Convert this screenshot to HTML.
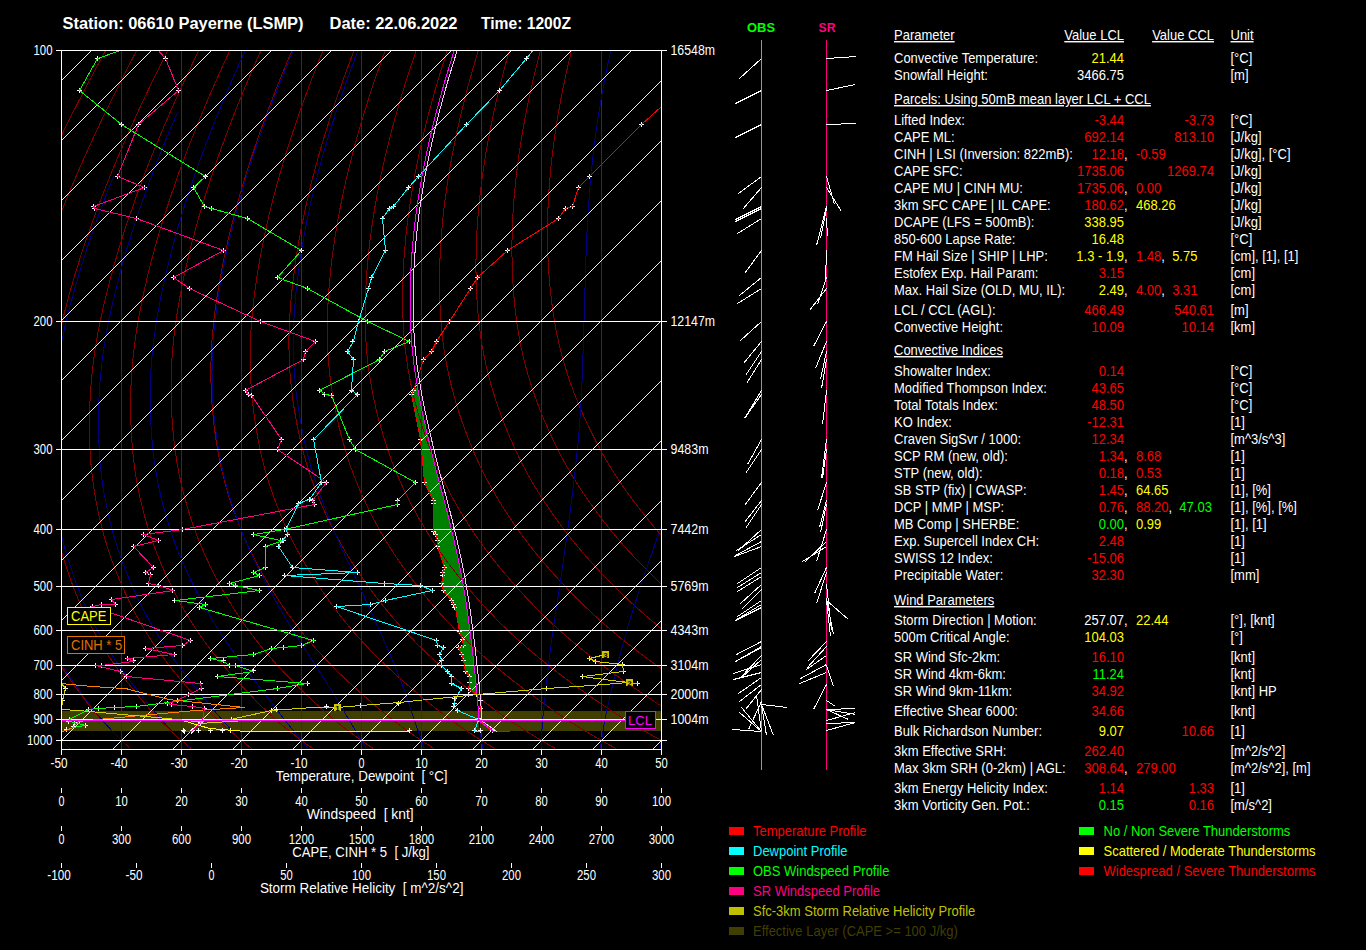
<!DOCTYPE html><html><head><meta charset="utf-8"><style>html,body{margin:0;padding:0;background:#000;width:1366px;height:950px;overflow:hidden}svg{display:block}text{font-family:"Liberation Sans",sans-serif}</style></head><body>
<svg width="1366" height="950" viewBox="0 0 1366 950">
<rect width="1366" height="950" fill="#000"/>
<defs><clipPath id="pc"><rect x="62" y="51" width="599" height="698"/></clipPath></defs>
<g clip-path="url(#pc)" shape-rendering="crispEdges">
<rect x="62" y="711" width="599" height="20" fill="#403e00"/>
<polygon points="413.89,388 413.54,389 413.2,390 412.89,391 412.57,392 412.26,393 411.95,394 411.74,395 411.93,396 412.13,397 412.33,398 412.52,399 412.72,400 412.91,401 413.11,402 413.3,403 413.5,404 413.69,405 413.89,406 414.09,407 414.28,408 414.48,409 414.67,410 414.87,411 415.06,412 415.26,413 415.45,414 415.65,415 415.84,416 416.04,417 416.24,418 416.43,419 416.63,420 416.82,421 417.02,422 417.21,423 417.41,424 417.6,425 417.8,426 418,427 418.19,428 418.39,429 418.58,430 418.78,431 418.97,432 419.17,433 419.36,434 419.56,435 419.75,436 419.95,437 420.15,438 420.34,439 420.49,440 420.61,441 420.74,442 420.86,443 420.99,444 421.11,445 421.24,446 421.36,447 421.49,448 421.61,449 421.73,450 421.82,451 421.9,452 421.99,453 422.08,454 422.17,455 422.26,456 422.35,457 422.44,458 422.53,459 422.62,460 422.71,461 422.79,462 422.88,463 422.97,464 423.06,465 423.15,466 423.24,467 423.33,468 423.42,469 423.51,470 423.59,471 423.68,472 423.77,473 423.86,474 423.95,475 424.04,476 424.13,477 424.22,478 424.31,479 424.4,480 424.48,481 424.57,482 424.94,483 425.42,484 425.9,485 426.38,486 426.86,487 427.34,488 427.82,489 428.3,490 428.78,491 429.26,492 429.74,493 430.22,494 430.7,495 431.18,496 431.66,497 432.14,498 432.62,499 433.1,500 433.1,501 433.1,502 433.1,503 433.1,504 433.12,505 433.13,506 433.15,507 433.16,508 433.18,509 433.19,510 433.21,511 433.22,512 433.23,513 433.25,514 433.26,515 433.28,516 433.29,517 433.31,518 433.32,519 433.34,520 433.35,521 433.36,522 433.38,523 433.39,524 433.41,525 433.42,526 433.44,527 433.45,528 433.47,529 433.48,530 433.49,531 433.87,532 434.48,533 435.09,534 435.57,535 435.9,536 436.23,537 436.57,538 436.9,539 437.23,540 437.38,541 437.47,542 437.57,543 437.66,544 437.76,545 437.85,546 438.07,547 438.4,548 438.73,549 439.06,550 439.39,551 439.72,552 440.06,553 440.39,554 440.72,555 441.05,556 441.38,557 441.71,558 442.05,559 442.38,560 442.71,561 443.04,562 443.37,563 443.71,564 444.04,565 444.37,566 444.7,567 444.43,568 443.9,569 443.37,570 442.84,571 442.31,572 442.29,573 442.6,574 442.91,575 442.89,576 442.74,577 442.59,578 442.43,579 442.28,580 442.13,581 441.98,582 441.82,583 441.73,584 441.85,585 441.98,586 442.13,587 442.47,588 442.8,589 443.13,590 443.71,591 444.52,592 445.34,593 446.15,594 446.96,595 447.78,596 448.59,597 449.41,598 450.22,599 451.04,600 451.63,601 452.18,602 452.72,603 453.27,604 453.81,605 454.38,606 454.94,607 455.17,608 455.35,609 455.53,610 455.71,611 455.9,612 456.08,613 456.26,614 456.45,615 456.63,616 456.81,617 457,618 457.18,619 457.37,620 457.55,621 457.73,622 457.91,623 458.1,624 458.28,625 458.46,626 458.65,627 458.83,628 459.01,629 459.2,630 459.38,631 459.73,632 460.1,633 460.47,634 460.84,635 461.21,636 461.58,637 461.95,638 462.32,639 462.61,640 462.84,641 463.07,642 463.3,643 463.53,644 463.75,645 462.17,646 460.13,647 458.82,648 459.24,649 459.65,650 460.06,651 460.47,652 460.89,653 461.3,654 461.6,655 461.9,656 462.2,657 462.51,658 462.81,659 463.11,660 463.36,661 463.6,662 463.84,663 464.07,664 464.31,665 464.52,666 464.73,667 464.94,668 465.14,669 465.35,670 465.56,671 465.93,672 466.69,673 467.45,674 468.21,675 468.97,676 469.5,677 469.5,678 469.5,679 469.5,680 469.5,681 469.5,682 469.5,683 469.38,684 469.25,685 469.13,686 469.01,687 468.89,688 469.2,689 470.53,690 471.87,691 473.2,692 474.53,693 475.87,694 477.04,694 476.95,693 476.85,692 476.76,691 476.67,690 476.57,689 476.47,688 476.37,687 476.28,686 476.17,685 476.07,684 475.97,683 475.87,682 475.76,681 475.66,680 475.55,679 475.45,678 475.34,677 475.23,676 475.13,675 475.02,674 474.91,673 474.8,672 474.69,671 474.59,670 474.48,669 474.37,668 474.26,667 474.15,666 474.05,665 473.94,664 473.83,663 473.72,662 473.61,661 473.49,660 473.38,659 473.27,658 473.15,657 473.04,656 472.92,655 472.8,654 472.68,653 472.57,652 472.45,651 472.33,650 472.21,649 472.09,648 471.96,647 471.84,646 471.72,645 471.6,644 471.47,643 471.35,642 471.22,641 471.1,640 470.97,639 470.85,638 470.72,637 470.6,636 470.47,635 470.34,634 470.22,633 470.09,632 469.96,631 469.84,630 469.71,629 469.58,628 469.45,627 469.32,626 469.19,625 469.06,624 468.93,623 468.8,622 468.66,621 468.53,620 468.4,619 468.26,618 468.13,617 467.99,616 467.85,615 467.71,614 467.57,613 467.43,612 467.29,611 467.15,610 467.01,609 466.86,608 466.72,607 466.57,606 466.43,605 466.28,604 466.13,603 465.98,602 465.83,601 465.68,600 465.52,599 465.37,598 465.21,597 465.05,596 464.89,595 464.73,594 464.57,593 464.41,592 464.24,591 464.08,590 463.91,589 463.74,588 463.57,587 463.4,586 463.23,585 463.05,584 462.88,583 462.7,582 462.52,581 462.34,580 462.15,579 461.97,578 461.78,577 461.59,576 461.4,575 461.21,574 461.02,573 460.82,572 460.62,571 460.43,570 460.23,569 460.02,568 459.82,567 459.62,566 459.41,565 459.21,564 459,563 458.79,562 458.58,561 458.37,560 458.15,559 457.94,558 457.72,557 457.51,556 457.29,555 457.07,554 456.85,553 456.63,552 456.41,551 456.18,550 455.96,549 455.74,548 455.51,547 455.28,546 455.06,545 454.83,544 454.6,543 454.37,542 454.14,541 453.91,540 453.68,539 453.44,538 453.21,537 452.98,536 452.74,535 452.51,534 452.28,533 452.04,532 451.8,531 451.57,530 451.33,529 451.09,528 450.85,527 450.61,526 450.37,525 450.13,524 449.88,523 449.64,522 449.39,521 449.14,520 448.89,519 448.64,518 448.39,517 448.14,516 447.89,515 447.63,514 447.38,513 447.12,512 446.87,511 446.61,510 446.35,509 446.09,508 445.83,507 445.57,506 445.31,505 445.05,504 444.79,503 444.52,502 444.26,501 444,500 443.73,499 443.47,498 443.2,497 442.94,496 442.67,495 442.41,494 442.14,493 441.88,492 441.61,491 441.34,490 441.08,489 440.81,488 440.55,487 440.28,486 440.01,485 439.75,484 439.48,483 439.22,482 438.95,481 438.69,480 438.42,479 438.16,478 437.89,477 437.63,476 437.37,475 437.11,474 436.84,473 436.58,472 436.32,471 436.06,470 435.8,469 435.54,468 435.29,467 435.03,466 434.77,465 434.52,464 434.26,463 434.01,462 433.76,461 433.5,460 433.25,459 433,458 432.75,457 432.51,456 432.26,455 432.02,454 431.77,453 431.53,452 431.29,451 431.05,450 430.81,449 430.57,448 430.33,447 430.09,446 429.85,445 429.61,444 429.38,443 429.14,442 428.9,441 428.66,440 428.43,439 428.19,438 427.95,437 427.72,436 427.48,435 427.25,434 427.02,433 426.78,432 426.55,431 426.32,430 426.09,429 425.86,428 425.63,427 425.4,426 425.17,425 424.95,424 424.72,423 424.5,422 424.27,421 424.05,420 423.83,419 423.61,418 423.39,417 423.17,416 422.95,415 422.74,414 422.52,413 422.31,412 422.1,411 421.89,410 421.68,409 421.47,408 421.26,407 421.05,406 420.85,405 420.65,404 420.45,403 420.25,402 420.05,401 419.85,400 419.65,399 419.46,398 419.27,397 419.08,396 418.89,395 418.7,394 418.52,393 418.33,392 418.15,391 417.97,390 417.79,389 417.61,388" fill="#008000" stroke="none"/>
<line x1="121.5" y1="50" x2="121.5" y2="749" stroke="#005000" stroke-width="1"/>
<line x1="181.5" y1="50" x2="181.5" y2="749" stroke="#005000" stroke-width="1"/>
<line x1="241.5" y1="50" x2="241.5" y2="749" stroke="#005000" stroke-width="1"/>
<line x1="301.5" y1="50" x2="301.5" y2="749" stroke="#005000" stroke-width="1"/>
<line x1="361.5" y1="50" x2="361.5" y2="749" stroke="#005000" stroke-width="1"/>
<line x1="421.5" y1="50" x2="421.5" y2="749" stroke="#005000" stroke-width="1"/>
<line x1="481.5" y1="50" x2="481.5" y2="749" stroke="#005000" stroke-width="1"/>
<line x1="541.5" y1="50" x2="541.5" y2="749" stroke="#005000" stroke-width="1"/>
<line x1="601.5" y1="50" x2="601.5" y2="749" stroke="#005000" stroke-width="1"/>
<polyline points="105.62,50.5 104.53,52.5 103.44,54.5 102.35,56.5 101.26,58.5 100.18,60.5 99.09,62.5 98.02,64.5 96.94,66.5 95.86,68.5 94.79,70.5 93.72,72.5 92.66,74.5 91.6,76.5 90.54,78.5 89.48,80.5 88.42,82.5 87.37,84.5 86.32,86.5 85.27,88.5 84.23,90.5 83.19,92.5 82.15,94.5 81.11,96.5 80.08,98.5 79.05,100.5 78.02,102.5 77,104.5 75.98,106.5 74.96,108.5 73.94,110.5 72.93,112.5 71.92,114.5 70.91,116.5 69.91,118.5 68.91,120.5 67.91,122.5 66.92,124.5 65.93,126.5 64.94,128.5 63.95,130.5 62.97,132.5 61.99,134.5 61.01,136.5 60.04,138.5 59.07,140.5 58.1,142.5 57.14,144.5 56.18,146.5 55.22,148.5 54.26,150.5 53.31,152.5 52.37,154.5 51.42,156.5 50.48,158.5 49.54,160.5 48.61,162.5 47.68,164.5 46.75,166.5 45.82,168.5 44.9,170.5 43.98,172.5 43.07,174.5 42.16,176.5 41.25,178.5 40.35,180.5 39.45,182.5 38.55,184.5 37.65,186.5 36.76,188.5 35.88,190.5 34.99,192.5 34.11,194.5 33.24,196.5 32.37,198.5 31.5,200.5 30.63,202.5 29.77,204.5 28.91,206.5 28.06,208.5 27.21,210.5 26.36,212.5 25.52,214.5 24.68,216.5 23.85,218.5 23.02,220.5 22.19,222.5 21.37,224.5 20.55,226.5 19.73,228.5 18.92,230.5 18.11,232.5 17.31,234.5 16.51,236.5 15.71,238.5 14.92,240.5 14.14,242.5 13.35,244.5 12.57,246.5 11.8,248.5 11.03,250.5 10.26,252.5 9.5,254.5 8.74,256.5 7.99,258.5 7.24,260.5 6.49,262.5 5.75,264.5 5.02,266.5 4.28,268.5 3.56,270.5 2.83,272.5 2.11,274.5 1.4,276.5 0.69,278.5 -0.02,280.5 -0.72,282.5 -1.41,284.5 -2.1,286.5 -2.79,288.5 -3.47,290.5 -4.15,292.5 -4.82,294.5 -5.49,296.5 -6.15,298.5 -6.81,300.5 -7.47,302.5 -8.11,304.5 -8.76,306.5 -9.4,308.5 -10.03,310.5 -10.66,312.5 -11.28,314.5 -11.9,316.5 -12.52,318.5 -13.12,320.5 -13.73,322.5 -14.32,324.5 -14.91,326.5 -15.5,328.5 -16.07,330.5 -16.64,332.5 -17.2,334.5 -17.76,336.5 -18.31,338.5 -18.85,340.5 -19.38,342.5 -19.91,344.5 -20.43,346.5 -20.94,348.5 -21.44,350.5 -21.94,352.5 -22.43,354.5 -22.91,356.5 -23.39,358.5 -23.86,360.5 -24.32,362.5 -24.78,364.5 -25.22,366.5 -25.66,368.5 -26.1,370.5 -26.52,372.5 -26.94,374.5 -27.35,376.5 -27.76,378.5 -28.15,380.5 -28.54,382.5 -28.92,384.5 -29.3,386.5 -29.67,388.5 -30.03,390.5 -30.38,392.5 -30.73,394.5 -31.06,396.5 -31.4,398.5 -31.72,400.5 -32.04,402.5 -32.35,404.5 -32.65,406.5 -32.95,408.5 -33.24,410.5 -33.52,412.5 -33.8,414.5 -34.06,416.5 -34.33,418.5 -34.58,420.5 -34.83,422.5 -35.07,424.5 -35.3,426.5 -35.53,428.5 -35.75,430.5 -35.97,432.5 -36.18,434.5 -36.38,436.5 -36.57,438.5 -36.76,440.5 -36.94,442.5 -37.12,444.5 -37.29,446.5 -37.45,448.5 -37.61,450.5 -37.76,452.5 -37.9,454.5 -38.03,456.5 -38.15,458.5 -38.26,460.5 -38.35,462.5 -38.44,464.5 -38.52,466.5 -38.59,468.5 -38.65,470.5 -38.7,472.5 -38.75,474.5 -38.78,476.5 -38.8,478.5 -38.81,480.5 -38.81,482.5 -38.8,484.5 -38.79,486.5 -38.76,488.5 -38.72,490.5 -38.68,492.5 -38.62,494.5 -38.56,496.5 -38.48,498.5 -38.4,500.5 -38.3,502.5 -38.2,504.5 -38.09,506.5 -37.97,508.5 -37.84,510.5 -37.7,512.5 -37.55,514.5 -37.39,516.5 -37.23,518.5 -37.05,520.5 -36.87,522.5 -36.68,524.5 -36.48,526.5 -36.27,528.5 -36.05,530.5 -35.82,532.5 -35.58,534.5 -35.33,536.5 -35.06,538.5 -34.79,540.5 -34.5,542.5 -34.19,544.5 -33.88,546.5 -33.56,548.5 -33.22,550.5 -32.87,552.5 -32.51,554.5 -32.14,556.5 -31.76,558.5 -31.36,560.5 -30.96,562.5 -30.54,564.5 -30.11,566.5 -29.67,568.5 -29.23,570.5 -28.77,572.5 -28.3,574.5 -27.82,576.5 -27.33,578.5 -26.83,580.5 -26.32,582.5 -25.8,584.5 -25.27,586.5 -24.73,588.5 -24.18,590.5 -23.62,592.5 -23.05,594.5 -22.46,596.5 -21.87,598.5 -21.26,600.5 -20.64,602.5 -20,604.5 -19.35,606.5 -18.69,608.5 -18.02,610.5 -17.33,612.5 -16.63,614.5 -15.92,616.5 -15.19,618.5 -14.44,620.5 -13.68,622.5 -12.91,624.5 -12.12,626.5 -11.31,628.5 -10.49,630.5 -9.65,632.5 -8.79,634.5 -7.92,636.5 -7.02,638.5 -6.11,640.5 -5.19,642.5 -4.24,644.5 -3.28,646.5 -2.3,648.5 -1.31,650.5 -0.29,652.5 0.73,654.5 1.78,656.5 2.83,658.5 3.91,660.5 5,662.5 6.1,664.5 7.22,666.5 8.35,668.5 9.51,670.5 10.69,672.5 11.89,674.5 13.1,676.5 14.33,678.5 15.58,680.5 16.85,682.5 18.13,684.5 19.42,686.5 20.73,688.5 22.05,690.5 23.38,692.5 24.72,694.5 26.07,696.5 27.43,698.5 28.79,700.5 30.17,702.5 31.56,704.5 32.97,706.5 34.4,708.5 35.85,710.5 37.33,712.5 38.84,714.5 40.38,716.5 41.95,718.5 43.57,720.5 45.22,722.5 46.9,724.5 48.62,726.5 50.37,728.5 52.15,730.5 53.96,732.5 55.8,734.5 57.67,736.5 59.57,738.5 61.5,740.5 63.47,742.5 65.48,744.5 67.54,746.5 69.63,748.5" fill="none" stroke="#800000" stroke-width="1" />
<polyline points="136.68,50.5 135.63,52.5 134.57,54.5 133.53,56.5 132.48,58.5 131.44,60.5 130.4,62.5 129.36,64.5 128.32,66.5 127.29,68.5 126.26,70.5 125.23,72.5 124.21,74.5 123.19,76.5 122.17,78.5 121.15,80.5 120.14,82.5 119.13,84.5 118.12,86.5 117.12,88.5 116.12,90.5 115.12,92.5 114.13,94.5 113.13,96.5 112.14,98.5 111.16,100.5 110.17,102.5 109.19,104.5 108.22,106.5 107.24,108.5 106.27,110.5 105.3,112.5 104.34,114.5 103.37,116.5 102.41,118.5 101.46,120.5 100.5,122.5 99.56,124.5 98.61,126.5 97.66,128.5 96.72,130.5 95.79,132.5 94.85,134.5 93.92,136.5 93,138.5 92.07,140.5 91.15,142.5 90.23,144.5 89.32,146.5 88.41,148.5 87.5,150.5 86.6,152.5 85.7,154.5 84.8,156.5 83.9,158.5 83.01,160.5 82.13,162.5 81.24,164.5 80.36,166.5 79.49,168.5 78.61,170.5 77.74,172.5 76.88,174.5 76.02,176.5 75.16,178.5 74.3,180.5 73.45,182.5 72.6,184.5 71.76,186.5 70.92,188.5 70.08,190.5 69.25,192.5 68.42,194.5 67.59,196.5 66.77,198.5 65.95,200.5 65.14,202.5 64.33,204.5 63.52,206.5 62.72,208.5 61.92,210.5 61.13,212.5 60.34,214.5 59.55,216.5 58.77,218.5 57.99,220.5 57.22,222.5 56.45,224.5 55.68,226.5 54.92,228.5 54.16,230.5 53.4,232.5 52.65,234.5 51.91,236.5 51.17,238.5 50.43,240.5 49.7,242.5 48.97,244.5 48.24,246.5 47.52,248.5 46.81,250.5 46.1,252.5 45.39,254.5 44.69,256.5 43.99,258.5 43.3,260.5 42.61,262.5 41.92,264.5 41.24,266.5 40.57,268.5 39.9,270.5 39.23,272.5 38.57,274.5 37.91,276.5 37.26,278.5 36.61,280.5 35.97,282.5 35.33,284.5 34.7,286.5 34.07,288.5 33.45,290.5 32.83,292.5 32.22,294.5 31.61,296.5 31.01,298.5 30.41,300.5 29.82,302.5 29.23,304.5 28.64,306.5 28.07,308.5 27.49,310.5 26.93,312.5 26.36,314.5 25.81,316.5 25.26,318.5 24.71,320.5 24.17,322.5 23.64,324.5 23.11,326.5 22.59,328.5 22.08,330.5 21.57,332.5 21.08,334.5 20.59,336.5 20.1,338.5 19.63,340.5 19.16,342.5 18.7,344.5 18.25,346.5 17.8,348.5 17.36,350.5 16.93,352.5 16.51,354.5 16.09,356.5 15.69,358.5 15.29,360.5 14.89,362.5 14.51,364.5 14.13,366.5 13.76,368.5 13.4,370.5 13.04,372.5 12.69,374.5 12.35,376.5 12.02,378.5 11.7,380.5 11.38,382.5 11.07,384.5 10.77,386.5 10.47,388.5 10.19,390.5 9.91,392.5 9.64,394.5 9.37,396.5 9.11,398.5 8.87,400.5 8.62,402.5 8.39,404.5 8.16,406.5 7.94,408.5 7.73,410.5 7.52,412.5 7.32,414.5 7.13,416.5 6.95,418.5 6.77,420.5 6.6,422.5 6.44,424.5 6.29,426.5 6.14,428.5 6,430.5 5.86,432.5 5.73,434.5 5.61,436.5 5.5,438.5 5.39,440.5 5.29,442.5 5.2,444.5 5.11,446.5 5.03,448.5 4.95,450.5 4.89,452.5 4.83,454.5 4.79,456.5 4.75,458.5 4.73,460.5 4.71,462.5 4.71,464.5 4.71,466.5 4.73,468.5 4.76,470.5 4.79,472.5 4.84,474.5 4.9,476.5 4.97,478.5 5.04,480.5 5.13,482.5 5.23,484.5 5.34,486.5 5.45,488.5 5.58,490.5 5.72,492.5 5.87,494.5 6.03,496.5 6.19,498.5 6.37,500.5 6.56,502.5 6.75,504.5 6.96,506.5 7.18,508.5 7.4,510.5 7.64,512.5 7.88,514.5 8.14,516.5 8.4,518.5 8.67,520.5 8.95,522.5 9.24,524.5 9.54,526.5 9.85,528.5 10.17,530.5 10.49,532.5 10.84,534.5 11.19,536.5 11.56,538.5 11.94,540.5 12.33,542.5 12.73,544.5 13.15,546.5 13.58,548.5 14.02,550.5 14.48,552.5 14.94,554.5 15.42,556.5 15.91,558.5 16.41,560.5 16.92,562.5 17.45,564.5 17.98,566.5 18.53,568.5 19.09,570.5 19.66,572.5 20.24,574.5 20.83,576.5 21.43,578.5 22.04,580.5 22.67,582.5 23.3,584.5 23.94,586.5 24.59,588.5 25.26,590.5 25.93,592.5 26.62,594.5 27.32,596.5 28.03,598.5 28.76,600.5 29.5,602.5 30.25,604.5 31.02,606.5 31.8,608.5 32.59,610.5 33.4,612.5 34.22,614.5 35.06,616.5 35.91,618.5 36.78,620.5 37.66,622.5 38.56,624.5 39.47,626.5 40.41,628.5 41.35,630.5 42.32,632.5 43.31,634.5 44.31,636.5 45.33,638.5 46.37,640.5 47.43,642.5 48.51,644.5 49.61,646.5 50.72,648.5 51.85,650.5 52.99,652.5 54.16,654.5 55.34,656.5 56.53,658.5 57.74,660.5 58.97,662.5 60.21,664.5 61.47,666.5 62.75,668.5 64.05,670.5 65.36,672.5 66.7,674.5 68.06,676.5 69.44,678.5 70.83,680.5 72.25,682.5 73.67,684.5 75.11,686.5 76.57,688.5 78.04,690.5 79.52,692.5 81.01,694.5 82.51,696.5 84.02,698.5 85.54,700.5 87.06,702.5 88.61,704.5 90.17,706.5 91.75,708.5 93.36,710.5 94.99,712.5 96.66,714.5 98.35,716.5 100.09,718.5 101.87,720.5 103.68,722.5 105.53,724.5 107.42,726.5 109.33,728.5 111.28,730.5 113.26,732.5 115.28,734.5 117.32,736.5 119.4,738.5 121.5,740.5 123.64,742.5 125.84,744.5 128.08,746.5 130.36,748.5" fill="none" stroke="#800000" stroke-width="1" />
<polyline points="167.74,50.5 166.72,52.5 165.71,54.5 164.7,56.5 163.7,58.5 162.7,60.5 161.7,62.5 160.7,64.5 159.71,66.5 158.72,68.5 157.73,70.5 156.74,72.5 155.76,74.5 154.78,76.5 153.81,78.5 152.83,80.5 151.86,82.5 150.89,84.5 149.93,86.5 148.97,88.5 148.01,90.5 147.05,92.5 146.1,94.5 145.15,96.5 144.21,98.5 143.26,100.5 142.32,102.5 141.39,104.5 140.45,106.5 139.52,108.5 138.59,110.5 137.67,112.5 136.75,114.5 135.83,116.5 134.92,118.5 134.01,120.5 133.1,122.5 132.19,124.5 131.29,126.5 130.39,128.5 129.5,130.5 128.61,132.5 127.72,134.5 126.83,136.5 125.95,138.5 125.07,140.5 124.2,142.5 123.33,144.5 122.46,146.5 121.6,148.5 120.74,150.5 119.88,152.5 119.03,154.5 118.18,156.5 117.33,158.5 116.49,160.5 115.65,162.5 114.81,164.5 113.98,166.5 113.15,168.5 112.33,170.5 111.51,172.5 110.69,174.5 109.88,176.5 109.07,178.5 108.26,180.5 107.46,182.5 106.66,184.5 105.86,186.5 105.07,188.5 104.29,190.5 103.5,192.5 102.72,194.5 101.95,196.5 101.18,198.5 100.41,200.5 99.65,202.5 98.89,204.5 98.13,206.5 97.38,208.5 96.64,210.5 95.89,212.5 95.15,214.5 94.42,216.5 93.69,218.5 92.96,220.5 92.24,222.5 91.52,224.5 90.81,226.5 90.1,228.5 89.4,230.5 88.69,232.5 88,234.5 87.31,236.5 86.62,238.5 85.94,240.5 85.26,242.5 84.58,244.5 83.91,246.5 83.25,248.5 82.59,250.5 81.93,252.5 81.28,254.5 80.63,256.5 79.99,258.5 79.35,260.5 78.72,262.5 78.09,264.5 77.47,266.5 76.85,268.5 76.24,270.5 75.63,272.5 75.03,274.5 74.43,276.5 73.83,278.5 73.24,280.5 72.66,282.5 72.08,284.5 71.51,286.5 70.94,288.5 70.37,290.5 69.81,292.5 69.26,294.5 68.71,296.5 68.17,298.5 67.63,300.5 67.1,302.5 66.57,304.5 66.05,306.5 65.53,308.5 65.02,310.5 64.51,312.5 64.01,314.5 63.52,316.5 63.03,318.5 62.54,320.5 62.07,322.5 61.6,324.5 61.13,326.5 60.68,328.5 60.23,330.5 59.79,332.5 59.35,334.5 58.93,336.5 58.51,338.5 58.1,340.5 57.7,342.5 57.31,344.5 56.92,346.5 56.54,348.5 56.17,350.5 55.81,352.5 55.45,354.5 55.1,356.5 54.76,358.5 54.43,360.5 54.11,362.5 53.79,364.5 53.48,366.5 53.18,368.5 52.89,370.5 52.61,372.5 52.33,374.5 52.06,376.5 51.8,378.5 51.55,380.5 51.3,382.5 51.07,384.5 50.84,386.5 50.61,388.5 50.4,390.5 50.2,392.5 50,394.5 49.81,396.5 49.63,398.5 49.45,400.5 49.28,402.5 49.13,404.5 48.97,406.5 48.83,408.5 48.69,410.5 48.57,412.5 48.45,414.5 48.33,416.5 48.23,418.5 48.13,420.5 48.04,422.5 47.95,424.5 47.88,426.5 47.81,428.5 47.75,430.5 47.69,432.5 47.64,434.5 47.6,436.5 47.57,438.5 47.54,440.5 47.52,442.5 47.51,444.5 47.51,446.5 47.51,448.5 47.51,450.5 47.53,452.5 47.56,454.5 47.6,456.5 47.65,458.5 47.71,460.5 47.78,462.5 47.86,464.5 47.95,466.5 48.06,468.5 48.17,470.5 48.29,472.5 48.43,474.5 48.57,476.5 48.73,478.5 48.9,480.5 49.07,482.5 49.26,484.5 49.46,486.5 49.67,488.5 49.89,490.5 50.12,492.5 50.36,494.5 50.61,496.5 50.87,498.5 51.14,500.5 51.42,502.5 51.71,504.5 52.01,506.5 52.32,508.5 52.64,510.5 52.98,512.5 53.32,514.5 53.67,516.5 54.03,518.5 54.4,520.5 54.77,522.5 55.16,524.5 55.56,526.5 55.97,528.5 56.38,530.5 56.81,532.5 57.25,534.5 57.71,536.5 58.18,538.5 58.66,540.5 59.15,542.5 59.66,544.5 60.18,546.5 60.72,548.5 61.26,550.5 61.82,552.5 62.39,554.5 62.98,556.5 63.57,558.5 64.18,560.5 64.8,562.5 65.44,564.5 66.08,566.5 66.74,568.5 67.41,570.5 68.09,572.5 68.78,574.5 69.48,576.5 70.19,578.5 70.92,580.5 71.65,582.5 72.39,584.5 73.15,586.5 73.92,588.5 74.7,590.5 75.49,592.5 76.29,594.5 77.11,596.5 77.94,598.5 78.78,600.5 79.63,602.5 80.5,604.5 81.39,606.5 82.29,608.5 83.2,610.5 84.13,612.5 85.07,614.5 86.03,616.5 87,618.5 87.99,620.5 89,622.5 90.02,624.5 91.07,626.5 92.12,628.5 93.2,630.5 94.29,632.5 95.41,634.5 96.54,636.5 97.69,638.5 98.86,640.5 100.05,642.5 101.26,644.5 102.49,646.5 103.74,648.5 105,650.5 106.28,652.5 107.58,654.5 108.89,656.5 110.23,658.5 111.58,660.5 112.94,662.5 114.32,664.5 115.72,666.5 117.14,668.5 118.58,670.5 120.04,672.5 121.52,674.5 123.03,676.5 124.55,678.5 126.09,680.5 127.65,682.5 129.22,684.5 130.81,686.5 132.41,688.5 134.03,690.5 135.66,692.5 137.3,694.5 138.95,696.5 140.61,698.5 142.28,700.5 143.96,702.5 145.65,704.5 147.37,706.5 149.1,708.5 150.86,710.5 152.65,712.5 154.48,714.5 156.33,716.5 158.23,718.5 160.17,720.5 162.15,722.5 164.16,724.5 166.21,726.5 168.3,728.5 170.41,730.5 172.57,732.5 174.75,734.5 176.97,736.5 179.22,738.5 181.5,740.5 183.82,742.5 186.2,744.5 188.62,746.5 191.08,748.5" fill="none" stroke="#800000" stroke-width="1" />
<polyline points="198.79,50.5 197.82,52.5 196.85,54.5 195.88,56.5 194.92,58.5 193.96,60.5 193,62.5 192.04,64.5 191.09,66.5 190.14,68.5 189.2,70.5 188.25,72.5 187.31,74.5 186.37,76.5 185.44,78.5 184.51,80.5 183.58,82.5 182.66,84.5 181.73,86.5 180.82,88.5 179.9,90.5 178.99,92.5 178.08,94.5 177.17,96.5 176.27,98.5 175.37,100.5 174.47,102.5 173.58,104.5 172.69,106.5 171.8,108.5 170.92,110.5 170.04,112.5 169.16,114.5 168.29,116.5 167.42,118.5 166.55,120.5 165.69,122.5 164.83,124.5 163.97,126.5 163.12,128.5 162.27,130.5 161.43,132.5 160.58,134.5 159.75,136.5 158.91,138.5 158.08,140.5 157.25,142.5 156.43,144.5 155.6,146.5 154.79,148.5 153.97,150.5 153.16,152.5 152.36,154.5 151.55,156.5 150.75,158.5 149.96,160.5 149.17,162.5 148.38,164.5 147.6,166.5 146.82,168.5 146.04,170.5 145.27,172.5 144.5,174.5 143.73,176.5 142.97,178.5 142.22,180.5 141.46,182.5 140.71,184.5 139.97,186.5 139.23,188.5 138.49,190.5 137.76,192.5 137.03,194.5 136.3,196.5 135.58,198.5 134.87,200.5 134.16,202.5 133.45,204.5 132.74,206.5 132.04,208.5 131.35,210.5 130.66,212.5 129.97,214.5 129.29,216.5 128.61,218.5 127.94,220.5 127.27,222.5 126.6,224.5 125.94,226.5 125.28,228.5 124.63,230.5 123.99,232.5 123.34,234.5 122.7,236.5 122.07,238.5 121.44,240.5 120.82,242.5 120.2,244.5 119.58,246.5 118.97,248.5 118.37,250.5 117.77,252.5 117.17,254.5 116.58,256.5 115.99,258.5 115.41,260.5 114.84,262.5 114.26,264.5 113.7,266.5 113.14,268.5 112.58,270.5 112.03,272.5 111.48,274.5 110.94,276.5 110.4,278.5 109.87,280.5 109.35,282.5 108.83,284.5 108.31,286.5 107.8,288.5 107.3,290.5 106.8,292.5 106.3,294.5 105.81,296.5 105.33,298.5 104.85,300.5 104.38,302.5 103.91,304.5 103.45,306.5 102.99,308.5 102.54,310.5 102.1,312.5 101.66,314.5 101.23,316.5 100.8,318.5 100.38,320.5 99.96,322.5 99.55,324.5 99.15,326.5 98.76,328.5 98.38,330.5 98,332.5 97.63,334.5 97.27,336.5 96.92,338.5 96.58,340.5 96.24,342.5 95.91,344.5 95.59,346.5 95.28,348.5 94.98,350.5 94.68,352.5 94.39,354.5 94.11,356.5 93.84,358.5 93.58,360.5 93.32,362.5 93.08,364.5 92.84,366.5 92.61,368.5 92.38,370.5 92.17,372.5 91.97,374.5 91.77,376.5 91.58,378.5 91.4,380.5 91.22,382.5 91.06,384.5 90.9,386.5 90.76,388.5 90.62,390.5 90.48,392.5 90.36,394.5 90.24,396.5 90.14,398.5 90.04,400.5 89.95,402.5 89.86,404.5 89.79,406.5 89.72,408.5 89.66,410.5 89.61,412.5 89.57,414.5 89.53,416.5 89.5,418.5 89.48,420.5 89.47,422.5 89.46,424.5 89.47,426.5 89.48,428.5 89.5,430.5 89.52,432.5 89.55,434.5 89.59,436.5 89.64,438.5 89.7,440.5 89.76,442.5 89.83,444.5 89.9,446.5 89.99,448.5 90.08,450.5 90.18,452.5 90.29,454.5 90.41,456.5 90.55,458.5 90.69,460.5 90.85,462.5 91.01,464.5 91.19,466.5 91.38,468.5 91.58,470.5 91.79,472.5 92.02,474.5 92.25,476.5 92.5,478.5 92.75,480.5 93.02,482.5 93.3,484.5 93.58,486.5 93.88,488.5 94.19,490.5 94.52,492.5 94.85,494.5 95.19,496.5 95.54,498.5 95.91,500.5 96.28,502.5 96.67,504.5 97.06,506.5 97.47,508.5 97.89,510.5 98.31,512.5 98.75,514.5 99.2,516.5 99.65,518.5 100.12,520.5 100.6,522.5 101.08,524.5 101.58,526.5 102.08,528.5 102.6,530.5 103.13,532.5 103.67,534.5 104.23,536.5 104.8,538.5 105.38,540.5 105.98,542.5 106.59,544.5 107.22,546.5 107.85,548.5 108.5,550.5 109.17,552.5 109.85,554.5 110.54,556.5 111.24,558.5 111.96,560.5 112.68,562.5 113.42,564.5 114.18,566.5 114.94,568.5 115.72,570.5 116.51,572.5 117.31,574.5 118.13,576.5 118.95,578.5 119.79,580.5 120.63,582.5 121.49,584.5 122.36,586.5 123.24,588.5 124.13,590.5 125.04,592.5 125.96,594.5 126.89,596.5 127.84,598.5 128.8,600.5 129.77,602.5 130.76,604.5 131.76,606.5 132.78,608.5 133.81,610.5 134.86,612.5 135.92,614.5 137,616.5 138.1,618.5 139.21,620.5 140.34,622.5 141.49,624.5 142.66,626.5 143.84,628.5 145.04,630.5 146.26,632.5 147.51,634.5 148.77,636.5 150.05,638.5 151.35,640.5 152.67,642.5 154.01,644.5 155.37,646.5 156.75,648.5 158.15,650.5 159.57,652.5 161,654.5 162.45,656.5 163.92,658.5 165.41,660.5 166.91,662.5 168.43,664.5 169.97,666.5 171.53,668.5 173.11,670.5 174.72,672.5 176.34,674.5 177.99,676.5 179.66,678.5 181.34,680.5 183.05,682.5 184.77,684.5 186.5,686.5 188.26,688.5 190.02,690.5 191.8,692.5 193.59,694.5 195.39,696.5 197.2,698.5 199.02,700.5 200.85,702.5 202.7,704.5 204.57,706.5 206.46,708.5 208.37,710.5 210.32,712.5 212.29,714.5 214.31,716.5 216.37,718.5 218.47,720.5 220.61,722.5 222.79,724.5 225.01,726.5 227.26,728.5 229.55,730.5 231.87,732.5 234.23,734.5 236.62,736.5 239.04,738.5 241.5,740.5 244,742.5 246.55,744.5 249.16,746.5 251.8,748.5" fill="none" stroke="#800000" stroke-width="1" />
<polyline points="229.85,50.5 228.92,52.5 227.99,54.5 227.06,56.5 226.14,58.5 225.22,60.5 224.3,62.5 223.39,64.5 222.48,66.5 221.57,68.5 220.66,70.5 219.76,72.5 218.86,74.5 217.97,76.5 217.08,78.5 216.19,80.5 215.3,82.5 214.42,84.5 213.54,86.5 212.66,88.5 211.79,90.5 210.92,92.5 210.05,94.5 209.19,96.5 208.33,98.5 207.48,100.5 206.62,102.5 205.77,104.5 204.93,106.5 204.08,108.5 203.25,110.5 202.41,112.5 201.58,114.5 200.75,116.5 199.92,118.5 199.1,120.5 198.28,122.5 197.47,124.5 196.66,126.5 195.85,128.5 195.05,130.5 194.25,132.5 193.45,134.5 192.66,136.5 191.87,138.5 191.08,140.5 190.3,142.5 189.52,144.5 188.75,146.5 187.98,148.5 187.21,150.5 186.45,152.5 185.69,154.5 184.93,156.5 184.18,158.5 183.43,160.5 182.69,162.5 181.95,164.5 181.21,166.5 180.48,168.5 179.75,170.5 179.03,172.5 178.31,174.5 177.59,176.5 176.88,178.5 176.17,180.5 175.47,182.5 174.77,184.5 174.07,186.5 173.38,188.5 172.7,190.5 172.01,192.5 171.33,194.5 170.66,196.5 169.99,198.5 169.32,200.5 168.66,202.5 168.01,204.5 167.35,206.5 166.7,208.5 166.06,210.5 165.42,212.5 164.79,214.5 164.16,216.5 163.53,218.5 162.91,220.5 162.29,222.5 161.68,224.5 161.07,226.5 160.47,228.5 159.87,230.5 159.28,232.5 158.69,234.5 158.1,236.5 157.52,238.5 156.95,240.5 156.38,242.5 155.81,244.5 155.25,246.5 154.7,248.5 154.15,250.5 153.6,252.5 153.06,254.5 152.53,256.5 152,258.5 151.47,260.5 150.95,262.5 150.44,264.5 149.93,266.5 149.42,268.5 148.92,270.5 148.43,272.5 147.94,274.5 147.45,276.5 146.98,278.5 146.5,280.5 146.03,282.5 145.57,284.5 145.11,286.5 144.66,288.5 144.22,290.5 143.78,292.5 143.34,294.5 142.91,296.5 142.49,298.5 142.07,300.5 141.66,302.5 141.25,304.5 140.85,306.5 140.46,308.5 140.07,310.5 139.69,312.5 139.31,314.5 138.94,316.5 138.57,318.5 138.21,320.5 137.86,322.5 137.51,324.5 137.18,326.5 136.85,328.5 136.53,330.5 136.22,332.5 135.91,334.5 135.62,336.5 135.33,338.5 135.05,340.5 134.78,342.5 134.52,344.5 134.26,346.5 134.02,348.5 133.78,350.5 133.55,352.5 133.33,354.5 133.12,356.5 132.92,358.5 132.72,360.5 132.54,362.5 132.36,364.5 132.19,366.5 132.03,368.5 131.88,370.5 131.74,372.5 131.6,374.5 131.47,376.5 131.36,378.5 131.25,380.5 131.15,382.5 131.05,384.5 130.97,386.5 130.9,388.5 130.83,390.5 130.77,392.5 130.72,394.5 130.68,396.5 130.65,398.5 130.62,400.5 130.61,402.5 130.6,404.5 130.6,406.5 130.61,408.5 130.63,410.5 130.65,412.5 130.69,414.5 130.73,416.5 130.78,418.5 130.84,420.5 130.9,422.5 130.98,424.5 131.06,426.5 131.15,428.5 131.25,430.5 131.35,432.5 131.46,434.5 131.59,436.5 131.71,438.5 131.85,440.5 131.99,442.5 132.14,444.5 132.3,446.5 132.47,448.5 132.64,450.5 132.82,452.5 133.02,454.5 133.22,456.5 133.44,458.5 133.67,460.5 133.91,462.5 134.17,464.5 134.43,466.5 134.71,468.5 134.99,470.5 135.29,472.5 135.6,474.5 135.93,476.5 136.26,478.5 136.6,480.5 136.96,482.5 137.33,484.5 137.71,486.5 138.1,488.5 138.5,490.5 138.91,492.5 139.34,494.5 139.77,496.5 140.22,498.5 140.68,500.5 141.14,502.5 141.62,504.5 142.11,506.5 142.62,508.5 143.13,510.5 143.65,512.5 144.18,514.5 144.73,516.5 145.28,518.5 145.84,520.5 146.42,522.5 147,524.5 147.6,526.5 148.2,528.5 148.82,530.5 149.45,532.5 150.09,534.5 150.75,536.5 151.42,538.5 152.11,540.5 152.81,542.5 153.52,544.5 154.25,546.5 154.99,548.5 155.74,550.5 156.51,552.5 157.3,554.5 158.09,556.5 158.9,558.5 159.73,560.5 160.56,562.5 161.41,564.5 162.28,566.5 163.15,568.5 164.04,570.5 164.94,572.5 165.85,574.5 166.77,576.5 167.71,578.5 168.66,580.5 169.62,582.5 170.59,584.5 171.57,586.5 172.56,588.5 173.57,590.5 174.59,592.5 175.63,594.5 176.67,596.5 177.74,598.5 178.81,600.5 179.9,602.5 181.01,604.5 182.13,606.5 183.27,608.5 184.42,610.5 185.59,612.5 186.78,614.5 187.98,616.5 189.2,618.5 190.43,620.5 191.69,622.5 192.96,624.5 194.25,626.5 195.56,628.5 196.89,630.5 198.24,632.5 199.61,634.5 201,636.5 202.41,638.5 203.84,640.5 205.29,642.5 206.77,644.5 208.26,646.5 209.77,648.5 211.3,650.5 212.86,652.5 214.42,654.5 216.01,656.5 217.62,658.5 219.24,660.5 220.89,662.5 222.54,664.5 224.22,666.5 225.92,668.5 227.65,670.5 229.39,672.5 231.16,674.5 232.95,676.5 234.76,678.5 236.59,680.5 238.44,682.5 240.31,684.5 242.2,686.5 244.1,688.5 246.01,690.5 247.94,692.5 249.88,694.5 251.83,696.5 253.79,698.5 255.76,700.5 257.74,702.5 259.74,704.5 261.76,706.5 263.81,708.5 265.88,710.5 267.98,712.5 270.11,714.5 272.29,716.5 274.51,718.5 276.77,720.5 279.07,722.5 281.42,724.5 283.8,726.5 286.22,728.5 288.68,730.5 291.17,732.5 293.71,734.5 296.27,736.5 298.87,738.5 301.5,740.5 304.18,742.5 306.91,744.5 309.7,746.5 312.53,748.5" fill="none" stroke="#800000" stroke-width="1" />
<polyline points="260.91,50.5 260.01,52.5 259.13,54.5 258.24,56.5 257.36,58.5 256.48,60.5 255.6,62.5 254.73,64.5 253.86,66.5 252.99,68.5 252.13,70.5 251.27,72.5 250.41,74.5 249.56,76.5 248.71,78.5 247.86,80.5 247.02,82.5 246.18,84.5 245.34,86.5 244.51,88.5 243.68,90.5 242.85,92.5 242.03,94.5 241.21,96.5 240.39,98.5 239.58,100.5 238.77,102.5 237.97,104.5 237.16,106.5 236.37,108.5 235.57,110.5 234.78,112.5 233.99,114.5 233.21,116.5 232.43,118.5 231.65,120.5 230.88,122.5 230.11,124.5 229.34,126.5 228.58,128.5 227.82,130.5 227.07,132.5 226.31,134.5 225.57,136.5 224.82,138.5 224.08,140.5 223.35,142.5 222.62,144.5 221.89,146.5 221.17,148.5 220.45,150.5 219.73,152.5 219.02,154.5 218.31,156.5 217.6,158.5 216.9,160.5 216.21,162.5 215.52,164.5 214.83,166.5 214.14,168.5 213.47,170.5 212.79,172.5 212.12,174.5 211.45,176.5 210.79,178.5 210.13,180.5 209.48,182.5 208.83,184.5 208.18,186.5 207.54,188.5 206.9,190.5 206.27,192.5 205.64,194.5 205.02,196.5 204.4,198.5 203.78,200.5 203.17,202.5 202.56,204.5 201.96,206.5 201.37,208.5 200.77,210.5 200.19,212.5 199.6,214.5 199.02,216.5 198.45,218.5 197.88,220.5 197.32,222.5 196.76,224.5 196.2,226.5 195.65,228.5 195.11,230.5 194.57,232.5 194.03,234.5 193.5,236.5 192.98,238.5 192.46,240.5 191.94,242.5 191.43,244.5 190.92,246.5 190.42,248.5 189.93,250.5 189.44,252.5 188.95,254.5 188.47,256.5 188,258.5 187.53,260.5 187.06,262.5 186.61,264.5 186.15,266.5 185.7,268.5 185.26,270.5 184.82,272.5 184.39,274.5 183.97,276.5 183.55,278.5 183.13,280.5 182.72,282.5 182.32,284.5 181.92,286.5 181.53,288.5 181.14,290.5 180.76,292.5 180.38,294.5 180.01,296.5 179.65,298.5 179.29,300.5 178.94,302.5 178.6,304.5 178.26,306.5 177.92,308.5 177.59,310.5 177.27,312.5 176.96,314.5 176.65,316.5 176.34,318.5 176.05,320.5 175.76,322.5 175.47,324.5 175.2,326.5 174.94,328.5 174.68,330.5 174.43,332.5 174.19,334.5 173.96,336.5 173.74,338.5 173.52,340.5 173.32,342.5 173.12,344.5 172.94,346.5 172.76,348.5 172.59,350.5 172.43,352.5 172.27,354.5 172.13,356.5 172,358.5 171.87,360.5 171.75,362.5 171.64,364.5 171.54,366.5 171.45,368.5 171.37,370.5 171.3,372.5 171.24,374.5 171.18,376.5 171.13,378.5 171.1,380.5 171.07,382.5 171.05,384.5 171.04,386.5 171.04,388.5 171.04,390.5 171.06,392.5 171.08,394.5 171.12,396.5 171.16,398.5 171.21,400.5 171.27,402.5 171.34,404.5 171.41,406.5 171.5,408.5 171.59,410.5 171.7,412.5 171.81,414.5 171.93,416.5 172.05,418.5 172.19,420.5 172.34,422.5 172.49,424.5 172.65,426.5 172.82,428.5 173,430.5 173.18,432.5 173.37,434.5 173.58,436.5 173.79,438.5 174,440.5 174.23,442.5 174.46,444.5 174.7,446.5 174.95,448.5 175.2,450.5 175.47,452.5 175.75,454.5 176.04,456.5 176.34,458.5 176.66,460.5 176.98,462.5 177.32,464.5 177.67,466.5 178.03,468.5 178.41,470.5 178.79,472.5 179.19,474.5 179.6,476.5 180.02,478.5 180.46,480.5 180.9,482.5 181.36,484.5 181.83,486.5 182.31,488.5 182.8,490.5 183.31,492.5 183.83,494.5 184.35,496.5 184.89,498.5 185.44,500.5 186.01,502.5 186.58,504.5 187.16,506.5 187.76,508.5 188.37,510.5 188.99,512.5 189.62,514.5 190.26,516.5 190.91,518.5 191.57,520.5 192.24,522.5 192.92,524.5 193.62,526.5 194.32,528.5 195.04,530.5 195.76,532.5 196.51,534.5 197.27,536.5 198.04,538.5 198.83,540.5 199.63,542.5 200.45,544.5 201.28,546.5 202.13,548.5 202.99,550.5 203.86,552.5 204.75,554.5 205.65,556.5 206.57,558.5 207.5,560.5 208.44,562.5 209.4,564.5 210.37,566.5 211.36,568.5 212.35,570.5 213.36,572.5 214.39,574.5 215.42,576.5 216.47,578.5 217.53,580.5 218.6,582.5 219.69,584.5 220.78,586.5 221.89,588.5 223.01,590.5 224.15,592.5 225.3,594.5 226.46,596.5 227.64,598.5 228.83,600.5 230.04,602.5 231.26,604.5 232.5,606.5 233.76,608.5 235.03,610.5 236.32,612.5 237.63,614.5 238.95,616.5 240.29,618.5 241.65,620.5 243.03,622.5 244.43,624.5 245.84,626.5 247.28,628.5 248.73,630.5 250.21,632.5 251.71,634.5 253.23,636.5 254.77,638.5 256.33,640.5 257.91,642.5 259.52,644.5 261.14,646.5 262.79,648.5 264.46,650.5 266.14,652.5 267.85,654.5 269.57,656.5 271.32,658.5 273.08,660.5 274.86,662.5 276.66,664.5 278.47,666.5 280.31,668.5 282.18,670.5 284.07,672.5 285.98,674.5 287.92,676.5 289.87,678.5 291.85,680.5 293.84,682.5 295.86,684.5 297.89,686.5 299.94,688.5 302,690.5 304.08,692.5 306.17,694.5 308.28,696.5 310.38,698.5 312.5,700.5 314.64,702.5 316.79,704.5 318.96,706.5 321.16,708.5 323.38,710.5 325.64,712.5 327.93,714.5 330.27,716.5 332.64,718.5 335.07,720.5 337.54,722.5 340.05,724.5 342.6,726.5 345.19,728.5 347.81,730.5 350.48,732.5 353.18,734.5 355.92,736.5 358.69,738.5 361.5,740.5 364.35,742.5 367.27,744.5 370.23,746.5 373.25,748.5" fill="none" stroke="#800000" stroke-width="1" />
<polyline points="291.96,50.5 291.11,52.5 290.26,54.5 289.42,56.5 288.58,58.5 287.74,60.5 286.9,62.5 286.07,64.5 285.24,66.5 284.42,68.5 283.6,70.5 282.78,72.5 281.96,74.5 281.15,76.5 280.35,78.5 279.54,80.5 278.74,82.5 277.94,84.5 277.15,86.5 276.36,88.5 275.57,90.5 274.79,92.5 274.01,94.5 273.23,96.5 272.46,98.5 271.69,100.5 270.92,102.5 270.16,104.5 269.4,106.5 268.65,108.5 267.9,110.5 267.15,112.5 266.41,114.5 265.67,116.5 264.93,118.5 264.2,120.5 263.47,122.5 262.75,124.5 262.02,126.5 261.31,128.5 260.59,130.5 259.89,132.5 259.18,134.5 258.48,136.5 257.78,138.5 257.09,140.5 256.4,142.5 255.71,144.5 255.03,146.5 254.35,148.5 253.68,150.5 253.01,152.5 252.35,154.5 251.69,156.5 251.03,158.5 250.38,160.5 249.73,162.5 249.08,164.5 248.45,166.5 247.81,168.5 247.18,170.5 246.55,172.5 245.93,174.5 245.31,176.5 244.7,178.5 244.09,180.5 243.48,182.5 242.88,184.5 242.28,186.5 241.69,188.5 241.11,190.5 240.52,192.5 239.94,194.5 239.37,196.5 238.8,198.5 238.24,200.5 237.68,202.5 237.12,204.5 236.57,206.5 236.03,208.5 235.49,210.5 234.95,212.5 234.42,214.5 233.89,216.5 233.37,218.5 232.85,220.5 232.34,222.5 231.84,224.5 231.33,226.5 230.84,228.5 230.34,230.5 229.86,232.5 229.38,234.5 228.9,236.5 228.43,238.5 227.96,240.5 227.5,242.5 227.04,244.5 226.59,246.5 226.15,248.5 225.71,250.5 225.27,252.5 224.84,254.5 224.42,256.5 224,258.5 223.59,260.5 223.18,262.5 222.78,264.5 222.38,266.5 221.99,268.5 221.6,270.5 221.22,272.5 220.85,274.5 220.48,276.5 220.12,278.5 219.76,280.5 219.41,282.5 219.06,284.5 218.72,286.5 218.39,288.5 218.06,290.5 217.74,292.5 217.43,294.5 217.12,296.5 216.81,298.5 216.51,300.5 216.22,302.5 215.94,304.5 215.66,306.5 215.39,308.5 215.12,310.5 214.86,312.5 214.6,314.5 214.36,316.5 214.12,318.5 213.88,320.5 213.65,322.5 213.43,324.5 213.22,326.5 213.02,328.5 212.83,330.5 212.65,332.5 212.47,334.5 212.3,336.5 212.15,338.5 212,340.5 211.86,342.5 211.73,344.5 211.61,346.5 211.5,348.5 211.39,350.5 211.3,352.5 211.21,354.5 211.14,356.5 211.07,358.5 211.02,360.5 210.97,362.5 210.93,364.5 210.9,366.5 210.88,368.5 210.87,370.5 210.86,372.5 210.87,374.5 210.89,376.5 210.91,378.5 210.95,380.5 210.99,382.5 211.04,384.5 211.11,386.5 211.18,388.5 211.26,390.5 211.35,392.5 211.45,394.5 211.55,396.5 211.67,398.5 211.8,400.5 211.93,402.5 212.07,404.5 212.23,406.5 212.39,408.5 212.56,410.5 212.74,412.5 212.93,414.5 213.12,416.5 213.33,418.5 213.54,420.5 213.77,422.5 214,424.5 214.24,426.5 214.49,428.5 214.75,430.5 215.01,432.5 215.28,434.5 215.57,436.5 215.86,438.5 216.15,440.5 216.46,442.5 216.78,444.5 217.1,446.5 217.43,448.5 217.76,450.5 218.11,452.5 218.48,454.5 218.85,456.5 219.24,458.5 219.64,460.5 220.05,462.5 220.47,464.5 220.91,466.5 221.36,468.5 221.82,470.5 222.29,472.5 222.78,474.5 223.28,476.5 223.79,478.5 224.31,480.5 224.85,482.5 225.39,484.5 225.95,486.5 226.53,488.5 227.11,490.5 227.71,492.5 228.32,494.5 228.94,496.5 229.57,498.5 230.21,500.5 230.87,502.5 231.54,504.5 232.22,506.5 232.91,508.5 233.61,510.5 234.32,512.5 235.05,514.5 235.79,516.5 236.53,518.5 237.29,520.5 238.06,522.5 238.85,524.5 239.64,526.5 240.44,528.5 241.25,530.5 242.08,532.5 242.93,534.5 243.79,536.5 244.66,538.5 245.55,540.5 246.46,542.5 247.38,544.5 248.31,546.5 249.26,548.5 250.23,550.5 251.21,552.5 252.2,554.5 253.21,556.5 254.23,558.5 255.27,560.5 256.32,562.5 257.39,564.5 258.47,566.5 259.56,568.5 260.67,570.5 261.79,572.5 262.92,574.5 264.07,576.5 265.23,578.5 266.4,580.5 267.59,582.5 268.78,584.5 269.99,586.5 271.21,588.5 272.45,590.5 273.7,592.5 274.96,594.5 276.24,596.5 277.54,598.5 278.85,600.5 280.17,602.5 281.52,604.5 282.88,606.5 284.25,608.5 285.64,610.5 287.05,612.5 288.48,614.5 289.93,616.5 291.39,618.5 292.87,620.5 294.37,622.5 295.89,624.5 297.43,626.5 299,628.5 300.58,630.5 302.18,632.5 303.81,634.5 305.45,636.5 307.13,638.5 308.82,640.5 310.53,642.5 312.27,644.5 314.03,646.5 315.81,648.5 317.61,650.5 319.43,652.5 321.27,654.5 323.13,656.5 325.01,658.5 326.91,660.5 328.83,662.5 330.77,664.5 332.72,666.5 334.71,668.5 336.71,670.5 338.74,672.5 340.8,674.5 342.88,676.5 344.98,678.5 347.1,680.5 349.24,682.5 351.41,684.5 353.59,686.5 355.78,688.5 358,690.5 360.22,692.5 362.47,694.5 364.72,696.5 366.97,698.5 369.25,700.5 371.53,702.5 373.83,704.5 376.16,706.5 378.51,708.5 380.89,710.5 383.3,712.5 385.75,714.5 388.24,716.5 390.78,718.5 393.37,720.5 396,722.5 398.68,724.5 401.39,726.5 404.15,728.5 406.95,730.5 409.78,732.5 412.66,734.5 415.57,736.5 418.52,738.5 421.5,740.5 424.53,742.5 427.63,744.5 430.77,746.5 433.97,748.5" fill="none" stroke="#800000" stroke-width="1" />
<polyline points="323.02,50.5 322.21,52.5 321.4,54.5 320.6,56.5 319.8,58.5 319,60.5 318.21,62.5 317.42,64.5 316.63,66.5 315.84,68.5 315.06,70.5 314.29,72.5 313.52,74.5 312.75,76.5 311.98,78.5 311.22,80.5 310.46,82.5 309.7,84.5 308.95,86.5 308.2,88.5 307.46,90.5 306.72,92.5 305.98,94.5 305.25,96.5 304.52,98.5 303.79,100.5 303.07,102.5 302.35,104.5 301.64,106.5 300.93,108.5 300.22,110.5 299.52,112.5 298.82,114.5 298.12,116.5 297.43,118.5 296.75,120.5 296.06,122.5 295.38,124.5 294.71,126.5 294.04,128.5 293.37,130.5 292.7,132.5 292.05,134.5 291.39,136.5 290.74,138.5 290.09,140.5 289.45,142.5 288.81,144.5 288.17,146.5 287.54,148.5 286.92,150.5 286.3,152.5 285.68,154.5 285.06,156.5 284.45,158.5 283.85,160.5 283.25,162.5 282.65,164.5 282.06,166.5 281.47,168.5 280.89,170.5 280.31,172.5 279.74,174.5 279.17,176.5 278.6,178.5 278.04,180.5 277.49,182.5 276.94,184.5 276.39,186.5 275.85,188.5 275.31,190.5 274.78,192.5 274.25,194.5 273.73,196.5 273.21,198.5 272.69,200.5 272.19,202.5 271.68,204.5 271.18,206.5 270.69,208.5 270.2,210.5 269.71,212.5 269.23,214.5 268.76,216.5 268.29,218.5 267.83,220.5 267.37,222.5 266.91,224.5 266.46,226.5 266.02,228.5 265.58,230.5 265.15,232.5 264.72,234.5 264.3,236.5 263.88,238.5 263.47,240.5 263.06,242.5 262.66,244.5 262.26,246.5 261.87,248.5 261.49,250.5 261.11,252.5 260.73,254.5 260.37,256.5 260,258.5 259.65,260.5 259.29,262.5 258.95,264.5 258.61,266.5 258.27,268.5 257.94,270.5 257.62,272.5 257.31,274.5 256.99,276.5 256.69,278.5 256.39,280.5 256.1,282.5 255.81,284.5 255.53,286.5 255.25,288.5 254.99,290.5 254.72,292.5 254.47,294.5 254.22,296.5 253.97,298.5 253.74,300.5 253.5,302.5 253.28,304.5 253.06,306.5 252.85,308.5 252.64,310.5 252.44,312.5 252.25,314.5 252.07,316.5 251.89,318.5 251.72,320.5 251.55,322.5 251.39,324.5 251.25,326.5 251.11,328.5 250.98,330.5 250.86,332.5 250.75,334.5 250.65,336.5 250.56,338.5 250.47,340.5 250.4,342.5 250.34,344.5 250.28,346.5 250.24,348.5 250.2,350.5 250.17,352.5 250.16,354.5 250.15,356.5 250.15,358.5 250.16,360.5 250.18,362.5 250.21,364.5 250.25,366.5 250.3,368.5 250.36,370.5 250.43,372.5 250.51,374.5 250.59,376.5 250.69,378.5 250.8,380.5 250.91,382.5 251.04,384.5 251.17,386.5 251.32,388.5 251.47,390.5 251.63,392.5 251.81,394.5 251.99,396.5 252.18,398.5 252.38,400.5 252.59,402.5 252.81,404.5 253.04,406.5 253.28,408.5 253.53,410.5 253.78,412.5 254.05,414.5 254.32,416.5 254.61,418.5 254.9,420.5 255.2,422.5 255.51,424.5 255.83,426.5 256.16,428.5 256.5,430.5 256.84,432.5 257.19,434.5 257.56,436.5 257.93,438.5 258.31,440.5 258.7,442.5 259.09,444.5 259.49,446.5 259.91,448.5 260.33,450.5 260.76,452.5 261.21,454.5 261.66,456.5 262.14,458.5 262.62,460.5 263.12,462.5 263.63,464.5 264.15,466.5 264.68,468.5 265.23,470.5 265.79,472.5 266.37,474.5 266.95,476.5 267.55,478.5 268.16,480.5 268.79,482.5 269.43,484.5 270.08,486.5 270.74,488.5 271.42,490.5 272.1,492.5 272.8,494.5 273.52,496.5 274.24,498.5 274.98,500.5 275.73,502.5 276.49,504.5 277.27,506.5 278.05,508.5 278.85,510.5 279.66,512.5 280.48,514.5 281.32,516.5 282.16,518.5 283.02,520.5 283.89,522.5 284.77,524.5 285.66,526.5 286.56,528.5 287.47,530.5 288.4,532.5 289.34,534.5 290.3,536.5 291.28,538.5 292.27,540.5 293.28,542.5 294.3,544.5 295.34,546.5 296.4,548.5 297.47,550.5 298.55,552.5 299.65,554.5 300.77,556.5 301.9,558.5 303.04,560.5 304.2,562.5 305.38,564.5 306.57,566.5 307.77,568.5 308.99,570.5 310.22,572.5 311.46,574.5 312.72,576.5 313.99,578.5 315.27,580.5 316.57,582.5 317.88,584.5 319.2,586.5 320.54,588.5 321.89,590.5 323.25,592.5 324.63,594.5 326.03,596.5 327.44,598.5 328.87,600.5 330.31,602.5 331.77,604.5 333.25,606.5 334.74,608.5 336.25,610.5 337.78,612.5 339.33,614.5 340.9,616.5 342.49,618.5 344.09,620.5 345.72,622.5 347.36,624.5 349.03,626.5 350.71,628.5 352.42,630.5 354.15,632.5 355.91,634.5 357.68,636.5 359.48,638.5 361.31,640.5 363.15,642.5 365.02,644.5 366.91,646.5 368.83,648.5 370.76,650.5 372.72,652.5 374.69,654.5 376.69,656.5 378.71,658.5 380.75,660.5 382.8,662.5 384.88,664.5 386.98,666.5 389.1,668.5 391.25,670.5 393.42,672.5 395.62,674.5 397.84,676.5 400.09,678.5 402.36,680.5 404.64,682.5 406.95,684.5 409.28,686.5 411.63,688.5 413.99,690.5 416.36,692.5 418.76,694.5 421.16,696.5 423.57,698.5 425.99,700.5 428.42,702.5 430.88,704.5 433.36,706.5 435.86,708.5 438.4,710.5 440.96,712.5 443.57,714.5 446.22,716.5 448.92,718.5 451.67,720.5 454.47,722.5 457.31,724.5 460.19,726.5 463.11,728.5 466.08,730.5 469.09,732.5 472.13,734.5 475.22,736.5 478.34,738.5 481.5,740.5 484.71,742.5 487.98,744.5 491.31,746.5 494.69,748.5" fill="none" stroke="#800000" stroke-width="1" />
<polyline points="354.08,50.5 353.3,52.5 352.54,54.5 351.78,56.5 351.02,58.5 350.26,60.5 349.51,62.5 348.76,64.5 348.01,66.5 347.27,68.5 346.53,70.5 345.8,72.5 345.07,74.5 344.34,76.5 343.62,78.5 342.9,80.5 342.18,82.5 341.47,84.5 340.76,86.5 340.05,88.5 339.35,90.5 338.65,92.5 337.96,94.5 337.27,96.5 336.58,98.5 335.9,100.5 335.22,102.5 334.55,104.5 333.88,106.5 333.21,108.5 332.55,110.5 331.89,112.5 331.23,114.5 330.58,116.5 329.94,118.5 329.29,120.5 328.66,122.5 328.02,124.5 327.39,126.5 326.76,128.5 326.14,130.5 325.52,132.5 324.91,134.5 324.3,136.5 323.7,138.5 323.09,140.5 322.5,142.5 321.91,144.5 321.32,146.5 320.73,148.5 320.15,150.5 319.58,152.5 319.01,154.5 318.44,156.5 317.88,158.5 317.32,160.5 316.77,162.5 316.22,164.5 315.68,166.5 315.14,168.5 314.6,170.5 314.07,172.5 313.55,174.5 313.03,176.5 312.51,178.5 312,180.5 311.49,182.5 310.99,184.5 310.49,186.5 310,188.5 309.51,190.5 309.03,192.5 308.55,194.5 308.08,196.5 307.61,198.5 307.15,200.5 306.69,202.5 306.24,204.5 305.79,206.5 305.35,208.5 304.91,210.5 304.48,212.5 304.05,214.5 303.63,216.5 303.21,218.5 302.8,220.5 302.39,222.5 301.99,224.5 301.6,226.5 301.2,228.5 300.82,230.5 300.44,232.5 300.06,234.5 299.7,236.5 299.33,238.5 298.97,240.5 298.62,242.5 298.27,244.5 297.93,246.5 297.6,248.5 297.27,250.5 296.94,252.5 296.62,254.5 296.31,256.5 296,258.5 295.7,260.5 295.41,262.5 295.12,264.5 294.84,266.5 294.56,268.5 294.29,270.5 294.02,272.5 293.76,274.5 293.51,276.5 293.26,278.5 293.02,280.5 292.78,282.5 292.56,284.5 292.33,286.5 292.12,288.5 291.91,290.5 291.7,292.5 291.51,294.5 291.32,296.5 291.13,298.5 290.96,300.5 290.79,302.5 290.62,304.5 290.46,306.5 290.31,308.5 290.17,310.5 290.03,312.5 289.9,314.5 289.78,316.5 289.66,318.5 289.55,320.5 289.45,322.5 289.35,324.5 289.27,326.5 289.2,328.5 289.13,330.5 289.07,332.5 289.03,334.5 288.99,336.5 288.97,338.5 288.95,340.5 288.94,342.5 288.94,344.5 288.95,346.5 288.97,348.5 289.01,350.5 289.05,352.5 289.1,354.5 289.16,356.5 289.23,358.5 289.31,360.5 289.4,362.5 289.5,364.5 289.61,366.5 289.72,368.5 289.85,370.5 289.99,372.5 290.14,374.5 290.3,376.5 290.47,378.5 290.65,380.5 290.83,382.5 291.03,384.5 291.24,386.5 291.46,388.5 291.69,390.5 291.92,392.5 292.17,394.5 292.43,396.5 292.69,398.5 292.97,400.5 293.25,402.5 293.55,404.5 293.85,406.5 294.17,408.5 294.49,410.5 294.83,412.5 295.17,414.5 295.52,416.5 295.88,418.5 296.25,420.5 296.63,422.5 297.02,424.5 297.42,426.5 297.83,428.5 298.25,430.5 298.67,432.5 299.1,434.5 299.55,436.5 300,438.5 300.46,440.5 300.93,442.5 301.41,444.5 301.89,446.5 302.39,448.5 302.89,450.5 303.41,452.5 303.93,454.5 304.48,456.5 305.03,458.5 305.6,460.5 306.18,462.5 306.78,464.5 307.39,466.5 308.01,468.5 308.64,470.5 309.29,472.5 309.95,474.5 310.63,476.5 311.32,478.5 312.02,480.5 312.73,482.5 313.46,484.5 314.2,486.5 314.95,488.5 315.72,490.5 316.5,492.5 317.29,494.5 318.1,496.5 318.92,498.5 319.75,500.5 320.59,502.5 321.45,504.5 322.32,506.5 323.2,508.5 324.09,510.5 325,512.5 325.92,514.5 326.85,516.5 327.79,518.5 328.74,520.5 329.71,522.5 330.69,524.5 331.68,526.5 332.68,528.5 333.69,530.5 334.72,532.5 335.76,534.5 336.82,536.5 337.9,538.5 339,540.5 340.11,542.5 341.23,544.5 342.38,546.5 343.53,548.5 344.71,550.5 345.9,552.5 347.11,554.5 348.33,556.5 349.56,558.5 350.82,560.5 352.08,562.5 353.37,564.5 354.66,566.5 355.98,568.5 357.3,570.5 358.64,572.5 360,574.5 361.37,576.5 362.75,578.5 364.15,580.5 365.55,582.5 366.98,584.5 368.41,586.5 369.86,588.5 371.33,590.5 372.81,592.5 374.3,594.5 375.81,596.5 377.34,598.5 378.88,600.5 380.45,602.5 382.02,604.5 383.62,606.5 385.23,608.5 386.87,610.5 388.52,612.5 390.18,614.5 391.87,616.5 393.58,618.5 395.31,620.5 397.06,622.5 398.83,624.5 400.62,626.5 402.43,628.5 404.27,630.5 406.12,632.5 408.01,634.5 409.91,636.5 411.84,638.5 413.8,640.5 415.77,642.5 417.77,644.5 419.8,646.5 421.84,648.5 423.91,650.5 426,652.5 428.12,654.5 430.25,656.5 432.41,658.5 434.58,660.5 436.78,662.5 438.99,664.5 441.23,666.5 443.49,668.5 445.78,670.5 448.1,672.5 450.44,674.5 452.8,676.5 455.2,678.5 457.61,680.5 460.04,682.5 462.5,684.5 464.97,686.5 467.47,688.5 469.98,690.5 472.51,692.5 475.05,694.5 477.6,696.5 480.16,698.5 482.73,700.5 485.32,702.5 487.92,704.5 490.56,706.5 493.21,708.5 495.9,710.5 498.63,712.5 501.39,714.5 504.2,716.5 507.06,718.5 509.97,720.5 512.93,722.5 515.93,724.5 518.98,726.5 522.08,728.5 525.21,730.5 528.39,732.5 531.61,734.5 534.87,736.5 538.16,738.5 541.5,740.5 544.89,742.5 548.34,744.5 551.85,746.5 555.42,748.5" fill="none" stroke="#800000" stroke-width="1" />
<polyline points="385.13,50.5 384.4,52.5 383.68,54.5 382.95,56.5 382.23,58.5 381.52,60.5 380.81,62.5 380.1,64.5 379.4,66.5 378.7,68.5 378,70.5 377.31,72.5 376.62,74.5 375.93,76.5 375.25,78.5 374.57,80.5 373.9,82.5 373.23,84.5 372.56,86.5 371.9,88.5 371.24,90.5 370.59,92.5 369.94,94.5 369.29,96.5 368.65,98.5 368.01,100.5 367.37,102.5 366.74,104.5 366.11,106.5 365.49,108.5 364.87,110.5 364.26,112.5 363.65,114.5 363.04,116.5 362.44,118.5 361.84,120.5 361.25,122.5 360.66,124.5 360.07,126.5 359.49,128.5 358.92,130.5 358.34,132.5 357.78,134.5 357.21,136.5 356.65,138.5 356.1,140.5 355.55,142.5 355,144.5 354.46,146.5 353.92,148.5 353.39,150.5 352.86,152.5 352.34,154.5 351.82,156.5 351.3,158.5 350.8,160.5 350.29,162.5 349.79,164.5 349.29,166.5 348.8,168.5 348.32,170.5 347.83,172.5 347.36,174.5 346.89,176.5 346.42,178.5 345.96,180.5 345.5,182.5 345.05,184.5 344.6,186.5 344.16,188.5 343.72,190.5 343.29,192.5 342.86,194.5 342.44,196.5 342.02,198.5 341.61,200.5 341.2,202.5 340.8,204.5 340.4,206.5 340.01,208.5 339.62,210.5 339.24,212.5 338.87,214.5 338.5,216.5 338.13,218.5 337.77,220.5 337.42,222.5 337.07,224.5 336.73,226.5 336.39,228.5 336.06,230.5 335.73,232.5 335.41,234.5 335.09,236.5 334.78,238.5 334.48,240.5 334.18,242.5 333.89,244.5 333.6,246.5 333.32,248.5 333.05,250.5 332.78,252.5 332.52,254.5 332.26,256.5 332.01,258.5 331.76,260.5 331.52,262.5 331.29,264.5 331.06,266.5 330.84,268.5 330.63,270.5 330.42,272.5 330.22,274.5 330.02,276.5 329.83,278.5 329.65,280.5 329.47,282.5 329.3,284.5 329.14,286.5 328.98,288.5 328.83,290.5 328.69,292.5 328.55,294.5 328.42,296.5 328.29,298.5 328.18,300.5 328.07,302.5 327.96,304.5 327.87,306.5 327.78,308.5 327.69,310.5 327.62,312.5 327.55,314.5 327.49,316.5 327.43,318.5 327.39,320.5 327.35,322.5 327.31,324.5 327.29,326.5 327.28,328.5 327.28,330.5 327.29,332.5 327.31,334.5 327.34,336.5 327.37,338.5 327.42,340.5 327.48,342.5 327.55,344.5 327.63,346.5 327.71,348.5 327.81,350.5 327.92,352.5 328.04,354.5 328.17,356.5 328.3,358.5 328.45,360.5 328.61,362.5 328.78,364.5 328.96,366.5 329.15,368.5 329.35,370.5 329.56,372.5 329.78,374.5 330.01,376.5 330.25,378.5 330.5,380.5 330.76,382.5 331.03,384.5 331.31,386.5 331.6,388.5 331.9,390.5 332.21,392.5 332.53,394.5 332.86,396.5 333.2,398.5 333.55,400.5 333.92,402.5 334.29,404.5 334.67,406.5 335.06,408.5 335.46,410.5 335.87,412.5 336.29,414.5 336.72,416.5 337.16,418.5 337.61,420.5 338.07,422.5 338.53,424.5 339.01,426.5 339.5,428.5 339.99,430.5 340.5,432.5 341.01,434.5 341.54,436.5 342.07,438.5 342.61,440.5 343.16,442.5 343.72,444.5 344.29,446.5 344.87,448.5 345.45,450.5 346.05,452.5 346.66,454.5 347.29,456.5 347.93,458.5 348.58,460.5 349.25,462.5 349.93,464.5 350.63,466.5 351.33,468.5 352.06,470.5 352.79,472.5 353.54,474.5 354.3,476.5 355.08,478.5 355.87,480.5 356.68,482.5 357.49,484.5 358.32,486.5 359.17,488.5 360.03,490.5 360.9,492.5 361.78,494.5 362.68,496.5 363.59,498.5 364.52,500.5 365.45,502.5 366.4,504.5 367.37,506.5 368.34,508.5 369.33,510.5 370.34,512.5 371.35,514.5 372.38,516.5 373.42,518.5 374.47,520.5 375.53,522.5 376.61,524.5 377.7,526.5 378.79,528.5 379.91,530.5 381.03,532.5 382.18,534.5 383.34,536.5 384.52,538.5 385.72,540.5 386.93,542.5 388.16,544.5 389.41,546.5 390.67,548.5 391.95,550.5 393.25,552.5 394.56,554.5 395.89,556.5 397.23,558.5 398.59,560.5 399.96,562.5 401.35,564.5 402.76,566.5 404.18,568.5 405.62,570.5 407.07,572.5 408.54,574.5 410.02,576.5 411.51,578.5 413.02,580.5 414.54,582.5 416.07,584.5 417.62,586.5 419.19,588.5 420.76,590.5 422.36,592.5 423.97,594.5 425.6,596.5 427.24,598.5 428.9,600.5 430.58,602.5 432.28,604.5 433.99,606.5 435.72,608.5 437.48,610.5 439.25,612.5 441.04,614.5 442.85,616.5 444.68,618.5 446.53,620.5 448.4,622.5 450.3,624.5 452.21,626.5 454.15,628.5 456.11,630.5 458.09,632.5 460.11,634.5 462.14,636.5 464.2,638.5 466.28,640.5 468.39,642.5 470.53,644.5 472.68,646.5 474.86,648.5 477.07,650.5 479.29,652.5 481.54,654.5 483.81,656.5 486.1,658.5 488.41,660.5 490.75,662.5 493.1,664.5 495.48,666.5 497.88,668.5 500.31,670.5 502.77,672.5 505.26,674.5 507.77,676.5 510.3,678.5 512.86,680.5 515.44,682.5 518.05,684.5 520.67,686.5 523.31,688.5 525.97,690.5 528.65,692.5 531.34,694.5 534.04,696.5 536.75,698.5 539.47,700.5 542.21,702.5 544.97,704.5 547.75,706.5 550.56,708.5 553.41,710.5 556.29,712.5 559.21,714.5 562.18,716.5 565.2,718.5 568.27,720.5 571.39,722.5 574.56,724.5 577.78,726.5 581.04,728.5 584.34,730.5 587.69,732.5 591.08,734.5 594.52,736.5 597.99,738.5 601.5,740.5 605.07,742.5 608.7,744.5 612.39,746.5 616.14,748.5" fill="none" stroke="#800000" stroke-width="1" />
<polyline points="416.19,50.5 415.5,52.5 414.81,54.5 414.13,56.5 413.45,58.5 412.78,60.5 412.11,62.5 411.44,64.5 410.78,66.5 410.12,68.5 409.47,70.5 408.82,72.5 408.17,74.5 407.52,76.5 406.89,78.5 406.25,80.5 405.62,82.5 404.99,84.5 404.37,86.5 403.75,88.5 403.13,90.5 402.52,92.5 401.91,94.5 401.31,96.5 400.71,98.5 400.11,100.5 399.52,102.5 398.93,104.5 398.35,106.5 397.77,108.5 397.2,110.5 396.63,112.5 396.06,114.5 395.5,116.5 394.94,118.5 394.39,120.5 393.84,122.5 393.3,124.5 392.76,126.5 392.22,128.5 391.69,130.5 391.16,132.5 390.64,134.5 390.12,136.5 389.61,138.5 389.1,140.5 388.6,142.5 388.1,144.5 387.6,146.5 387.11,148.5 386.63,150.5 386.15,152.5 385.67,154.5 385.2,156.5 384.73,158.5 384.27,160.5 383.81,162.5 383.36,164.5 382.91,166.5 382.47,168.5 382.03,170.5 381.6,172.5 381.17,174.5 380.74,176.5 380.33,178.5 379.91,180.5 379.51,182.5 379.1,184.5 378.7,186.5 378.31,188.5 377.92,190.5 377.54,192.5 377.16,194.5 376.79,196.5 376.43,198.5 376.06,200.5 375.71,202.5 375.36,204.5 375.01,206.5 374.67,208.5 374.34,210.5 374.01,212.5 373.68,214.5 373.36,216.5 373.05,218.5 372.75,220.5 372.44,222.5 372.15,224.5 371.86,226.5 371.57,228.5 371.29,230.5 371.02,232.5 370.75,234.5 370.49,236.5 370.24,238.5 369.99,240.5 369.74,242.5 369.5,244.5 369.27,246.5 369.05,248.5 368.83,250.5 368.61,252.5 368.41,254.5 368.2,256.5 368.01,258.5 367.82,260.5 367.64,262.5 367.46,264.5 367.29,266.5 367.13,268.5 366.97,270.5 366.82,272.5 366.67,274.5 366.53,276.5 366.4,278.5 366.28,280.5 366.16,282.5 366.05,284.5 365.94,286.5 365.84,288.5 365.75,290.5 365.67,292.5 365.59,294.5 365.52,296.5 365.46,298.5 365.4,300.5 365.35,302.5 365.31,304.5 365.27,306.5 365.24,308.5 365.22,310.5 365.2,312.5 365.2,314.5 365.2,316.5 365.2,318.5 365.22,320.5 365.24,322.5 365.27,324.5 365.32,326.5 365.37,328.5 365.43,330.5 365.5,332.5 365.59,334.5 365.68,336.5 365.78,338.5 365.9,340.5 366.02,342.5 366.15,344.5 366.3,346.5 366.45,348.5 366.62,350.5 366.79,352.5 366.98,354.5 367.17,356.5 367.38,358.5 367.6,360.5 367.83,362.5 368.06,364.5 368.31,366.5 368.57,368.5 368.84,370.5 369.12,372.5 369.41,374.5 369.71,376.5 370.02,378.5 370.35,380.5 370.68,382.5 371.02,384.5 371.37,386.5 371.74,388.5 372.11,390.5 372.5,392.5 372.89,394.5 373.3,396.5 373.71,398.5 374.14,400.5 374.58,402.5 375.02,404.5 375.48,406.5 375.95,408.5 376.42,410.5 376.91,412.5 377.41,414.5 377.92,416.5 378.43,418.5 378.96,420.5 379.5,422.5 380.05,424.5 380.6,426.5 381.17,428.5 381.74,430.5 382.33,432.5 382.93,434.5 383.53,436.5 384.14,438.5 384.77,440.5 385.4,442.5 386.04,444.5 386.69,446.5 387.35,448.5 388.02,450.5 388.7,452.5 389.39,454.5 390.1,456.5 390.83,458.5 391.57,460.5 392.32,462.5 393.08,464.5 393.86,466.5 394.66,468.5 395.47,470.5 396.29,472.5 397.13,474.5 397.98,476.5 398.85,478.5 399.73,480.5 400.62,482.5 401.53,484.5 402.45,486.5 403.38,488.5 404.33,490.5 405.3,492.5 406.27,494.5 407.26,496.5 408.27,498.5 409.28,500.5 410.32,502.5 411.36,504.5 412.42,506.5 413.49,508.5 414.58,510.5 415.67,512.5 416.78,514.5 417.91,516.5 419.04,518.5 420.19,520.5 421.35,522.5 422.53,524.5 423.71,526.5 424.91,528.5 426.12,530.5 427.35,532.5 428.6,534.5 429.86,536.5 431.14,538.5 432.44,540.5 433.76,542.5 435.09,544.5 436.44,546.5 437.81,548.5 439.19,550.5 440.59,552.5 442.01,554.5 443.44,556.5 444.89,558.5 446.36,560.5 447.84,562.5 449.34,564.5 450.86,566.5 452.39,568.5 453.93,570.5 455.5,572.5 457.07,574.5 458.66,576.5 460.27,578.5 461.89,580.5 463.52,582.5 465.17,584.5 466.83,586.5 468.51,588.5 470.2,590.5 471.91,592.5 473.64,594.5 475.38,596.5 477.14,598.5 478.92,600.5 480.72,602.5 482.53,604.5 484.36,606.5 486.21,608.5 488.09,610.5 489.98,612.5 491.89,614.5 493.82,616.5 495.77,618.5 497.75,620.5 499.74,622.5 501.76,624.5 503.8,626.5 505.87,628.5 507.95,630.5 510.07,632.5 512.2,634.5 514.37,636.5 516.56,638.5 518.77,640.5 521.01,642.5 523.28,644.5 525.57,646.5 527.88,648.5 530.22,650.5 532.58,652.5 534.96,654.5 537.37,656.5 539.8,658.5 542.25,660.5 544.72,662.5 547.21,664.5 549.73,666.5 552.27,668.5 554.85,670.5 557.45,672.5 560.08,674.5 562.73,676.5 565.41,678.5 568.12,680.5 570.84,682.5 573.59,684.5 576.36,686.5 579.15,688.5 581.96,690.5 584.79,692.5 587.63,694.5 590.48,696.5 593.34,698.5 596.21,700.5 599.1,702.5 602.01,704.5 604.95,706.5 607.92,708.5 610.91,710.5 613.95,712.5 617.03,714.5 620.16,716.5 623.34,718.5 626.57,720.5 629.86,722.5 633.19,724.5 636.57,726.5 640,728.5 643.48,730.5 647,732.5 650.56,734.5 654.17,736.5 657.81,738.5 661.5,740.5 665.24,742.5 669.06,744.5 672.93,746.5 676.86,748.5" fill="none" stroke="#800000" stroke-width="1" />
<polyline points="447.24,50.5 446.6,52.5 445.95,54.5 445.31,56.5 444.67,58.5 444.04,60.5 443.41,62.5 442.79,64.5 442.16,66.5 441.55,68.5 440.93,70.5 440.32,72.5 439.72,74.5 439.12,76.5 438.52,78.5 437.93,80.5 437.34,82.5 436.75,84.5 436.17,86.5 435.59,88.5 435.02,90.5 434.45,92.5 433.89,94.5 433.33,96.5 432.77,98.5 432.22,100.5 431.67,102.5 431.13,104.5 430.59,106.5 430.05,108.5 429.52,110.5 429,112.5 428.48,114.5 427.96,116.5 427.45,118.5 426.94,120.5 426.43,122.5 425.94,124.5 425.44,126.5 424.95,128.5 424.46,130.5 423.98,132.5 423.51,134.5 423.03,136.5 422.57,138.5 422.1,140.5 421.65,142.5 421.19,144.5 420.74,146.5 420.3,148.5 419.86,150.5 419.43,152.5 419,154.5 418.57,156.5 418.16,158.5 417.74,160.5 417.33,162.5 416.93,164.5 416.53,166.5 416.13,168.5 415.74,170.5 415.36,172.5 414.98,174.5 414.6,176.5 414.23,178.5 413.87,180.5 413.51,182.5 413.16,184.5 412.81,186.5 412.47,188.5 412.13,190.5 411.8,192.5 411.47,194.5 411.15,196.5 410.83,198.5 410.52,200.5 410.21,202.5 409.92,204.5 409.62,206.5 409.33,208.5 409.05,210.5 408.77,212.5 408.5,214.5 408.23,216.5 407.97,218.5 407.72,220.5 407.47,222.5 407.23,224.5 406.99,226.5 406.76,228.5 406.53,230.5 406.31,232.5 406.1,234.5 405.89,236.5 405.69,238.5 405.49,240.5 405.3,242.5 405.12,244.5 404.94,246.5 404.77,248.5 404.61,250.5 404.45,252.5 404.3,254.5 404.15,256.5 404.01,258.5 403.88,260.5 403.75,262.5 403.63,264.5 403.52,266.5 403.41,268.5 403.31,270.5 403.22,272.5 403.13,274.5 403.05,276.5 402.97,278.5 402.91,280.5 402.85,282.5 402.79,284.5 402.75,286.5 402.71,288.5 402.68,290.5 402.65,292.5 402.63,294.5 402.62,296.5 402.62,298.5 402.62,300.5 402.63,302.5 402.65,304.5 402.67,306.5 402.7,308.5 402.74,310.5 402.79,312.5 402.85,314.5 402.91,316.5 402.98,318.5 403.05,320.5 403.14,322.5 403.23,324.5 403.34,326.5 403.46,328.5 403.58,330.5 403.72,332.5 403.87,334.5 404.02,336.5 404.19,338.5 404.37,340.5 404.56,342.5 404.76,344.5 404.97,346.5 405.19,348.5 405.42,350.5 405.67,352.5 405.92,354.5 406.18,356.5 406.46,358.5 406.74,360.5 407.04,362.5 407.35,364.5 407.67,366.5 408,368.5 408.33,370.5 408.69,372.5 409.05,374.5 409.42,376.5 409.8,378.5 410.2,380.5 410.6,382.5 411.02,384.5 411.44,386.5 411.88,388.5 412.33,390.5 412.79,392.5 413.25,394.5 413.73,396.5 414.23,398.5 414.73,400.5 415.24,402.5 415.76,404.5 416.29,406.5 416.84,408.5 417.39,410.5 417.96,412.5 418.53,414.5 419.12,416.5 419.71,418.5 420.32,420.5 420.93,422.5 421.56,424.5 422.19,426.5 422.84,428.5 423.49,430.5 424.16,432.5 424.84,434.5 425.52,436.5 426.21,438.5 426.92,440.5 427.63,442.5 428.35,444.5 429.09,446.5 429.83,448.5 430.58,450.5 431.34,452.5 432.12,454.5 432.92,456.5 433.72,458.5 434.55,460.5 435.38,462.5 436.24,464.5 437.1,466.5 437.99,468.5 438.88,470.5 439.79,472.5 440.72,474.5 441.66,476.5 442.61,478.5 443.58,480.5 444.56,482.5 445.56,484.5 446.57,486.5 447.6,488.5 448.64,490.5 449.69,492.5 450.76,494.5 451.84,496.5 452.94,498.5 454.05,500.5 455.18,502.5 456.32,504.5 457.47,506.5 458.64,508.5 459.82,510.5 461.01,512.5 462.22,514.5 463.44,516.5 464.67,518.5 465.92,520.5 467.18,522.5 468.45,524.5 469.73,526.5 471.03,528.5 472.34,530.5 473.67,532.5 475.02,534.5 476.38,536.5 477.76,538.5 479.16,540.5 480.58,542.5 482.02,544.5 483.47,546.5 484.94,548.5 486.43,550.5 487.94,552.5 489.46,554.5 491,556.5 492.56,558.5 494.13,560.5 495.72,562.5 497.33,564.5 498.96,566.5 500.6,568.5 502.25,570.5 503.92,572.5 505.61,574.5 507.31,576.5 509.03,578.5 510.76,580.5 512.51,582.5 514.27,584.5 516.04,586.5 517.83,588.5 519.64,590.5 521.46,592.5 523.31,594.5 525.16,596.5 527.04,598.5 528.94,600.5 530.85,602.5 532.78,604.5 534.73,606.5 536.71,608.5 538.7,610.5 540.71,612.5 542.74,614.5 544.8,616.5 546.87,618.5 548.97,620.5 551.09,622.5 553.23,624.5 555.4,626.5 557.58,628.5 559.8,630.5 562.04,632.5 564.3,634.5 566.6,636.5 568.92,638.5 571.26,640.5 573.63,642.5 576.03,644.5 578.45,646.5 580.9,648.5 583.37,650.5 585.87,652.5 588.39,654.5 590.93,656.5 593.49,658.5 596.08,660.5 598.69,662.5 601.33,664.5 603.98,666.5 606.66,668.5 609.38,670.5 612.12,672.5 614.89,674.5 617.69,676.5 620.52,678.5 623.37,680.5 626.24,682.5 629.14,684.5 632.06,686.5 635,688.5 637.95,690.5 640.93,692.5 643.92,694.5 646.92,696.5 649.93,698.5 652.95,700.5 656,702.5 659.06,704.5 662.15,706.5 665.27,708.5 668.42,710.5 671.61,712.5 674.85,714.5 678.13,716.5 681.47,718.5 684.87,720.5 688.32,722.5 691.82,724.5 695.37,726.5 698.97,728.5 702.61,730.5 706.3,732.5 710.04,734.5 713.81,736.5 717.64,738.5 721.5,740.5 725.42,742.5 729.41,744.5 733.47,746.5 737.59,748.5" fill="none" stroke="#800000" stroke-width="1" />
<polyline points="478.3,50.5 477.69,52.5 477.09,54.5 476.49,56.5 475.89,58.5 475.3,60.5 474.71,62.5 474.13,64.5 473.55,66.5 472.97,68.5 472.4,70.5 471.83,72.5 471.27,74.5 470.71,76.5 470.16,78.5 469.6,80.5 469.06,82.5 468.51,84.5 467.98,86.5 467.44,88.5 466.91,90.5 466.39,92.5 465.86,94.5 465.35,96.5 464.83,98.5 464.33,100.5 463.82,102.5 463.32,104.5 462.83,106.5 462.34,108.5 461.85,110.5 461.37,112.5 460.89,114.5 460.42,116.5 459.95,118.5 459.49,120.5 459.03,122.5 458.57,124.5 458.12,126.5 457.68,128.5 457.24,130.5 456.8,132.5 456.37,134.5 455.95,136.5 455.52,138.5 455.11,140.5 454.7,142.5 454.29,144.5 453.89,146.5 453.49,148.5 453.1,150.5 452.71,152.5 452.33,154.5 451.95,156.5 451.58,158.5 451.21,160.5 450.85,162.5 450.49,164.5 450.14,166.5 449.8,168.5 449.45,170.5 449.12,172.5 448.79,174.5 448.46,176.5 448.14,178.5 447.83,180.5 447.52,182.5 447.21,184.5 446.91,186.5 446.62,188.5 446.33,190.5 446.05,192.5 445.77,194.5 445.5,196.5 445.24,198.5 444.98,200.5 444.72,202.5 444.47,204.5 444.23,206.5 443.99,208.5 443.76,210.5 443.54,212.5 443.32,214.5 443.1,216.5 442.89,218.5 442.69,220.5 442.49,222.5 442.3,224.5 442.12,226.5 441.94,228.5 441.77,230.5 441.6,232.5 441.44,234.5 441.29,236.5 441.14,238.5 441,240.5 440.86,242.5 440.74,244.5 440.61,246.5 440.5,248.5 440.39,250.5 440.28,252.5 440.19,254.5 440.1,256.5 440.01,258.5 439.94,260.5 439.87,262.5 439.8,264.5 439.74,266.5 439.69,268.5 439.65,270.5 439.61,272.5 439.58,274.5 439.56,276.5 439.55,278.5 439.54,280.5 439.53,282.5 439.54,284.5 439.55,286.5 439.57,288.5 439.6,290.5 439.63,292.5 439.67,294.5 439.72,296.5 439.78,298.5 439.84,300.5 439.91,302.5 439.99,304.5 440.07,306.5 440.17,308.5 440.27,310.5 440.38,312.5 440.49,314.5 440.62,316.5 440.75,318.5 440.89,320.5 441.04,322.5 441.19,324.5 441.36,326.5 441.54,328.5 441.73,330.5 441.93,332.5 442.14,334.5 442.37,336.5 442.6,338.5 442.84,340.5 443.1,342.5 443.37,344.5 443.64,346.5 443.93,348.5 444.23,350.5 444.54,352.5 444.86,354.5 445.19,356.5 445.54,358.5 445.89,360.5 446.26,362.5 446.63,364.5 447.02,366.5 447.42,368.5 447.83,370.5 448.25,372.5 448.68,374.5 449.13,376.5 449.58,378.5 450.05,380.5 450.52,382.5 451.01,384.5 451.51,386.5 452.02,388.5 452.54,390.5 453.07,392.5 453.62,394.5 454.17,396.5 454.74,398.5 455.31,400.5 455.9,402.5 456.5,404.5 457.11,406.5 457.73,408.5 458.36,410.5 459,412.5 459.65,414.5 460.31,416.5 460.99,418.5 461.67,420.5 462.36,422.5 463.07,424.5 463.78,426.5 464.51,428.5 465.24,430.5 465.99,432.5 466.75,434.5 467.51,436.5 468.29,438.5 469.07,440.5 469.87,442.5 470.67,444.5 471.48,446.5 472.31,448.5 473.14,450.5 473.99,452.5 474.85,454.5 475.73,456.5 476.62,458.5 477.53,460.5 478.45,462.5 479.39,464.5 480.34,466.5 481.31,468.5 482.29,470.5 483.29,472.5 484.3,474.5 485.33,476.5 486.37,478.5 487.43,480.5 488.5,482.5 489.59,484.5 490.69,486.5 491.81,488.5 492.94,490.5 494.09,492.5 495.25,494.5 496.43,496.5 497.62,498.5 498.82,500.5 500.04,502.5 501.27,504.5 502.52,506.5 503.78,508.5 505.06,510.5 506.35,512.5 507.65,514.5 508.97,516.5 510.3,518.5 511.64,520.5 513,522.5 514.37,524.5 515.75,526.5 517.15,528.5 518.56,530.5 519.99,532.5 521.43,534.5 522.9,536.5 524.38,538.5 525.89,540.5 527.41,542.5 528.95,544.5 530.5,546.5 532.08,548.5 533.67,550.5 535.28,552.5 536.91,554.5 538.56,556.5 540.22,558.5 541.91,560.5 543.6,562.5 545.32,564.5 547.05,566.5 548.8,568.5 550.57,570.5 552.35,572.5 554.15,574.5 555.96,576.5 557.79,578.5 559.63,580.5 561.49,582.5 563.37,584.5 565.25,586.5 567.16,588.5 569.08,590.5 571.02,592.5 572.97,594.5 574.95,596.5 576.94,598.5 578.95,600.5 580.99,602.5 583.04,604.5 585.11,606.5 587.2,608.5 589.31,610.5 591.44,612.5 593.59,614.5 595.77,616.5 597.97,618.5 600.19,620.5 602.43,622.5 604.7,624.5 606.99,626.5 609.3,628.5 611.64,630.5 614.01,632.5 616.4,634.5 618.83,636.5 621.28,638.5 623.75,640.5 626.25,642.5 628.78,644.5 631.34,646.5 633.92,648.5 636.52,650.5 639.15,652.5 641.81,654.5 644.49,656.5 647.19,658.5 649.92,660.5 652.67,662.5 655.44,664.5 658.23,666.5 661.06,668.5 663.91,670.5 666.8,672.5 669.71,674.5 672.66,676.5 675.63,678.5 678.62,680.5 681.64,682.5 684.69,684.5 687.75,686.5 690.84,688.5 693.94,690.5 697.07,692.5 700.21,694.5 703.36,696.5 706.52,698.5 709.7,700.5 712.89,702.5 716.1,704.5 719.35,706.5 722.62,708.5 725.93,710.5 729.28,712.5 732.67,714.5 736.11,716.5 739.61,718.5 743.17,720.5 746.79,722.5 750.45,724.5 754.17,726.5 757.93,728.5 761.74,730.5 765.6,732.5 769.51,734.5 773.46,736.5 777.46,738.5 781.5,740.5 785.6,742.5 789.77,744.5 794.01,746.5 798.31,748.5" fill="none" stroke="#800000" stroke-width="1" />
<polyline points="509.36,50.5 508.79,52.5 508.23,54.5 507.67,56.5 507.11,58.5 506.56,60.5 506.01,62.5 505.47,64.5 504.93,66.5 504.4,68.5 503.87,70.5 503.34,72.5 502.82,74.5 502.3,76.5 501.79,78.5 501.28,80.5 500.78,82.5 500.28,84.5 499.78,86.5 499.29,88.5 498.8,90.5 498.32,92.5 497.84,94.5 497.37,96.5 496.9,98.5 496.43,100.5 495.97,102.5 495.52,104.5 495.06,106.5 494.62,108.5 494.18,110.5 493.74,112.5 493.3,114.5 492.88,116.5 492.45,118.5 492.03,120.5 491.62,122.5 491.21,124.5 490.81,126.5 490.41,128.5 490.01,130.5 489.62,132.5 489.24,134.5 488.86,136.5 488.48,138.5 488.11,140.5 487.75,142.5 487.39,144.5 487.03,146.5 486.68,148.5 486.33,150.5 485.99,152.5 485.66,154.5 485.33,156.5 485.01,158.5 484.69,160.5 484.37,162.5 484.06,164.5 483.76,166.5 483.46,168.5 483.17,170.5 482.88,172.5 482.6,174.5 482.32,176.5 482.05,178.5 481.78,180.5 481.52,182.5 481.27,184.5 481.02,186.5 480.78,188.5 480.54,190.5 480.31,192.5 480.08,194.5 479.86,196.5 479.64,198.5 479.43,200.5 479.23,202.5 479.03,204.5 478.84,206.5 478.65,208.5 478.47,210.5 478.3,212.5 478.13,214.5 477.97,216.5 477.81,218.5 477.66,220.5 477.52,222.5 477.38,224.5 477.25,226.5 477.12,228.5 477.01,230.5 476.89,232.5 476.79,234.5 476.69,236.5 476.59,238.5 476.51,240.5 476.42,242.5 476.35,244.5 476.28,246.5 476.22,248.5 476.17,250.5 476.12,252.5 476.08,254.5 476.04,256.5 476.02,258.5 475.99,260.5 475.98,262.5 475.97,264.5 475.97,266.5 475.98,268.5 475.99,270.5 476.01,272.5 476.04,274.5 476.08,276.5 476.12,278.5 476.17,280.5 476.22,282.5 476.29,284.5 476.36,286.5 476.44,288.5 476.52,290.5 476.61,292.5 476.71,294.5 476.82,296.5 476.94,298.5 477.06,300.5 477.19,302.5 477.33,304.5 477.48,306.5 477.63,308.5 477.79,310.5 477.96,312.5 478.14,314.5 478.33,316.5 478.52,318.5 478.72,320.5 478.93,322.5 479.15,324.5 479.39,326.5 479.63,328.5 479.88,330.5 480.15,332.5 480.42,334.5 480.71,336.5 481.01,338.5 481.32,340.5 481.64,342.5 481.97,344.5 482.32,346.5 482.67,348.5 483.04,350.5 483.41,352.5 483.8,354.5 484.2,356.5 484.61,358.5 485.04,360.5 485.47,362.5 485.92,364.5 486.37,366.5 486.84,368.5 487.32,370.5 487.81,372.5 488.32,374.5 488.83,376.5 489.36,378.5 489.9,380.5 490.44,382.5 491,384.5 491.58,386.5 492.16,388.5 492.75,390.5 493.36,392.5 493.98,394.5 494.61,396.5 495.25,398.5 495.9,400.5 496.56,402.5 497.23,404.5 497.92,406.5 498.62,408.5 499.32,410.5 500.04,412.5 500.77,414.5 501.51,416.5 502.26,418.5 503.02,420.5 503.8,422.5 504.58,424.5 505.37,426.5 506.18,428.5 506.99,430.5 507.82,432.5 508.66,434.5 509.5,436.5 510.36,438.5 511.22,440.5 512.1,442.5 512.99,444.5 513.88,446.5 514.79,448.5 515.7,450.5 516.63,452.5 517.58,454.5 518.54,456.5 519.52,458.5 520.51,460.5 521.52,462.5 522.54,464.5 523.58,466.5 524.64,468.5 525.71,470.5 526.79,472.5 527.89,474.5 529.01,476.5 530.14,478.5 531.29,480.5 532.45,482.5 533.63,484.5 534.82,486.5 536.03,488.5 537.25,490.5 538.49,492.5 539.74,494.5 541.01,496.5 542.29,498.5 543.59,500.5 544.9,502.5 546.23,504.5 547.57,506.5 548.93,508.5 550.3,510.5 551.68,512.5 553.08,514.5 554.5,516.5 555.93,518.5 557.37,520.5 558.82,522.5 560.29,524.5 561.77,526.5 563.27,528.5 564.78,530.5 566.31,532.5 567.85,534.5 569.42,536.5 571,538.5 572.61,540.5 574.23,542.5 575.87,544.5 577.54,546.5 579.21,548.5 580.91,550.5 582.63,552.5 584.36,554.5 586.12,556.5 587.89,558.5 589.68,560.5 591.48,562.5 593.31,564.5 595.15,566.5 597.01,568.5 598.88,570.5 600.77,572.5 602.68,574.5 604.61,576.5 606.55,578.5 608.5,580.5 610.48,582.5 612.46,584.5 614.46,586.5 616.48,588.5 618.52,590.5 620.57,592.5 622.64,594.5 624.73,596.5 626.84,598.5 628.97,600.5 631.12,602.5 633.29,604.5 635.48,606.5 637.69,608.5 639.92,610.5 642.17,612.5 644.45,614.5 646.74,616.5 649.06,618.5 651.41,620.5 653.77,622.5 656.16,624.5 658.58,626.5 661.02,628.5 663.49,630.5 665.98,632.5 668.5,634.5 671.05,636.5 673.63,638.5 676.24,640.5 678.87,642.5 681.53,644.5 684.22,646.5 686.94,648.5 689.68,650.5 692.44,652.5 695.23,654.5 698.05,656.5 700.89,658.5 703.75,660.5 706.64,662.5 709.55,664.5 712.48,666.5 715.45,668.5 718.45,670.5 721.47,672.5 724.53,674.5 727.62,676.5 730.73,678.5 733.88,680.5 737.04,682.5 740.23,684.5 743.45,686.5 746.68,688.5 749.94,690.5 753.21,692.5 756.5,694.5 759.8,696.5 763.11,698.5 766.44,700.5 769.78,702.5 773.15,704.5 776.54,706.5 779.97,708.5 783.43,710.5 786.94,712.5 790.49,714.5 794.09,716.5 797.75,718.5 801.47,720.5 805.25,722.5 809.08,724.5 812.96,726.5 816.89,728.5 820.88,730.5 824.91,732.5 828.99,734.5 833.11,736.5 837.28,738.5 841.5,740.5 845.78,742.5 850.13,744.5 854.55,746.5 859.03,748.5" fill="none" stroke="#800000" stroke-width="1" />
<polyline points="540.41,50.5 539.89,52.5 539.36,54.5 538.85,56.5 538.33,58.5 537.82,60.5 537.32,62.5 536.81,64.5 536.32,66.5 535.82,68.5 535.34,70.5 534.85,72.5 534.37,74.5 533.9,76.5 533.43,78.5 532.96,80.5 532.5,82.5 532.04,84.5 531.58,86.5 531.14,88.5 530.69,90.5 530.25,92.5 529.82,94.5 529.39,96.5 528.96,98.5 528.54,100.5 528.12,102.5 527.71,104.5 527.3,106.5 526.9,108.5 526.5,110.5 526.11,112.5 525.72,114.5 525.34,116.5 524.96,118.5 524.58,120.5 524.21,122.5 523.85,124.5 523.49,126.5 523.14,128.5 522.79,130.5 522.44,132.5 522.1,134.5 521.77,136.5 521.44,138.5 521.11,140.5 520.8,142.5 520.48,144.5 520.17,146.5 519.87,148.5 519.57,150.5 519.28,152.5 518.99,154.5 518.71,156.5 518.43,158.5 518.16,160.5 517.89,162.5 517.63,164.5 517.38,166.5 517.13,168.5 516.88,170.5 516.64,172.5 516.41,174.5 516.18,176.5 515.96,178.5 515.74,180.5 515.53,182.5 515.32,184.5 515.12,186.5 514.93,188.5 514.74,190.5 514.56,192.5 514.38,194.5 514.21,196.5 514.05,198.5 513.89,200.5 513.74,202.5 513.59,204.5 513.45,206.5 513.32,208.5 513.19,210.5 513.06,212.5 512.95,214.5 512.84,216.5 512.73,218.5 512.64,220.5 512.54,222.5 512.46,224.5 512.38,226.5 512.31,228.5 512.24,230.5 512.18,232.5 512.13,234.5 512.08,236.5 512.05,238.5 512.01,240.5 511.99,242.5 511.97,244.5 511.95,246.5 511.95,248.5 511.95,250.5 511.95,252.5 511.97,254.5 511.99,256.5 512.02,258.5 512.05,260.5 512.09,262.5 512.14,264.5 512.2,266.5 512.26,268.5 512.33,270.5 512.41,272.5 512.5,274.5 512.59,276.5 512.69,278.5 512.8,280.5 512.91,282.5 513.03,284.5 513.16,286.5 513.3,288.5 513.44,290.5 513.6,292.5 513.76,294.5 513.92,296.5 514.1,298.5 514.28,300.5 514.47,302.5 514.67,304.5 514.88,306.5 515.1,308.5 515.32,310.5 515.55,312.5 515.79,314.5 516.04,316.5 516.29,318.5 516.56,320.5 516.83,322.5 517.11,324.5 517.41,326.5 517.72,328.5 518.03,330.5 518.36,332.5 518.7,334.5 519.05,336.5 519.42,338.5 519.79,340.5 520.18,342.5 520.58,344.5 520.99,346.5 521.41,348.5 521.84,350.5 522.29,352.5 522.74,354.5 523.21,356.5 523.69,358.5 524.18,360.5 524.69,362.5 525.2,364.5 525.73,366.5 526.27,368.5 526.82,370.5 527.38,372.5 527.95,374.5 528.54,376.5 529.14,378.5 529.75,380.5 530.37,382.5 531,384.5 531.64,386.5 532.3,388.5 532.97,390.5 533.65,392.5 534.34,394.5 535.04,396.5 535.76,398.5 536.48,400.5 537.22,402.5 537.97,404.5 538.73,406.5 539.51,408.5 540.29,410.5 541.08,412.5 541.89,414.5 542.71,416.5 543.54,418.5 544.38,420.5 545.23,422.5 546.09,424.5 546.97,426.5 547.85,428.5 548.74,430.5 549.65,432.5 550.57,434.5 551.49,436.5 552.43,438.5 553.38,440.5 554.33,442.5 555.3,444.5 556.28,446.5 557.27,448.5 558.27,450.5 559.28,452.5 560.31,454.5 561.36,456.5 562.42,458.5 563.49,460.5 564.59,462.5 565.7,464.5 566.82,466.5 567.96,468.5 569.12,470.5 570.29,472.5 571.48,474.5 572.68,476.5 573.9,478.5 575.14,480.5 576.39,482.5 577.66,484.5 578.94,486.5 580.24,488.5 581.55,490.5 582.88,492.5 584.23,494.5 585.59,496.5 586.97,498.5 588.36,500.5 589.76,502.5 591.19,504.5 592.62,506.5 594.07,508.5 595.54,510.5 597.02,512.5 598.52,514.5 600.03,516.5 601.55,518.5 603.09,520.5 604.64,522.5 606.21,524.5 607.79,526.5 609.39,528.5 610.99,530.5 612.62,532.5 614.27,534.5 615.94,536.5 617.62,538.5 619.33,540.5 621.06,542.5 622.8,544.5 624.57,546.5 626.35,548.5 628.15,550.5 629.98,552.5 631.82,554.5 633.68,556.5 635.55,558.5 637.45,560.5 639.36,562.5 641.3,564.5 643.25,566.5 645.21,568.5 647.2,570.5 649.2,572.5 651.22,574.5 653.26,576.5 655.31,578.5 657.38,580.5 659.46,582.5 661.56,584.5 663.67,586.5 665.81,588.5 667.96,590.5 670.12,592.5 672.31,594.5 674.52,596.5 676.74,598.5 678.99,600.5 681.26,602.5 683.54,604.5 685.85,606.5 688.18,608.5 690.53,610.5 692.9,612.5 695.3,614.5 697.72,616.5 700.16,618.5 702.63,620.5 705.12,622.5 707.63,624.5 710.17,626.5 712.74,628.5 715.33,630.5 717.95,632.5 720.6,634.5 723.28,636.5 725.99,638.5 728.73,640.5 731.49,642.5 734.29,644.5 737.11,646.5 739.95,648.5 742.83,650.5 745.73,652.5 748.65,654.5 751.61,656.5 754.58,658.5 757.59,660.5 760.61,662.5 763.66,664.5 766.73,666.5 769.84,668.5 772.98,670.5 776.15,672.5 779.35,674.5 782.58,676.5 785.84,678.5 789.13,680.5 792.44,682.5 795.78,684.5 799.14,686.5 802.52,688.5 805.93,690.5 809.35,692.5 812.79,694.5 816.24,696.5 819.7,698.5 823.18,700.5 826.68,702.5 830.2,704.5 833.74,706.5 837.32,708.5 840.94,710.5 844.6,712.5 848.31,714.5 852.07,716.5 855.89,718.5 859.77,720.5 863.71,722.5 867.71,724.5 871.76,726.5 875.86,728.5 880.01,730.5 884.21,732.5 888.46,734.5 892.76,736.5 897.11,738.5 901.5,740.5 905.95,742.5 910.49,744.5 915.09,746.5 919.76,748.5" fill="none" stroke="#800000" stroke-width="1" />
<polyline points="571.47,50.5 570.98,52.5 570.5,54.5 570.02,56.5 569.55,58.5 569.08,60.5 568.62,62.5 568.16,64.5 567.7,66.5 567.25,68.5 566.8,70.5 566.36,72.5 565.92,74.5 565.49,76.5 565.06,78.5 564.64,80.5 564.22,82.5 563.8,84.5 563.39,86.5 562.98,88.5 562.58,90.5 562.18,92.5 561.79,94.5 561.41,96.5 561.02,98.5 560.64,100.5 560.27,102.5 559.9,104.5 559.54,106.5 559.18,108.5 558.83,110.5 558.48,112.5 558.13,114.5 557.79,116.5 557.46,118.5 557.13,120.5 556.81,122.5 556.49,124.5 556.17,126.5 555.86,128.5 555.56,130.5 555.26,132.5 554.97,134.5 554.68,136.5 554.4,138.5 554.12,140.5 553.84,142.5 553.58,144.5 553.32,146.5 553.06,148.5 552.81,150.5 552.56,152.5 552.32,154.5 552.08,156.5 551.86,158.5 551.63,160.5 551.41,162.5 551.2,164.5 550.99,166.5 550.79,168.5 550.59,170.5 550.4,172.5 550.22,174.5 550.04,176.5 549.87,178.5 549.7,180.5 549.54,182.5 549.38,184.5 549.23,186.5 549.09,188.5 548.95,190.5 548.82,192.5 548.69,194.5 548.57,196.5 548.45,198.5 548.35,200.5 548.24,202.5 548.15,204.5 548.06,206.5 547.98,208.5 547.9,210.5 547.83,212.5 547.76,214.5 547.71,216.5 547.65,218.5 547.61,220.5 547.57,222.5 547.54,224.5 547.51,226.5 547.49,228.5 547.48,230.5 547.47,232.5 547.48,234.5 547.48,236.5 547.5,238.5 547.52,240.5 547.55,242.5 547.58,244.5 547.62,246.5 547.67,248.5 547.73,250.5 547.79,252.5 547.86,254.5 547.94,256.5 548.02,258.5 548.11,260.5 548.21,262.5 548.31,264.5 548.43,266.5 548.55,268.5 548.68,270.5 548.81,272.5 548.95,274.5 549.1,276.5 549.26,278.5 549.43,280.5 549.6,282.5 549.78,284.5 549.97,286.5 550.16,288.5 550.37,290.5 550.58,292.5 550.8,294.5 551.02,296.5 551.26,298.5 551.5,300.5 551.76,302.5 552.01,304.5 552.28,306.5 552.56,308.5 552.84,310.5 553.14,312.5 553.44,314.5 553.75,316.5 554.06,318.5 554.39,320.5 554.73,322.5 555.07,324.5 555.43,326.5 555.8,328.5 556.18,330.5 556.58,332.5 556.98,334.5 557.4,336.5 557.83,338.5 558.27,340.5 558.72,342.5 559.18,344.5 559.66,346.5 560.15,348.5 560.65,350.5 561.16,352.5 561.68,354.5 562.22,356.5 562.77,358.5 563.33,360.5 563.9,362.5 564.48,364.5 565.08,366.5 565.69,368.5 566.31,370.5 566.94,372.5 567.59,374.5 568.24,376.5 568.91,378.5 569.59,380.5 570.29,382.5 570.99,384.5 571.71,386.5 572.44,388.5 573.18,390.5 573.94,392.5 574.7,394.5 575.48,396.5 576.27,398.5 577.07,400.5 577.88,402.5 578.71,404.5 579.55,406.5 580.4,408.5 581.26,410.5 582.13,412.5 583.01,414.5 583.91,416.5 584.81,418.5 585.73,420.5 586.66,422.5 587.6,424.5 588.56,426.5 589.52,428.5 590.49,430.5 591.48,432.5 592.48,434.5 593.48,436.5 594.5,438.5 595.53,440.5 596.57,442.5 597.62,444.5 598.68,446.5 599.75,448.5 600.83,450.5 601.93,452.5 603.04,454.5 604.17,456.5 605.31,458.5 606.48,460.5 607.65,462.5 608.85,464.5 610.06,466.5 611.29,468.5 612.53,470.5 613.79,472.5 615.07,474.5 616.36,476.5 617.67,478.5 618.99,480.5 620.33,482.5 621.69,484.5 623.06,486.5 624.45,488.5 625.86,490.5 627.28,492.5 628.72,494.5 630.17,496.5 631.64,498.5 633.13,500.5 634.63,502.5 636.14,504.5 637.67,506.5 639.22,508.5 640.78,510.5 642.36,512.5 643.95,514.5 645.56,516.5 647.18,518.5 648.82,520.5 650.47,522.5 652.13,524.5 653.81,526.5 655.5,528.5 657.21,530.5 658.94,532.5 660.69,534.5 662.46,536.5 664.24,538.5 666.05,540.5 667.88,542.5 669.73,544.5 671.6,546.5 673.49,548.5 675.4,550.5 677.32,552.5 679.27,554.5 681.23,556.5 683.22,558.5 685.22,560.5 687.24,562.5 689.28,564.5 691.34,566.5 693.42,568.5 695.52,570.5 697.63,572.5 699.76,574.5 701.9,576.5 704.07,578.5 706.25,580.5 708.44,582.5 710.66,584.5 712.89,586.5 715.13,588.5 717.39,590.5 719.68,592.5 721.98,594.5 724.3,596.5 726.64,598.5 729.01,600.5 731.39,602.5 733.8,604.5 736.22,606.5 738.67,608.5 741.14,610.5 743.63,612.5 746.15,614.5 748.69,616.5 751.26,618.5 753.84,620.5 756.46,622.5 759.1,624.5 761.76,626.5 764.46,628.5 767.18,630.5 769.93,632.5 772.7,634.5 775.51,636.5 778.35,638.5 781.22,640.5 784.11,642.5 787.04,644.5 789.99,646.5 792.97,648.5 795.98,650.5 799.02,652.5 802.08,654.5 805.17,656.5 808.28,658.5 811.42,660.5 814.58,662.5 817.77,664.5 820.98,666.5 824.23,668.5 827.51,670.5 830.83,672.5 834.17,674.5 837.55,676.5 840.95,678.5 844.38,680.5 847.84,682.5 851.33,684.5 854.84,686.5 858.37,688.5 861.92,690.5 865.49,692.5 869.08,694.5 872.68,696.5 876.29,698.5 879.92,700.5 883.57,702.5 887.24,704.5 890.94,706.5 894.67,708.5 898.45,710.5 902.26,712.5 906.13,714.5 910.05,716.5 914.03,718.5 918.07,720.5 922.18,722.5 926.34,724.5 930.55,726.5 934.82,728.5 939.14,730.5 943.51,732.5 947.94,734.5 952.41,736.5 956.93,738.5 961.5,740.5 966.13,742.5 970.84,744.5 975.63,746.5 980.48,748.5" fill="none" stroke="#800000" stroke-width="1" />
<polyline points="-2.98,292.5 -3.65,294.5 -4.32,296.5 -4.99,298.5 -5.64,300.5 -6.3,302.5 -6.95,304.5 -7.59,306.5 -8.23,308.5 -8.87,310.5 -9.5,312.5 -10.12,314.5 -10.74,316.5 -11.36,318.5 -11.97,320.5 -12.57,322.5 -13.17,324.5 -13.76,326.5 -14.34,328.5 -14.92,330.5 -15.49,332.5 -16.05,334.5 -16.61,336.5 -17.16,338.5 -17.7,340.5 -18.23,342.5 -18.76,344.5 -19.28,346.5 -19.79,348.5 -20.3,350.5 -20.8,352.5 -21.29,354.5 -21.78,356.5 -22.25,358.5 -22.72,360.5 -23.19,362.5 -23.64,364.5 -24.09,366.5 -24.53,368.5 -24.96,370.5 -25.39,372.5 -25.81,374.5 -26.22,376.5 -26.63,378.5 -27.03,380.5 -27.42,382.5 -27.8,384.5 -28.18,386.5 -28.55,388.5 -28.91,390.5 -29.26,392.5 -29.61,394.5 -29.95,396.5 -30.28,398.5 -30.61,400.5 -30.93,402.5 -31.24,404.5 -31.54,406.5 -31.84,408.5 -32.13,410.5 -32.42,412.5 -32.69,414.5 -32.96,416.5 -33.23,418.5 -33.48,420.5 -33.73,422.5 -33.98,424.5 -34.21,426.5 -34.44,428.5 -34.66,430.5 -34.88,432.5 -35.09,434.5 -35.29,436.5 -35.49,438.5 -35.68,440.5 -35.86,442.5 -36.04,444.5 -36.21,446.5 -36.38,448.5 -36.54,450.5 -36.69,452.5 -36.83,454.5 -36.96,456.5 -37.08,458.5 -37.19,460.5 -37.29,462.5 -37.38,464.5 -37.46,466.5 -37.54,468.5 -37.6,470.5 -37.65,472.5 -37.69,474.5 -37.73,476.5 -37.75,478.5 -37.76,480.5 -37.77,482.5 -37.76,484.5 -37.75,486.5 -37.72,488.5 -37.69,490.5 -37.64,492.5 -37.59,494.5 -37.53,496.5 -37.45,498.5 -37.37,500.5 -37.28,502.5 -37.18,504.5 -37.07,506.5 -36.95,508.5 -36.82,510.5 -36.69,512.5 -36.54,514.5 -36.39,516.5 -36.22,518.5 -36.05,520.5 -35.87,522.5 -35.68,524.5 -35.48,526.5 -35.28,528.5 -35.06,530.5 -34.84,532.5 -34.6,534.5 -34.35,536.5 -34.08,538.5 -33.81,540.5 -33.52,542.5 -33.22,544.5 -32.91,546.5 -32.59,548.5 -32.25,550.5 -31.91,552.5 -31.55,554.5 -31.18,556.5 -30.8,558.5 -30.41,560.5 -30.01,562.5 -29.6,564.5 -29.17,566.5 -28.74,568.5 -28.29,570.5 -27.83,572.5 -27.37,574.5 -26.89,576.5 -26.4,578.5 -25.91,580.5 -25.4,582.5 -24.89,584.5 -24.36,586.5 -23.82,588.5 -23.28,590.5 -22.72,592.5 -22.15,594.5 -21.57,596.5 -20.98,598.5 -20.37,600.5 -19.75,602.5 -19.12,604.5 -18.48,606.5 -17.82,608.5 -17.15,610.5 -16.47,612.5 -15.77,614.5 -15.06,616.5 -14.34,618.5 -13.6,620.5 -12.84,622.5 -12.07,624.5 -11.29,626.5 -10.48,628.5 -9.67,630.5 -8.83,632.5 -7.98,634.5 -7.11,636.5 -6.22,638.5 -5.31,640.5 -4.39,642.5 -3.45,644.5 -2.5,646.5 -1.52,648.5 -0.53,650.5 0.47,652.5 1.49,654.5 2.53,656.5 3.58,658.5 4.65,660.5 5.73,662.5 6.82,664.5 7.93,666.5 9.06,668.5 10.21,670.5 11.38,672.5 12.57,674.5 13.77,676.5 15,678.5 16.23,680.5 17.49,682.5 18.76,684.5 20.04,686.5 21.34,688.5 22.64,690.5 23.96,692.5 25.29,694.5 26.63,696.5 27.97,698.5 29.32,700.5 30.68,702.5 32.06,704.5 33.45,706.5 34.86,708.5 36.3,710.5 37.75,712.5 39.24,714.5 40.76,716.5 42.31,718.5 43.9,720.5 45.53,722.5 47.18,724.5 48.87,726.5 50.59,728.5 52.34,730.5 54.12,732.5 55.92,734.5 57.76,736.5 59.62,738.5 61.5,740.5 63.42,742.5 65.39,744.5 67.39,746.5 69.43,748.5" fill="none" stroke="#000080" stroke-width="1" />
<polyline points="54.57,234.5 53.82,236.5 53.08,238.5 52.35,240.5 51.61,242.5 50.88,244.5 50.16,246.5 49.44,248.5 48.73,250.5 48.01,252.5 47.31,254.5 46.61,256.5 45.91,258.5 45.21,260.5 44.53,262.5 43.84,264.5 43.16,266.5 42.49,268.5 41.82,270.5 41.15,272.5 40.49,274.5 39.83,276.5 39.18,278.5 38.54,280.5 37.89,282.5 37.26,284.5 36.62,286.5 36,288.5 35.37,290.5 34.75,292.5 34.14,294.5 33.53,296.5 32.93,298.5 32.33,300.5 31.74,302.5 31.15,304.5 30.57,306.5 29.99,308.5 29.42,310.5 28.85,312.5 28.29,314.5 27.73,316.5 27.18,318.5 26.64,320.5 26.09,322.5 25.56,324.5 25.03,326.5 24.52,328.5 24,330.5 23.5,332.5 23,334.5 22.51,336.5 22.03,338.5 21.56,340.5 21.09,342.5 20.63,344.5 20.17,346.5 19.73,348.5 19.29,350.5 18.86,352.5 18.44,354.5 18.02,356.5 17.61,358.5 17.21,360.5 16.82,362.5 16.44,364.5 16.06,366.5 15.69,368.5 15.33,370.5 14.97,372.5 14.62,374.5 14.28,376.5 13.95,378.5 13.63,380.5 13.31,382.5 13,384.5 12.7,386.5 12.4,388.5 12.12,390.5 11.84,392.5 11.57,394.5 11.3,396.5 11.04,398.5 10.79,400.5 10.55,402.5 10.32,404.5 10.09,406.5 9.87,408.5 9.66,410.5 9.45,412.5 9.25,414.5 9.06,416.5 8.88,418.5 8.7,420.5 8.53,422.5 8.37,424.5 8.21,426.5 8.07,428.5 7.92,430.5 7.79,432.5 7.66,434.5 7.54,436.5 7.43,438.5 7.32,440.5 7.22,442.5 7.12,444.5 7.03,446.5 6.95,448.5 6.88,450.5 6.81,452.5 6.76,454.5 6.71,456.5 6.68,458.5 6.65,460.5 6.64,462.5 6.63,464.5 6.64,466.5 6.65,468.5 6.68,470.5 6.72,472.5 6.76,474.5 6.82,476.5 6.89,478.5 6.97,480.5 7.05,482.5 7.15,484.5 7.26,486.5 7.37,488.5 7.5,490.5 7.64,492.5 7.79,494.5 7.94,496.5 8.11,498.5 8.29,500.5 8.47,502.5 8.67,504.5 8.88,506.5 9.09,508.5 9.32,510.5 9.55,512.5 9.79,514.5 10.05,516.5 10.31,518.5 10.58,520.5 10.86,522.5 11.15,524.5 11.45,526.5 11.76,528.5 12.07,530.5 12.4,532.5 12.74,534.5 13.09,536.5 13.46,538.5 13.84,540.5 14.23,542.5 14.63,544.5 15.05,546.5 15.48,548.5 15.92,550.5 16.37,552.5 16.84,554.5 17.31,556.5 17.8,558.5 18.3,560.5 18.81,562.5 19.34,564.5 19.87,566.5 20.42,568.5 20.97,570.5 21.54,572.5 22.12,574.5 22.71,576.5 23.31,578.5 23.92,580.5 24.54,582.5 25.17,584.5 25.81,586.5 26.46,588.5 27.12,590.5 27.8,592.5 28.48,594.5 29.18,596.5 29.89,598.5 30.62,600.5 31.35,602.5 32.1,604.5 32.86,606.5 33.64,608.5 34.43,610.5 35.23,612.5 36.05,614.5 36.89,616.5 37.73,618.5 38.6,620.5 39.48,622.5 40.37,624.5 41.28,626.5 42.21,628.5 43.15,630.5 44.11,632.5 45.09,634.5 46.09,636.5 47.11,638.5 48.14,640.5 49.2,642.5 50.27,644.5 51.35,646.5 52.46,648.5 53.58,650.5 54.72,652.5 55.87,654.5 57.04,656.5 58.22,658.5 59.42,660.5 60.64,662.5 61.87,664.5 63.11,666.5 64.38,668.5 65.66,670.5 66.97,672.5 68.29,674.5 69.63,676.5 70.99,678.5 72.36,680.5 73.75,682.5 75.16,684.5 76.58,686.5 78.01,688.5 79.46,690.5 80.91,692.5 82.37,694.5 83.84,696.5 85.32,698.5 86.8,700.5 88.3,702.5 89.8,704.5 91.33,706.5 92.87,708.5 94.43,710.5 96.02,712.5 97.64,714.5 99.28,716.5 100.97,718.5 102.69,720.5 104.44,722.5 106.22,724.5 108.03,726.5 109.88,728.5 111.75,730.5 113.65,732.5 115.57,734.5 117.53,736.5 119.5,738.5 121.5,740.5 123.53,742.5 125.61,744.5 127.72,746.5 129.87,748.5" fill="none" stroke="#000080" stroke-width="1" />
<polyline points="113.52,176.5 112.71,178.5 111.91,180.5 111.11,182.5 110.31,184.5 109.52,186.5 108.73,188.5 107.95,190.5 107.17,192.5 106.39,194.5 105.62,196.5 104.85,198.5 104.09,200.5 103.33,202.5 102.57,204.5 101.82,206.5 101.07,208.5 100.33,210.5 99.59,212.5 98.85,214.5 98.12,216.5 97.39,218.5 96.67,220.5 95.95,222.5 95.23,224.5 94.52,226.5 93.82,228.5 93.11,230.5 92.42,232.5 91.72,234.5 91.03,236.5 90.35,238.5 89.67,240.5 88.99,242.5 88.32,244.5 87.66,246.5 86.99,248.5 86.34,250.5 85.68,252.5 85.04,254.5 84.39,256.5 83.75,258.5 83.12,260.5 82.49,262.5 81.86,264.5 81.24,266.5 80.63,268.5 80.02,270.5 79.41,272.5 78.81,274.5 78.21,276.5 77.62,278.5 77.04,280.5 76.46,282.5 75.88,284.5 75.31,286.5 74.74,288.5 74.18,290.5 73.63,292.5 73.08,294.5 72.53,296.5 71.99,298.5 71.46,300.5 70.93,302.5 70.4,304.5 69.88,306.5 69.37,308.5 68.86,310.5 68.36,312.5 67.86,314.5 67.37,316.5 66.88,318.5 66.4,320.5 65.93,322.5 65.46,324.5 65,326.5 64.55,328.5 64.1,330.5 63.67,332.5 63.24,334.5 62.81,336.5 62.4,338.5 61.99,340.5 61.59,342.5 61.2,344.5 60.82,346.5 60.44,348.5 60.08,350.5 59.72,352.5 59.37,354.5 59.02,356.5 58.68,358.5 58.36,360.5 58.04,362.5 57.72,364.5 57.42,366.5 57.12,368.5 56.83,370.5 56.55,372.5 56.28,374.5 56.01,376.5 55.76,378.5 55.51,380.5 55.27,382.5 55.03,384.5 54.81,386.5 54.59,388.5 54.38,390.5 54.18,392.5 53.98,394.5 53.8,396.5 53.62,398.5 53.45,400.5 53.28,402.5 53.13,404.5 52.98,406.5 52.84,408.5 52.71,410.5 52.58,412.5 52.47,414.5 52.36,416.5 52.26,418.5 52.16,420.5 52.07,422.5 51.99,424.5 51.92,426.5 51.86,428.5 51.8,430.5 51.75,432.5 51.7,434.5 51.67,436.5 51.64,438.5 51.61,440.5 51.6,442.5 51.59,444.5 51.59,446.5 51.59,448.5 51.6,450.5 51.62,452.5 51.66,454.5 51.7,456.5 51.75,458.5 51.82,460.5 51.89,462.5 51.98,464.5 52.07,466.5 52.18,468.5 52.3,470.5 52.42,472.5 52.56,474.5 52.71,476.5 52.87,478.5 53.04,480.5 53.22,482.5 53.42,484.5 53.62,486.5 53.83,488.5 54.05,490.5 54.29,492.5 54.53,494.5 54.78,496.5 55.05,498.5 55.32,500.5 55.61,502.5 55.9,504.5 56.21,506.5 56.52,508.5 56.85,510.5 57.18,512.5 57.53,514.5 57.88,516.5 58.24,518.5 58.62,520.5 59,522.5 59.39,524.5 59.79,526.5 60.2,528.5 60.62,530.5 61.06,532.5 61.5,534.5 61.96,536.5 62.43,538.5 62.92,540.5 63.42,542.5 63.93,544.5 64.45,546.5 64.99,548.5 65.54,550.5 66.1,552.5 66.67,554.5 67.26,556.5 67.86,558.5 68.47,560.5 69.1,562.5 69.73,564.5 70.38,566.5 71.04,568.5 71.71,570.5 72.39,572.5 73.08,574.5 73.79,576.5 74.5,578.5 75.23,580.5 75.96,582.5 76.71,584.5 77.47,586.5 78.23,588.5 79.01,590.5 79.8,592.5 80.61,594.5 81.42,596.5 82.25,598.5 83.1,600.5 83.95,602.5 84.82,604.5 85.7,606.5 86.6,608.5 87.51,610.5 88.44,612.5 89.38,614.5 90.33,616.5 91.3,618.5 92.29,620.5 93.29,622.5 94.31,624.5 95.34,626.5 96.4,628.5 97.46,630.5 98.55,632.5 99.65,634.5 100.78,636.5 101.92,638.5 103.08,640.5 104.26,642.5 105.45,644.5 106.67,646.5 107.9,648.5 109.14,650.5 110.41,652.5 111.69,654.5 112.98,656.5 114.29,658.5 115.62,660.5 116.96,662.5 118.31,664.5 119.68,666.5 121.07,668.5 122.47,670.5 123.9,672.5 125.35,674.5 126.81,676.5 128.29,678.5 129.78,680.5 131.29,682.5 132.81,684.5 134.35,686.5 135.9,688.5 137.45,690.5 139.02,692.5 140.59,694.5 142.17,696.5 143.75,698.5 145.34,700.5 146.93,702.5 148.54,704.5 150.16,706.5 151.79,708.5 153.45,710.5 155.13,712.5 156.83,714.5 158.56,716.5 160.32,718.5 162.12,720.5 163.95,722.5 165.8,724.5 167.69,726.5 169.59,728.5 171.52,730.5 173.48,732.5 175.45,734.5 177.45,736.5 179.47,738.5 181.5,740.5 183.56,742.5 185.66,744.5 187.79,746.5 189.95,748.5" fill="none" stroke="#000080" stroke-width="1" />
<polyline points="177.49,112.5 176.62,114.5 175.75,116.5 174.89,118.5 174.03,120.5 173.18,122.5 172.33,124.5 171.48,126.5 170.63,128.5 169.79,130.5 168.96,132.5 168.12,134.5 167.29,136.5 166.46,138.5 165.64,140.5 164.82,142.5 164,144.5 163.19,146.5 162.38,148.5 161.58,150.5 160.77,152.5 159.98,154.5 159.18,156.5 158.39,158.5 157.6,160.5 156.82,162.5 156.04,164.5 155.27,166.5 154.49,168.5 153.73,170.5 152.96,172.5 152.2,174.5 151.45,176.5 150.69,178.5 149.94,180.5 149.2,182.5 148.46,184.5 147.72,186.5 146.99,188.5 146.26,190.5 145.54,192.5 144.82,194.5 144.1,196.5 143.39,198.5 142.68,200.5 141.98,202.5 141.28,204.5 140.59,206.5 139.9,208.5 139.21,210.5 138.53,212.5 137.85,214.5 137.18,216.5 136.51,218.5 135.84,220.5 135.18,222.5 134.53,224.5 133.87,226.5 133.23,228.5 132.58,230.5 131.95,232.5 131.31,234.5 130.68,236.5 130.06,238.5 129.44,240.5 128.83,242.5 128.22,244.5 127.61,246.5 127.01,248.5 126.41,250.5 125.82,252.5 125.24,254.5 124.65,256.5 124.08,258.5 123.51,260.5 122.94,262.5 122.38,264.5 121.82,266.5 121.27,268.5 120.72,270.5 120.18,272.5 119.64,274.5 119.11,276.5 118.59,278.5 118.06,280.5 117.55,282.5 117.04,284.5 116.53,286.5 116.03,288.5 115.54,290.5 115.05,292.5 114.56,294.5 114.08,296.5 113.61,298.5 113.14,300.5 112.68,302.5 112.22,304.5 111.77,306.5 111.33,308.5 110.89,310.5 110.45,312.5 110.03,314.5 109.6,316.5 109.19,318.5 108.78,320.5 108.37,322.5 107.97,324.5 107.58,326.5 107.2,328.5 106.83,330.5 106.46,332.5 106.11,334.5 105.76,336.5 105.41,338.5 105.08,340.5 104.76,342.5 104.44,344.5 104.13,346.5 103.83,348.5 103.54,350.5 103.25,352.5 102.98,354.5 102.71,356.5 102.45,358.5 102.2,360.5 101.95,362.5 101.72,364.5 101.49,366.5 101.27,368.5 101.06,370.5 100.86,372.5 100.67,374.5 100.48,376.5 100.3,378.5 100.13,380.5 99.97,382.5 99.82,384.5 99.68,386.5 99.54,388.5 99.41,390.5 99.29,392.5 99.18,394.5 99.08,396.5 98.98,398.5 98.9,400.5 98.82,402.5 98.75,404.5 98.68,406.5 98.63,408.5 98.58,410.5 98.54,412.5 98.51,414.5 98.49,416.5 98.47,418.5 98.47,420.5 98.47,422.5 98.47,424.5 98.49,426.5 98.51,428.5 98.54,430.5 98.58,432.5 98.63,434.5 98.68,436.5 98.74,438.5 98.81,440.5 98.89,442.5 98.97,444.5 99.06,446.5 99.15,448.5 99.26,450.5 99.37,452.5 99.5,454.5 99.63,456.5 99.78,458.5 99.94,460.5 100.11,462.5 100.29,464.5 100.48,466.5 100.68,468.5 100.9,470.5 101.12,472.5 101.36,474.5 101.61,476.5 101.87,478.5 102.14,480.5 102.42,482.5 102.71,484.5 103.01,486.5 103.32,488.5 103.65,490.5 103.98,492.5 104.33,494.5 104.69,496.5 105.05,498.5 105.43,500.5 105.82,502.5 106.22,504.5 106.63,506.5 107.05,508.5 107.48,510.5 107.92,512.5 108.37,514.5 108.83,516.5 109.3,518.5 109.79,520.5 110.28,522.5 110.78,524.5 111.29,526.5 111.81,528.5 112.33,530.5 112.88,532.5 113.43,534.5 114,536.5 114.59,538.5 115.18,540.5 115.79,542.5 116.42,544.5 117.05,546.5 117.71,548.5 118.37,550.5 119.05,552.5 119.73,554.5 120.44,556.5 121.15,558.5 121.88,560.5 122.62,562.5 123.37,564.5 124.14,566.5 124.91,568.5 125.7,570.5 126.5,572.5 127.31,574.5 128.13,576.5 128.97,578.5 129.81,580.5 130.66,582.5 131.53,584.5 132.41,586.5 133.29,588.5 134.19,590.5 135.1,592.5 136.02,594.5 136.96,596.5 137.91,598.5 138.87,600.5 139.84,602.5 140.83,604.5 141.83,606.5 142.85,608.5 143.88,610.5 144.92,612.5 145.98,614.5 147.06,616.5 148.15,618.5 149.25,620.5 150.37,622.5 151.5,624.5 152.66,626.5 153.82,628.5 155.01,630.5 156.21,632.5 157.43,634.5 158.67,636.5 159.92,638.5 161.2,640.5 162.49,642.5 163.8,644.5 165.12,646.5 166.46,648.5 167.81,650.5 169.18,652.5 170.57,654.5 171.96,656.5 173.38,658.5 174.8,660.5 176.24,662.5 177.69,664.5 179.15,666.5 180.63,668.5 182.13,670.5 183.64,672.5 185.17,674.5 186.71,676.5 188.27,678.5 189.84,680.5 191.42,682.5 193.01,684.5 194.61,686.5 196.22,688.5 197.83,690.5 199.45,692.5 201.07,694.5 202.7,696.5 204.32,698.5 205.94,700.5 207.56,702.5 209.19,704.5 210.83,706.5 212.48,708.5 214.14,710.5 215.82,712.5 217.52,714.5 219.25,716.5 220.99,718.5 222.77,720.5 224.57,722.5 226.39,724.5 228.22,726.5 230.08,728.5 231.95,730.5 233.84,732.5 235.74,734.5 237.65,736.5 239.57,738.5 241.5,740.5 243.45,742.5 245.43,744.5 247.42,746.5 249.44,748.5" fill="none" stroke="#000080" stroke-width="1" />
<polyline points="245.26,50.5 244.35,52.5 243.43,54.5 242.53,56.5 241.62,58.5 240.72,60.5 239.82,62.5 238.92,64.5 238.03,66.5 237.14,68.5 236.26,70.5 235.37,72.5 234.49,74.5 233.61,76.5 232.74,78.5 231.87,80.5 231,82.5 230.14,84.5 229.28,86.5 228.42,88.5 227.57,90.5 226.72,92.5 225.87,94.5 225.03,96.5 224.19,98.5 223.35,100.5 222.52,102.5 221.69,104.5 220.86,106.5 220.04,108.5 219.22,110.5 218.4,112.5 217.59,114.5 216.78,116.5 215.97,118.5 215.17,120.5 214.37,122.5 213.58,124.5 212.78,126.5 212,128.5 211.21,130.5 210.43,132.5 209.66,134.5 208.88,136.5 208.11,138.5 207.35,140.5 206.59,142.5 205.83,144.5 205.07,146.5 204.32,148.5 203.58,150.5 202.84,152.5 202.1,154.5 201.36,156.5 200.63,158.5 199.9,160.5 199.18,162.5 198.46,164.5 197.75,166.5 197.04,168.5 196.33,170.5 195.63,172.5 194.93,174.5 194.23,176.5 193.54,178.5 192.86,180.5 192.17,182.5 191.5,184.5 190.82,186.5 190.15,188.5 189.49,190.5 188.83,192.5 188.17,194.5 187.52,196.5 186.87,198.5 186.23,200.5 185.59,202.5 184.95,204.5 184.32,206.5 183.7,208.5 183.07,210.5 182.46,212.5 181.84,214.5 181.24,216.5 180.63,218.5 180.03,220.5 179.44,222.5 178.85,224.5 178.27,226.5 177.69,228.5 177.11,230.5 176.54,232.5 175.97,234.5 175.41,236.5 174.86,238.5 174.31,240.5 173.76,242.5 173.22,244.5 172.68,246.5 172.15,248.5 171.62,250.5 171.1,252.5 170.59,254.5 170.08,256.5 169.57,258.5 169.07,260.5 168.57,262.5 168.08,264.5 167.6,266.5 167.12,268.5 166.64,270.5 166.17,272.5 165.71,274.5 165.25,276.5 164.79,278.5 164.35,280.5 163.9,282.5 163.47,284.5 163.03,286.5 162.61,288.5 162.19,290.5 161.77,292.5 161.36,294.5 160.96,296.5 160.56,298.5 160.17,300.5 159.79,302.5 159.4,304.5 159.03,306.5 158.66,308.5 158.3,310.5 157.94,312.5 157.59,314.5 157.25,316.5 156.91,318.5 156.58,320.5 156.25,322.5 155.93,324.5 155.62,326.5 155.32,328.5 155.03,330.5 154.74,332.5 154.47,334.5 154.2,336.5 153.94,338.5 153.69,340.5 153.45,342.5 153.21,344.5 152.99,346.5 152.77,348.5 152.56,350.5 152.36,352.5 152.17,354.5 151.99,356.5 151.81,358.5 151.65,360.5 151.49,362.5 151.34,364.5 151.21,366.5 151.07,368.5 150.95,370.5 150.84,372.5 150.74,374.5 150.64,376.5 150.55,378.5 150.47,380.5 150.4,382.5 150.34,384.5 150.29,386.5 150.25,388.5 150.21,390.5 150.18,392.5 150.17,394.5 150.16,396.5 150.15,398.5 150.16,400.5 150.18,402.5 150.2,404.5 150.24,406.5 150.28,408.5 150.33,410.5 150.38,412.5 150.45,414.5 150.53,416.5 150.61,418.5 150.7,420.5 150.8,422.5 150.9,424.5 151.02,426.5 151.14,428.5 151.27,430.5 151.41,432.5 151.56,434.5 151.71,436.5 151.88,438.5 152.05,440.5 152.22,442.5 152.41,444.5 152.6,446.5 152.8,448.5 153,450.5 153.22,452.5 153.45,454.5 153.69,456.5 153.95,458.5 154.21,460.5 154.49,462.5 154.77,464.5 155.07,466.5 155.38,468.5 155.71,470.5 156.04,472.5 156.39,474.5 156.74,476.5 157.11,478.5 157.49,480.5 157.88,482.5 158.29,484.5 158.7,486.5 159.13,488.5 159.56,490.5 160.01,492.5 160.47,494.5 160.94,496.5 161.43,498.5 161.92,500.5 162.42,502.5 162.94,504.5 163.46,506.5 164,508.5 164.55,510.5 165.1,512.5 165.67,514.5 166.25,516.5 166.84,518.5 167.44,520.5 168.04,522.5 168.66,524.5 169.29,526.5 169.93,528.5 170.58,530.5 171.24,532.5 171.91,534.5 172.6,536.5 173.31,538.5 174.02,540.5 174.76,542.5 175.5,544.5 176.26,546.5 177.03,548.5 177.81,550.5 178.61,552.5 179.42,554.5 180.25,556.5 181.08,558.5 181.93,560.5 182.79,562.5 183.66,564.5 184.55,566.5 185.45,568.5 186.35,570.5 187.27,572.5 188.2,574.5 189.14,576.5 190.1,578.5 191.06,580.5 192.03,582.5 193.01,584.5 194,586.5 195,588.5 196.02,590.5 197.04,592.5 198.08,594.5 199.12,596.5 200.18,598.5 201.25,600.5 202.34,602.5 203.43,604.5 204.54,606.5 205.66,608.5 206.79,610.5 207.94,612.5 209.1,614.5 210.27,616.5 211.46,618.5 212.65,620.5 213.87,622.5 215.09,624.5 216.33,626.5 217.59,628.5 218.85,630.5 220.14,632.5 221.43,634.5 222.75,636.5 224.08,638.5 225.42,640.5 226.77,642.5 228.14,644.5 229.52,646.5 230.92,648.5 232.32,650.5 233.74,652.5 235.16,654.5 236.6,656.5 238.04,658.5 239.5,660.5 240.96,662.5 242.42,664.5 243.9,666.5 245.38,668.5 246.88,670.5 248.39,672.5 249.9,674.5 251.43,676.5 252.96,678.5 254.5,680.5 256.04,682.5 257.59,684.5 259.13,686.5 260.68,688.5 262.23,690.5 263.77,692.5 265.31,694.5 266.84,696.5 268.36,698.5 269.88,700.5 271.39,702.5 272.9,704.5 274.41,706.5 275.92,708.5 277.44,710.5 278.97,712.5 280.5,714.5 282.05,716.5 283.62,718.5 285.2,720.5 286.8,722.5 288.41,724.5 290.02,726.5 291.65,728.5 293.28,730.5 294.92,732.5 296.56,734.5 298.21,736.5 299.85,738.5 301.5,740.5 303.16,742.5 304.83,744.5 306.51,746.5 308.21,748.5" fill="none" stroke="#000080" stroke-width="1" />
<polyline points="293.3,50.5 292.45,52.5 291.6,54.5 290.75,56.5 289.91,58.5 289.07,60.5 288.24,62.5 287.4,64.5 286.57,66.5 285.75,68.5 284.93,70.5 284.11,72.5 283.29,74.5 282.48,76.5 281.67,78.5 280.87,80.5 280.06,82.5 279.27,84.5 278.47,86.5 277.68,88.5 276.89,90.5 276.11,92.5 275.33,94.5 274.55,96.5 273.78,98.5 273.01,100.5 272.24,102.5 271.48,104.5 270.72,106.5 269.96,108.5 269.21,110.5 268.46,112.5 267.72,114.5 266.98,116.5 266.24,118.5 265.51,120.5 264.78,122.5 264.05,124.5 263.33,126.5 262.61,128.5 261.9,130.5 261.19,132.5 260.48,134.5 259.78,136.5 259.08,138.5 258.39,140.5 257.7,142.5 257.01,144.5 256.33,146.5 255.65,148.5 254.98,150.5 254.31,152.5 253.64,154.5 252.98,156.5 252.32,158.5 251.67,160.5 251.02,162.5 250.38,164.5 249.74,166.5 249.1,168.5 248.47,170.5 247.84,172.5 247.22,174.5 246.6,176.5 245.98,178.5 245.37,180.5 244.76,182.5 244.16,184.5 243.57,186.5 242.97,188.5 242.38,190.5 241.8,192.5 241.22,194.5 240.65,196.5 240.08,198.5 239.51,200.5 238.95,202.5 238.39,204.5 237.84,206.5 237.3,208.5 236.75,210.5 236.22,212.5 235.68,214.5 235.16,216.5 234.63,218.5 234.12,220.5 233.6,222.5 233.1,224.5 232.59,226.5 232.09,228.5 231.6,230.5 231.11,232.5 230.63,234.5 230.15,236.5 229.68,238.5 229.21,240.5 228.75,242.5 228.29,244.5 227.84,246.5 227.39,248.5 226.95,250.5 226.51,252.5 226.08,254.5 225.66,256.5 225.24,258.5 224.82,260.5 224.41,262.5 224.01,264.5 223.61,266.5 223.22,268.5 222.83,270.5 222.45,272.5 222.08,274.5 221.71,276.5 221.34,278.5 220.98,280.5 220.63,282.5 220.28,284.5 219.94,286.5 219.61,288.5 219.28,290.5 218.95,292.5 218.64,294.5 218.33,296.5 218.02,298.5 217.72,300.5 217.43,302.5 217.14,304.5 216.86,306.5 216.59,308.5 216.32,310.5 216.05,312.5 215.8,314.5 215.55,316.5 215.31,318.5 215.07,320.5 214.84,322.5 214.62,324.5 214.41,326.5 214.2,328.5 214.01,330.5 213.82,332.5 213.65,334.5 213.48,336.5 213.32,338.5 213.17,340.5 213.03,342.5 212.89,344.5 212.77,346.5 212.66,348.5 212.55,350.5 212.46,352.5 212.37,354.5 212.29,356.5 212.22,358.5 212.16,360.5 212.11,362.5 212.07,364.5 212.04,366.5 212.01,368.5 212,370.5 211.99,372.5 212,374.5 212.01,376.5 212.03,378.5 212.07,380.5 212.11,382.5 212.16,384.5 212.22,386.5 212.28,388.5 212.36,390.5 212.45,392.5 212.54,394.5 212.65,396.5 212.76,398.5 212.88,400.5 213.01,402.5 213.15,404.5 213.3,406.5 213.46,408.5 213.62,410.5 213.8,412.5 213.98,414.5 214.18,416.5 214.38,418.5 214.59,420.5 214.81,422.5 215.03,424.5 215.27,426.5 215.51,428.5 215.76,430.5 216.02,432.5 216.29,434.5 216.56,436.5 216.85,438.5 217.14,440.5 217.44,442.5 217.75,444.5 218.06,446.5 218.38,448.5 218.71,450.5 219.05,452.5 219.41,454.5 219.77,456.5 220.15,458.5 220.54,460.5 220.94,462.5 221.36,464.5 221.78,466.5 222.22,468.5 222.67,470.5 223.13,472.5 223.6,474.5 224.09,476.5 224.59,478.5 225.1,480.5 225.62,482.5 226.15,484.5 226.69,486.5 227.25,488.5 227.82,490.5 228.39,492.5 228.98,494.5 229.58,496.5 230.2,498.5 230.82,500.5 231.45,502.5 232.1,504.5 232.75,506.5 233.42,508.5 234.09,510.5 234.78,512.5 235.48,514.5 236.18,516.5 236.9,518.5 237.62,520.5 238.36,522.5 239.11,524.5 239.86,526.5 240.62,528.5 241.39,530.5 242.18,532.5 242.98,534.5 243.79,536.5 244.62,538.5 245.45,540.5 246.31,542.5 247.17,544.5 248.05,546.5 248.93,548.5 249.83,550.5 250.75,552.5 251.67,554.5 252.6,556.5 253.55,558.5 254.51,560.5 255.47,562.5 256.45,564.5 257.44,566.5 258.43,568.5 259.44,570.5 260.46,572.5 261.48,574.5 262.51,576.5 263.55,578.5 264.6,580.5 265.65,582.5 266.71,584.5 267.77,586.5 268.85,588.5 269.93,590.5 271.02,592.5 272.11,594.5 273.22,596.5 274.33,598.5 275.45,600.5 276.58,602.5 277.71,604.5 278.85,606.5 280,608.5 281.16,610.5 282.33,612.5 283.5,614.5 284.68,616.5 285.87,618.5 287.06,620.5 288.27,622.5 289.48,624.5 290.7,626.5 291.92,628.5 293.15,630.5 294.39,632.5 295.64,634.5 296.9,636.5 298.16,638.5 299.43,640.5 300.71,642.5 301.99,644.5 303.27,646.5 304.56,648.5 305.85,650.5 307.15,652.5 308.45,654.5 309.74,656.5 311.04,658.5 312.34,660.5 313.63,662.5 314.92,664.5 316.21,666.5 317.51,668.5 318.8,670.5 320.1,672.5 321.4,674.5 322.69,676.5 323.99,678.5 325.28,680.5 326.57,682.5 327.85,684.5 329.12,686.5 330.39,688.5 331.65,690.5 332.89,692.5 334.13,694.5 335.35,696.5 336.55,698.5 337.75,700.5 338.93,702.5 340.1,704.5 341.27,706.5 342.43,708.5 343.59,710.5 344.75,712.5 345.91,714.5 347.08,716.5 348.26,718.5 349.45,720.5 350.65,722.5 351.85,724.5 353.05,726.5 354.26,728.5 355.47,730.5 356.68,732.5 357.89,734.5 359.09,736.5 360.3,738.5 361.5,740.5 362.71,742.5 363.93,744.5 365.16,746.5 366.39,748.5" fill="none" stroke="#000080" stroke-width="1" />
<polyline points="358.04,50.5 357.27,52.5 356.51,54.5 355.75,56.5 354.99,58.5 354.24,60.5 353.49,62.5 352.74,64.5 352,66.5 351.26,68.5 350.53,70.5 349.79,72.5 349.06,74.5 348.34,76.5 347.62,78.5 346.9,80.5 346.19,82.5 345.48,84.5 344.77,86.5 344.07,88.5 343.37,90.5 342.68,92.5 341.99,94.5 341.3,96.5 340.61,98.5 339.93,100.5 339.26,102.5 338.59,104.5 337.92,106.5 337.26,108.5 336.6,110.5 335.94,112.5 335.29,114.5 334.64,116.5 334,118.5 333.36,120.5 332.72,122.5 332.09,124.5 331.46,126.5 330.84,128.5 330.22,130.5 329.6,132.5 328.99,134.5 328.38,136.5 327.78,138.5 327.18,140.5 326.59,142.5 326,144.5 325.42,146.5 324.83,148.5 324.26,150.5 323.69,152.5 323.12,154.5 322.55,156.5 322,158.5 321.44,160.5 320.89,162.5 320.35,164.5 319.8,166.5 319.27,168.5 318.74,170.5 318.21,172.5 317.69,174.5 317.17,176.5 316.66,178.5 316.15,180.5 315.64,182.5 315.14,184.5 314.65,186.5 314.16,188.5 313.68,190.5 313.2,192.5 312.72,194.5 312.25,196.5 311.79,198.5 311.33,200.5 310.87,202.5 310.42,204.5 309.98,206.5 309.54,208.5 309.1,210.5 308.67,212.5 308.25,214.5 307.83,216.5 307.41,218.5 307,220.5 306.6,222.5 306.2,224.5 305.81,226.5 305.42,228.5 305.04,230.5 304.66,232.5 304.29,234.5 303.92,236.5 303.56,238.5 303.21,240.5 302.86,242.5 302.51,244.5 302.17,246.5 301.84,248.5 301.51,250.5 301.19,252.5 300.88,254.5 300.57,256.5 300.26,258.5 299.96,260.5 299.67,262.5 299.38,264.5 299.1,266.5 298.83,268.5 298.56,270.5 298.3,272.5 298.04,274.5 297.79,276.5 297.54,278.5 297.31,280.5 297.07,282.5 296.85,284.5 296.63,286.5 296.41,288.5 296.21,290.5 296.01,292.5 295.81,294.5 295.62,296.5 295.44,298.5 295.27,300.5 295.1,302.5 294.94,304.5 294.78,306.5 294.63,308.5 294.49,310.5 294.35,312.5 294.23,314.5 294.1,316.5 293.99,318.5 293.88,320.5 293.78,322.5 293.69,324.5 293.6,326.5 293.53,328.5 293.47,330.5 293.41,332.5 293.37,334.5 293.33,336.5 293.31,338.5 293.29,340.5 293.28,342.5 293.28,344.5 293.3,346.5 293.32,348.5 293.35,350.5 293.39,352.5 293.44,354.5 293.5,356.5 293.57,358.5 293.65,360.5 293.74,362.5 293.83,364.5 293.94,366.5 294.06,368.5 294.19,370.5 294.32,372.5 294.47,374.5 294.62,376.5 294.79,378.5 294.97,380.5 295.15,382.5 295.34,384.5 295.55,386.5 295.76,388.5 295.98,390.5 296.21,392.5 296.45,394.5 296.7,396.5 296.96,398.5 297.23,400.5 297.51,402.5 297.8,404.5 298.09,406.5 298.4,408.5 298.71,410.5 299.03,412.5 299.37,414.5 299.71,416.5 300.05,418.5 300.41,420.5 300.78,422.5 301.15,424.5 301.53,426.5 301.92,428.5 302.32,430.5 302.73,432.5 303.14,434.5 303.56,436.5 303.99,438.5 304.43,440.5 304.88,442.5 305.33,444.5 305.79,446.5 306.25,448.5 306.72,450.5 307.21,452.5 307.7,454.5 308.21,456.5 308.73,458.5 309.26,460.5 309.8,462.5 310.35,464.5 310.92,466.5 311.49,468.5 312.08,470.5 312.68,472.5 313.28,474.5 313.9,476.5 314.53,478.5 315.17,480.5 315.82,482.5 316.48,484.5 317.15,486.5 317.83,488.5 318.51,490.5 319.21,492.5 319.92,494.5 320.64,496.5 321.36,498.5 322.09,500.5 322.84,502.5 323.58,504.5 324.34,506.5 325.11,508.5 325.88,510.5 326.66,512.5 327.45,514.5 328.24,516.5 329.04,518.5 329.84,520.5 330.65,522.5 331.47,524.5 332.29,526.5 333.12,528.5 333.95,530.5 334.79,532.5 335.63,534.5 336.49,536.5 337.35,538.5 338.23,540.5 339.1,542.5 339.99,544.5 340.88,546.5 341.78,548.5 342.69,550.5 343.6,552.5 344.51,554.5 345.43,556.5 346.35,558.5 347.28,560.5 348.21,562.5 349.14,564.5 350.08,566.5 351.02,568.5 351.96,570.5 352.9,572.5 353.84,574.5 354.78,576.5 355.71,578.5 356.65,580.5 357.59,582.5 358.52,584.5 359.45,586.5 360.38,588.5 361.31,590.5 362.24,592.5 363.17,594.5 364.09,596.5 365.01,598.5 365.93,600.5 366.85,602.5 367.77,604.5 368.69,606.5 369.6,608.5 370.51,610.5 371.42,612.5 372.33,614.5 373.24,616.5 374.14,618.5 375.04,620.5 375.94,622.5 376.84,624.5 377.74,626.5 378.63,628.5 379.52,630.5 380.41,632.5 381.3,634.5 382.19,636.5 383.08,638.5 383.96,640.5 384.84,642.5 385.72,644.5 386.6,646.5 387.47,648.5 388.33,650.5 389.2,652.5 390.05,654.5 390.9,656.5 391.75,658.5 392.58,660.5 393.42,662.5 394.24,664.5 395.05,666.5 395.87,668.5 396.68,670.5 397.48,672.5 398.29,674.5 399.08,676.5 399.88,678.5 400.66,680.5 401.44,682.5 402.21,684.5 402.97,686.5 403.72,688.5 404.47,690.5 405.2,692.5 405.92,694.5 406.62,696.5 407.31,698.5 407.99,700.5 408.66,702.5 409.32,704.5 409.97,706.5 410.62,708.5 411.27,710.5 411.92,712.5 412.57,714.5 413.22,716.5 413.89,718.5 414.56,720.5 415.24,722.5 415.93,724.5 416.62,726.5 417.31,728.5 418,730.5 418.7,732.5 419.4,734.5 420.1,736.5 420.8,738.5 421.5,740.5 422.21,742.5 422.93,744.5 423.65,746.5 424.39,748.5" fill="none" stroke="#000080" stroke-width="1" />
<polyline points="454.24,50.5 453.6,52.5 452.96,54.5 452.33,56.5 451.7,58.5 451.07,60.5 450.45,62.5 449.83,64.5 449.22,66.5 448.6,68.5 448,70.5 447.39,72.5 446.79,74.5 446.2,76.5 445.61,78.5 445.02,80.5 444.44,82.5 443.86,84.5 443.29,86.5 442.71,88.5 442.15,90.5 441.59,92.5 441.03,94.5 440.47,96.5 439.92,98.5 439.38,100.5 438.84,102.5 438.3,104.5 437.77,106.5 437.24,108.5 436.72,110.5 436.2,112.5 435.68,114.5 435.17,116.5 434.66,118.5 434.16,120.5 433.66,122.5 433.17,124.5 432.68,126.5 432.2,128.5 431.72,130.5 431.24,132.5 430.77,134.5 430.31,136.5 429.85,138.5 429.39,140.5 428.94,142.5 428.49,144.5 428.05,146.5 427.61,148.5 427.18,150.5 426.75,152.5 426.33,154.5 425.91,156.5 425.5,158.5 425.09,160.5 424.69,162.5 424.29,164.5 423.89,166.5 423.51,168.5 423.12,170.5 422.74,172.5 422.37,174.5 422,176.5 421.64,178.5 421.28,180.5 420.93,182.5 420.58,184.5 420.24,186.5 419.9,188.5 419.57,190.5 419.24,192.5 418.92,194.5 418.6,196.5 418.29,198.5 417.99,200.5 417.69,202.5 417.39,204.5 417.1,206.5 416.82,208.5 416.54,210.5 416.27,212.5 416,214.5 415.74,216.5 415.48,218.5 415.23,220.5 414.99,222.5 414.75,224.5 414.51,226.5 414.29,228.5 414.06,230.5 413.85,232.5 413.64,234.5 413.43,236.5 413.23,238.5 413.04,240.5 412.85,242.5 412.67,244.5 412.5,246.5 412.33,248.5 412.17,250.5 412.01,252.5 411.86,254.5 411.71,256.5 411.57,258.5 411.44,260.5 411.32,262.5 411.2,264.5 411.08,266.5 410.97,268.5 410.87,270.5 410.78,272.5 410.69,274.5 410.6,276.5 410.53,278.5 410.46,280.5 410.39,282.5 410.34,284.5 410.28,286.5 410.24,288.5 410.2,290.5 410.17,292.5 410.15,294.5 410.13,296.5 410.11,298.5 410.11,300.5 410.11,302.5 410.12,304.5 410.13,306.5 410.15,308.5 410.18,310.5 410.21,312.5 410.25,314.5 410.3,316.5 410.36,318.5 410.42,320.5 410.48,322.5 410.56,324.5 410.65,326.5 410.74,328.5 410.85,330.5 410.96,332.5 411.08,334.5 411.21,336.5 411.35,338.5 411.5,340.5 411.66,342.5 411.83,344.5 412.01,346.5 412.19,348.5 412.39,350.5 412.59,352.5 412.81,354.5 413.03,356.5 413.26,358.5 413.5,360.5 413.74,362.5 414,364.5 414.26,366.5 414.54,368.5 414.82,370.5 415.11,372.5 415.4,374.5 415.71,376.5 416.02,378.5 416.34,380.5 416.67,382.5 417.01,384.5 417.35,386.5 417.7,388.5 418.06,390.5 418.42,392.5 418.79,394.5 419.17,396.5 419.56,398.5 419.95,400.5 420.34,402.5 420.75,404.5 421.16,406.5 421.57,408.5 421.99,410.5 422.42,412.5 422.84,414.5 423.28,416.5 423.72,418.5 424.16,420.5 424.61,422.5 425.06,424.5 425.52,426.5 425.97,428.5 426.44,430.5 426.9,432.5 427.37,434.5 427.84,436.5 428.31,438.5 428.78,440.5 429.26,442.5 429.73,444.5 430.21,446.5 430.69,448.5 431.17,450.5 431.65,452.5 432.14,454.5 432.63,456.5 433.13,458.5 433.63,460.5 434.14,462.5 434.64,464.5 435.16,466.5 435.67,468.5 436.19,470.5 436.71,472.5 437.24,474.5 437.76,476.5 438.29,478.5 438.82,480.5 439.35,482.5 439.88,484.5 440.41,486.5 440.94,488.5 441.48,490.5 442.01,492.5 442.54,494.5 443.07,496.5 443.6,498.5 444.13,500.5 444.66,502.5 445.18,504.5 445.7,506.5 446.22,508.5 446.74,510.5 447.25,512.5 447.76,514.5 448.27,516.5 448.77,518.5 449.27,520.5 449.76,522.5 450.25,524.5 450.73,526.5 451.21,528.5 451.69,530.5 452.16,532.5 452.63,534.5 453.1,536.5 453.56,538.5 454.02,540.5 454.49,542.5 454.94,544.5 455.4,546.5 455.85,548.5 456.3,550.5 456.74,552.5 457.18,554.5 457.62,556.5 458.05,558.5 458.47,560.5 458.89,562.5 459.31,564.5 459.72,566.5 460.13,568.5 460.53,570.5 460.92,572.5 461.31,574.5 461.69,576.5 462.06,578.5 462.43,580.5 462.79,582.5 463.14,584.5 463.49,586.5 463.83,588.5 464.16,590.5 464.49,592.5 464.81,594.5 465.13,596.5 465.44,598.5 465.75,600.5 466.06,602.5 466.35,604.5 466.65,606.5 466.94,608.5 467.22,610.5 467.5,612.5 467.78,614.5 468.06,616.5 468.33,618.5 468.6,620.5 468.86,622.5 469.13,624.5 469.39,626.5 469.64,628.5 469.9,630.5 470.15,632.5 470.41,634.5 470.66,636.5 470.91,638.5 471.16,640.5 471.41,642.5 471.66,644.5 471.9,646.5 472.15,648.5 472.39,650.5 472.63,652.5 472.86,654.5 473.09,656.5 473.32,658.5 473.55,660.5 473.77,662.5 473.99,664.5 474.21,666.5 474.42,668.5 474.64,670.5 474.86,672.5 475.07,674.5 475.29,676.5 475.5,678.5 475.71,680.5 475.92,682.5 476.12,684.5 476.33,686.5 476.52,688.5 476.71,690.5 476.9,692.5 477.08,694.5 477.26,696.5 477.42,698.5 477.58,700.5 477.73,702.5 477.88,704.5 478.03,706.5 478.18,708.5 478.33,710.5 478.49,712.5 478.65,714.5 478.82,716.5 479,718.5 479.19,720.5 479.39,722.5 479.6,724.5 479.82,726.5 480.04,728.5 480.27,730.5 480.51,732.5 480.75,734.5 481,736.5 481.25,738.5 481.5,740.5 481.76,742.5 482.04,744.5 482.33,746.5 482.64,748.5" fill="none" stroke="#000080" stroke-width="1" />
<polyline points="610.8,50.5 610.35,52.5 609.91,54.5 609.47,56.5 609.04,58.5 608.61,60.5 608.18,62.5 607.76,64.5 607.34,66.5 606.93,68.5 606.52,70.5 606.12,72.5 605.72,74.5 605.32,76.5 604.93,78.5 604.54,80.5 604.15,82.5 603.77,84.5 603.4,86.5 603.03,88.5 602.66,90.5 602.3,92.5 601.94,94.5 601.58,96.5 601.23,98.5 600.89,100.5 600.55,102.5 600.21,104.5 599.87,106.5 599.55,108.5 599.22,110.5 598.9,112.5 598.58,114.5 598.27,116.5 597.96,118.5 597.66,120.5 597.36,122.5 597.07,124.5 596.78,126.5 596.49,128.5 596.21,130.5 595.93,132.5 595.66,134.5 595.39,136.5 595.12,138.5 594.86,140.5 594.6,142.5 594.35,144.5 594.1,146.5 593.86,148.5 593.62,150.5 593.38,152.5 593.15,154.5 592.92,156.5 592.7,158.5 592.48,160.5 592.26,162.5 592.05,164.5 591.84,166.5 591.64,168.5 591.44,170.5 591.24,172.5 591.05,174.5 590.86,176.5 590.68,178.5 590.49,180.5 590.32,182.5 590.14,184.5 589.98,186.5 589.81,188.5 589.65,190.5 589.49,192.5 589.33,194.5 589.18,196.5 589.03,198.5 588.89,200.5 588.75,202.5 588.61,204.5 588.48,206.5 588.34,208.5 588.22,210.5 588.09,212.5 587.97,214.5 587.85,216.5 587.73,218.5 587.62,220.5 587.51,222.5 587.4,224.5 587.3,226.5 587.2,228.5 587.1,230.5 587,232.5 586.9,234.5 586.81,236.5 586.72,238.5 586.64,240.5 586.55,242.5 586.47,244.5 586.39,246.5 586.31,248.5 586.23,250.5 586.15,252.5 586.08,254.5 586.01,256.5 585.94,258.5 585.87,260.5 585.8,262.5 585.74,264.5 585.67,266.5 585.61,268.5 585.54,270.5 585.48,272.5 585.42,274.5 585.36,276.5 585.3,278.5 585.24,280.5 585.18,282.5 585.13,284.5 585.07,286.5 585.01,288.5 584.95,290.5 584.9,292.5 584.84,294.5 584.78,296.5 584.73,298.5 584.67,300.5 584.61,302.5 584.55,304.5 584.49,306.5 584.43,308.5 584.37,310.5 584.31,312.5 584.25,314.5 584.19,316.5 584.12,318.5 584.06,320.5 583.99,322.5 583.93,324.5 583.86,326.5 583.8,328.5 583.74,330.5 583.68,332.5 583.61,334.5 583.55,336.5 583.49,338.5 583.43,340.5 583.37,342.5 583.31,344.5 583.25,346.5 583.19,348.5 583.13,350.5 583.06,352.5 583,354.5 582.94,356.5 582.87,358.5 582.81,360.5 582.74,362.5 582.67,364.5 582.6,366.5 582.53,368.5 582.46,370.5 582.39,372.5 582.31,374.5 582.23,376.5 582.15,378.5 582.07,380.5 581.99,382.5 581.9,384.5 581.81,386.5 581.72,388.5 581.63,390.5 581.53,392.5 581.43,394.5 581.33,396.5 581.22,398.5 581.12,400.5 581,402.5 580.89,404.5 580.77,406.5 580.65,408.5 580.53,410.5 580.4,412.5 580.27,414.5 580.13,416.5 580,418.5 579.85,420.5 579.71,422.5 579.56,424.5 579.4,426.5 579.24,428.5 579.08,430.5 578.91,432.5 578.74,434.5 578.57,436.5 578.39,438.5 578.2,440.5 578.02,442.5 577.82,444.5 577.63,446.5 577.42,448.5 577.22,450.5 577.01,452.5 576.8,454.5 576.59,456.5 576.38,458.5 576.16,460.5 575.95,462.5 575.73,464.5 575.52,466.5 575.3,468.5 575.08,470.5 574.86,472.5 574.63,474.5 574.41,476.5 574.18,478.5 573.95,480.5 573.72,482.5 573.49,484.5 573.26,486.5 573.03,488.5 572.79,490.5 572.55,492.5 572.31,494.5 572.07,496.5 571.82,498.5 571.58,500.5 571.33,502.5 571.08,504.5 570.82,506.5 570.57,508.5 570.31,510.5 570.05,512.5 569.79,514.5 569.52,516.5 569.26,518.5 568.99,520.5 568.72,522.5 568.44,524.5 568.16,526.5 567.88,528.5 567.6,530.5 567.32,532.5 567.04,534.5 566.76,536.5 566.47,538.5 566.19,540.5 565.91,542.5 565.63,544.5 565.35,546.5 565.06,548.5 564.78,550.5 564.5,552.5 564.22,554.5 563.93,556.5 563.65,558.5 563.36,560.5 563.08,562.5 562.79,564.5 562.5,566.5 562.22,568.5 561.93,570.5 561.64,572.5 561.34,574.5 561.05,576.5 560.76,578.5 560.46,580.5 560.16,582.5 559.87,584.5 559.56,586.5 559.26,588.5 558.96,590.5 558.66,592.5 558.35,594.5 558.05,596.5 557.75,598.5 557.45,600.5 557.14,602.5 556.84,604.5 556.54,606.5 556.24,608.5 555.94,610.5 555.64,612.5 555.34,614.5 555.04,616.5 554.75,618.5 554.45,620.5 554.16,622.5 553.87,624.5 553.58,626.5 553.3,628.5 553.02,630.5 552.74,632.5 552.46,634.5 552.19,636.5 551.92,638.5 551.65,640.5 551.38,642.5 551.12,644.5 550.86,646.5 550.61,648.5 550.35,650.5 550.1,652.5 549.85,654.5 549.6,656.5 549.36,658.5 549.11,660.5 548.87,662.5 548.62,664.5 548.38,666.5 548.14,668.5 547.91,670.5 547.68,672.5 547.46,674.5 547.23,676.5 547.01,678.5 546.79,680.5 546.58,682.5 546.36,684.5 546.15,686.5 545.93,688.5 545.72,690.5 545.5,692.5 545.29,694.5 545.07,696.5 544.85,698.5 544.62,700.5 544.4,702.5 544.17,704.5 543.95,706.5 543.73,708.5 543.52,710.5 543.32,712.5 543.12,714.5 542.93,716.5 542.76,718.5 542.6,720.5 542.45,722.5 542.31,724.5 542.18,726.5 542.06,728.5 541.94,730.5 541.84,732.5 541.74,734.5 541.66,736.5 541.57,738.5 541.5,740.5 541.44,742.5 541.39,744.5 541.36,746.5 541.34,748.5" fill="none" stroke="#000080" stroke-width="1" />
<polyline points="855.43,50.5 854.73,52.5 854.03,54.5 853.33,56.5 852.62,58.5 851.91,60.5 851.2,62.5 850.49,64.5 849.77,66.5 849.05,68.5 848.33,70.5 847.61,72.5 846.89,74.5 846.16,76.5 845.43,78.5 844.7,80.5 843.97,82.5 843.23,84.5 842.49,86.5 841.76,88.5 841.01,90.5 840.27,92.5 839.52,94.5 838.78,96.5 838.02,98.5 837.27,100.5 836.52,102.5 835.76,104.5 835,106.5 834.24,108.5 833.48,110.5 832.71,112.5 831.95,114.5 831.18,116.5 830.41,118.5 829.63,120.5 828.86,122.5 828.08,124.5 827.3,126.5 826.52,128.5 825.74,130.5 824.95,132.5 824.16,134.5 823.38,136.5 822.59,138.5 821.79,140.5 821,142.5 820.2,144.5 819.4,146.5 818.6,148.5 817.8,150.5 817,152.5 816.19,154.5 815.38,156.5 814.57,158.5 813.76,160.5 812.95,162.5 812.14,164.5 811.32,166.5 810.5,168.5 809.68,170.5 808.86,172.5 808.04,174.5 807.22,176.5 806.39,178.5 805.56,180.5 804.74,182.5 803.91,184.5 803.07,186.5 802.24,188.5 801.41,190.5 800.57,192.5 799.73,194.5 798.89,196.5 798.06,198.5 797.21,200.5 796.37,202.5 795.53,204.5 794.68,206.5 793.84,208.5 792.99,210.5 792.14,212.5 791.29,214.5 790.44,216.5 789.59,218.5 788.73,220.5 787.88,222.5 787.02,224.5 786.17,226.5 785.31,228.5 784.45,230.5 783.59,232.5 782.73,234.5 781.87,236.5 781.01,238.5 780.14,240.5 779.28,242.5 778.41,244.5 777.55,246.5 776.68,248.5 775.81,250.5 774.95,252.5 774.08,254.5 773.21,256.5 772.34,258.5 771.47,260.5 770.59,262.5 769.72,264.5 768.85,266.5 767.97,268.5 767.1,270.5 766.23,272.5 765.35,274.5 764.48,276.5 763.6,278.5 762.72,280.5 761.85,282.5 760.97,284.5 760.09,286.5 759.21,288.5 758.33,290.5 757.46,292.5 756.58,294.5 755.7,296.5 754.82,298.5 753.94,300.5 753.06,302.5 752.18,304.5 751.3,306.5 750.42,308.5 749.54,310.5 748.65,312.5 747.77,314.5 746.89,316.5 746.01,318.5 745.13,320.5 744.25,322.5 743.37,324.5 742.49,326.5 741.62,328.5 740.74,330.5 739.87,332.5 738.99,334.5 738.12,336.5 737.25,338.5 736.39,340.5 735.52,342.5 734.65,344.5 733.79,346.5 732.93,348.5 732.07,350.5 731.21,352.5 730.35,354.5 729.49,356.5 728.64,358.5 727.78,360.5 726.93,362.5 726.08,364.5 725.23,366.5 724.38,368.5 723.53,370.5 722.69,372.5 721.84,374.5 721,376.5 720.16,378.5 719.31,380.5 718.47,382.5 717.64,384.5 716.8,386.5 715.96,388.5 715.13,390.5 714.29,392.5 713.46,394.5 712.63,396.5 711.8,398.5 710.97,400.5 710.14,402.5 709.31,404.5 708.49,406.5 707.66,408.5 706.84,410.5 706.01,412.5 705.19,414.5 704.37,416.5 703.55,418.5 702.73,420.5 701.91,422.5 701.09,424.5 700.27,426.5 699.45,428.5 698.64,430.5 697.82,432.5 697.01,434.5 696.19,436.5 695.38,438.5 694.56,440.5 693.75,442.5 692.93,444.5 692.12,446.5 691.31,448.5 690.5,450.5 689.69,452.5 688.88,454.5 688.07,456.5 687.27,458.5 686.47,460.5 685.67,462.5 684.88,464.5 684.09,466.5 683.3,468.5 682.51,470.5 681.73,472.5 680.94,474.5 680.16,476.5 679.38,478.5 678.61,480.5 677.84,482.5 677.07,484.5 676.3,486.5 675.53,488.5 674.77,490.5 674,492.5 673.24,494.5 672.48,496.5 671.73,498.5 670.97,500.5 670.22,502.5 669.47,504.5 668.72,506.5 667.98,508.5 667.23,510.5 666.49,512.5 665.75,514.5 665.01,516.5 664.27,518.5 663.53,520.5 662.79,522.5 662.06,524.5 661.33,526.5 660.59,528.5 659.86,530.5 659.14,532.5 658.41,534.5 657.69,536.5 656.97,538.5 656.26,540.5 655.55,542.5 654.84,544.5 654.14,546.5 653.43,548.5 652.74,550.5 652.04,552.5 651.35,554.5 650.66,556.5 649.97,558.5 649.28,560.5 648.6,562.5 647.92,564.5 647.24,566.5 646.57,568.5 645.89,570.5 645.22,572.5 644.55,574.5 643.88,576.5 643.22,578.5 642.55,580.5 641.89,582.5 641.23,584.5 640.57,586.5 639.91,588.5 639.26,590.5 638.61,592.5 637.96,594.5 637.31,596.5 636.66,598.5 636.02,600.5 635.38,602.5 634.75,604.5 634.11,606.5 633.48,608.5 632.86,610.5 632.23,612.5 631.61,614.5 631,616.5 630.39,618.5 629.78,620.5 629.17,622.5 628.57,624.5 627.98,626.5 627.39,628.5 626.8,630.5 626.22,632.5 625.64,634.5 625.07,636.5 624.5,638.5 623.94,640.5 623.39,642.5 622.83,644.5 622.29,646.5 621.74,648.5 621.21,650.5 620.67,652.5 620.14,654.5 619.62,656.5 619.09,658.5 618.58,660.5 618.06,662.5 617.55,664.5 617.04,666.5 616.54,668.5 616.04,670.5 615.55,672.5 615.06,674.5 614.58,676.5 614.1,678.5 613.63,680.5 613.16,682.5 612.69,684.5 612.23,686.5 611.77,688.5 611.31,690.5 610.85,692.5 610.39,694.5 609.94,696.5 609.48,698.5 609.02,700.5 608.57,702.5 608.12,704.5 607.67,706.5 607.22,708.5 606.79,710.5 606.36,712.5 605.94,714.5 605.53,716.5 605.14,718.5 604.76,720.5 604.39,722.5 604.03,724.5 603.68,726.5 603.34,728.5 603.01,730.5 602.69,732.5 602.38,734.5 602.08,736.5 601.79,738.5 601.5,740.5 601.23,742.5 600.97,744.5 600.73,746.5 600.5,748.5" fill="none" stroke="#000080" stroke-width="1" />
<polyline points="1017.98,50.5 1016.65,52.5 1015.31,54.5 1013.98,56.5 1012.64,58.5 1011.31,60.5 1009.97,62.5 1008.64,64.5 1007.31,66.5 1005.98,68.5 1004.65,70.5 1003.32,72.5 1001.99,74.5 1000.66,76.5 999.34,78.5 998.01,80.5 996.68,82.5 995.36,84.5 994.03,86.5 992.71,88.5 991.39,90.5 990.06,92.5 988.74,94.5 987.42,96.5 986.1,98.5 984.78,100.5 983.46,102.5 982.15,104.5 980.83,106.5 979.51,108.5 978.2,110.5 976.89,112.5 975.57,114.5 974.26,116.5 972.95,118.5 971.64,120.5 970.33,122.5 969.02,124.5 967.71,126.5 966.4,128.5 965.09,130.5 963.79,132.5 962.48,134.5 961.18,136.5 959.88,138.5 958.57,140.5 957.27,142.5 955.97,144.5 954.67,146.5 953.38,148.5 952.08,150.5 950.78,152.5 949.49,154.5 948.19,156.5 946.9,158.5 945.6,160.5 944.31,162.5 943.02,164.5 941.73,166.5 940.44,168.5 939.16,170.5 937.87,172.5 936.58,174.5 935.3,176.5 934.02,178.5 932.73,180.5 931.45,182.5 930.17,184.5 928.89,186.5 927.61,188.5 926.34,190.5 925.06,192.5 923.78,194.5 922.51,196.5 921.24,198.5 919.97,200.5 918.7,202.5 917.43,204.5 916.16,206.5 914.89,208.5 913.62,210.5 912.36,212.5 911.1,214.5 909.83,216.5 908.57,218.5 907.31,220.5 906.05,222.5 904.8,224.5 903.54,226.5 902.28,228.5 901.03,230.5 899.78,232.5 898.53,234.5 897.28,236.5 896.03,238.5 894.78,240.5 893.53,242.5 892.29,244.5 891.04,246.5 889.8,248.5 888.56,250.5 887.32,252.5 886.08,254.5 884.84,256.5 883.61,258.5 882.37,260.5 881.14,262.5 879.91,264.5 878.68,266.5 877.45,268.5 876.22,270.5 875,272.5 873.77,274.5 872.55,276.5 871.33,278.5 870.11,280.5 868.89,282.5 867.67,284.5 866.45,286.5 865.24,288.5 864.03,290.5 862.81,292.5 861.6,294.5 860.4,296.5 859.19,298.5 857.98,300.5 856.78,302.5 855.58,304.5 854.38,306.5 853.18,308.5 851.98,310.5 850.79,312.5 849.59,314.5 848.4,316.5 847.21,318.5 846.02,320.5 844.83,322.5 843.65,324.5 842.46,326.5 841.28,328.5 840.11,330.5 838.93,332.5 837.76,334.5 836.59,336.5 835.43,338.5 834.26,340.5 833.1,342.5 831.94,344.5 830.79,346.5 829.64,348.5 828.49,350.5 827.34,352.5 826.19,354.5 825.05,356.5 823.91,358.5 822.78,360.5 821.64,362.5 820.51,364.5 819.38,366.5 818.25,368.5 817.13,370.5 816.01,372.5 814.89,374.5 813.78,376.5 812.66,378.5 811.55,380.5 810.44,382.5 809.34,384.5 808.23,386.5 807.13,388.5 806.03,390.5 804.94,392.5 803.84,394.5 802.75,396.5 801.66,398.5 800.58,400.5 799.49,402.5 798.41,404.5 797.33,406.5 796.26,408.5 795.18,410.5 794.11,412.5 793.04,414.5 791.97,416.5 790.9,418.5 789.84,420.5 788.78,422.5 787.72,424.5 786.66,426.5 785.6,428.5 784.55,430.5 783.5,432.5 782.45,434.5 781.4,436.5 780.35,438.5 779.31,440.5 778.26,442.5 777.22,444.5 776.18,446.5 775.14,448.5 774.11,450.5 773.07,452.5 772.04,454.5 771.02,456.5 769.99,458.5 768.98,460.5 767.96,462.5 766.95,464.5 765.94,466.5 764.93,468.5 763.93,470.5 762.93,472.5 761.93,474.5 760.94,476.5 759.95,478.5 758.97,480.5 757.98,482.5 757.01,484.5 756.03,486.5 755.06,488.5 754.09,490.5 753.12,492.5 752.15,494.5 751.19,496.5 750.24,498.5 749.28,500.5 748.33,502.5 747.38,504.5 746.43,506.5 745.49,508.5 744.55,510.5 743.61,512.5 742.67,514.5 741.74,516.5 740.81,518.5 739.88,520.5 738.96,522.5 738.03,524.5 737.11,526.5 736.2,528.5 735.28,530.5 734.37,532.5 733.46,534.5 732.56,536.5 731.66,538.5 730.76,540.5 729.87,542.5 728.98,544.5 728.1,546.5 727.21,548.5 726.34,550.5 725.46,552.5 724.59,554.5 723.73,556.5 722.87,558.5 722.01,560.5 721.15,562.5 720.3,564.5 719.45,566.5 718.6,568.5 717.76,570.5 716.92,572.5 716.08,574.5 715.25,576.5 714.42,578.5 713.59,580.5 712.76,582.5 711.94,584.5 711.12,586.5 710.3,588.5 709.48,590.5 708.67,592.5 707.86,594.5 707.05,596.5 706.25,598.5 705.45,600.5 704.66,602.5 703.87,604.5 703.08,606.5 702.29,608.5 701.51,610.5 700.74,612.5 699.97,614.5 699.2,616.5 698.44,618.5 697.68,620.5 696.93,622.5 696.18,624.5 695.44,626.5 694.7,628.5 693.96,630.5 693.23,632.5 692.51,634.5 691.8,636.5 691.09,638.5 690.38,640.5 689.68,642.5 688.98,644.5 688.3,646.5 687.61,648.5 686.93,650.5 686.26,652.5 685.59,654.5 684.92,656.5 684.26,658.5 683.6,660.5 682.95,662.5 682.3,664.5 681.66,666.5 681.02,668.5 680.39,670.5 679.76,672.5 679.14,674.5 678.52,676.5 677.91,678.5 677.31,680.5 676.71,682.5 676.11,684.5 675.52,686.5 674.93,688.5 674.34,690.5 673.75,692.5 673.17,694.5 672.59,696.5 672.01,698.5 671.43,700.5 670.85,702.5 670.27,704.5 669.7,706.5 669.14,708.5 668.58,710.5 668.03,712.5 667.49,714.5 666.97,716.5 666.45,718.5 665.95,720.5 665.46,722.5 664.98,724.5 664.51,726.5 664.05,728.5 663.6,730.5 663.16,732.5 662.73,734.5 662.31,736.5 661.9,738.5 661.5,740.5 661.11,742.5 660.74,744.5 660.38,746.5 660.03,748.5" fill="none" stroke="#000080" stroke-width="1" />
<line x1="42" y1="40" x2="-678" y2="760" stroke="#f0f0f0" stroke-width="1"/>
<line x1="102" y1="40" x2="-618" y2="760" stroke="#f0f0f0" stroke-width="1"/>
<line x1="162" y1="40" x2="-558" y2="760" stroke="#f0f0f0" stroke-width="1"/>
<line x1="222" y1="40" x2="-498" y2="760" stroke="#f0f0f0" stroke-width="1"/>
<line x1="282" y1="40" x2="-438" y2="760" stroke="#f0f0f0" stroke-width="1"/>
<line x1="342" y1="40" x2="-378" y2="760" stroke="#f0f0f0" stroke-width="1"/>
<line x1="402" y1="40" x2="-318" y2="760" stroke="#f0f0f0" stroke-width="1"/>
<line x1="462" y1="40" x2="-258" y2="760" stroke="#f0f0f0" stroke-width="1"/>
<line x1="522" y1="40" x2="-198" y2="760" stroke="#f0f0f0" stroke-width="1"/>
<line x1="582" y1="40" x2="-138" y2="760" stroke="#f0f0f0" stroke-width="1"/>
<line x1="642" y1="40" x2="-78" y2="760" stroke="#f0f0f0" stroke-width="1"/>
<line x1="702" y1="40" x2="-18" y2="760" stroke="#f0f0f0" stroke-width="1"/>
<line x1="762" y1="40" x2="42" y2="760" stroke="#f0f0f0" stroke-width="1"/>
<line x1="822" y1="40" x2="102" y2="760" stroke="#f0f0f0" stroke-width="1"/>
<line x1="882" y1="40" x2="162" y2="760" stroke="#f0f0f0" stroke-width="1"/>
<line x1="942" y1="40" x2="222" y2="760" stroke="#f0f0f0" stroke-width="1"/>
<line x1="1002" y1="40" x2="282" y2="760" stroke="#f0f0f0" stroke-width="1"/>
<line x1="1062" y1="40" x2="342" y2="760" stroke="#f0f0f0" stroke-width="1"/>
<line x1="1122" y1="40" x2="402" y2="760" stroke="#f0f0f0" stroke-width="1"/>
<line x1="1182" y1="40" x2="462" y2="760" stroke="#f0f0f0" stroke-width="1"/>
<line x1="1242" y1="40" x2="522" y2="760" stroke="#f0f0f0" stroke-width="1"/>
<line x1="1302" y1="40" x2="582" y2="760" stroke="#f0f0f0" stroke-width="1"/>
<line x1="1362" y1="40" x2="642" y2="760" stroke="#f0f0f0" stroke-width="1"/>
<line x1="1422" y1="40" x2="702" y2="760" stroke="#f0f0f0" stroke-width="1"/>
</g>
<g shape-rendering="crispEdges" stroke="#ffffff" stroke-width="1">
<line x1="56" y1="50.5" x2="667" y2="50.5"/>
<line x1="56" y1="321.5" x2="667" y2="321.5"/>
<line x1="56" y1="449.5" x2="667" y2="449.5"/>
<line x1="56" y1="529.5" x2="667" y2="529.5"/>
<line x1="56" y1="586.5" x2="667" y2="586.5"/>
<line x1="56" y1="630.5" x2="667" y2="630.5"/>
<line x1="56" y1="665.5" x2="667" y2="665.5"/>
<line x1="56" y1="694.5" x2="667" y2="694.5"/>
<line x1="56" y1="719.5" x2="667" y2="719.5"/>
<line x1="56" y1="740.5" x2="667" y2="740.5"/>
<rect x="61.5" y="50.5" width="600" height="699" fill="none"/>
<line x1="61.5" y1="749" x2="61.5" y2="755"/>
<line x1="61.5" y1="788" x2="61.5" y2="793"/>
<line x1="61.5" y1="826" x2="61.5" y2="831"/>
<line x1="121.5" y1="749" x2="121.5" y2="755"/>
<line x1="121.5" y1="788" x2="121.5" y2="793"/>
<line x1="121.5" y1="826" x2="121.5" y2="831"/>
<line x1="181.5" y1="749" x2="181.5" y2="755"/>
<line x1="181.5" y1="788" x2="181.5" y2="793"/>
<line x1="181.5" y1="826" x2="181.5" y2="831"/>
<line x1="241.5" y1="749" x2="241.5" y2="755"/>
<line x1="241.5" y1="788" x2="241.5" y2="793"/>
<line x1="241.5" y1="826" x2="241.5" y2="831"/>
<line x1="301.5" y1="749" x2="301.5" y2="755"/>
<line x1="301.5" y1="788" x2="301.5" y2="793"/>
<line x1="301.5" y1="826" x2="301.5" y2="831"/>
<line x1="361.5" y1="749" x2="361.5" y2="755"/>
<line x1="361.5" y1="788" x2="361.5" y2="793"/>
<line x1="361.5" y1="826" x2="361.5" y2="831"/>
<line x1="421.5" y1="749" x2="421.5" y2="755"/>
<line x1="421.5" y1="788" x2="421.5" y2="793"/>
<line x1="421.5" y1="826" x2="421.5" y2="831"/>
<line x1="481.5" y1="749" x2="481.5" y2="755"/>
<line x1="481.5" y1="788" x2="481.5" y2="793"/>
<line x1="481.5" y1="826" x2="481.5" y2="831"/>
<line x1="541.5" y1="749" x2="541.5" y2="755"/>
<line x1="541.5" y1="788" x2="541.5" y2="793"/>
<line x1="541.5" y1="826" x2="541.5" y2="831"/>
<line x1="601.5" y1="749" x2="601.5" y2="755"/>
<line x1="601.5" y1="788" x2="601.5" y2="793"/>
<line x1="601.5" y1="826" x2="601.5" y2="831"/>
<line x1="661.5" y1="749" x2="661.5" y2="755"/>
<line x1="661.5" y1="788" x2="661.5" y2="793"/>
<line x1="661.5" y1="826" x2="661.5" y2="831"/>
<line x1="61.5" y1="863" x2="61.5" y2="868"/>
<line x1="136.5" y1="863" x2="136.5" y2="868"/>
<line x1="211.5" y1="863" x2="211.5" y2="868"/>
<line x1="286.5" y1="863" x2="286.5" y2="868"/>
<line x1="361.5" y1="863" x2="361.5" y2="868"/>
<line x1="436.5" y1="863" x2="436.5" y2="868"/>
<line x1="511.5" y1="863" x2="511.5" y2="868"/>
<line x1="586.5" y1="863" x2="586.5" y2="868"/>
<line x1="661.5" y1="863" x2="661.5" y2="868"/>
</g>
<g fill="#fff" font-size="14">
<text x="52.5" y="55" text-anchor="end" textLength="19.0" lengthAdjust="spacingAndGlyphs">100</text>
<text x="52.5" y="326" text-anchor="end" textLength="19.0" lengthAdjust="spacingAndGlyphs">200</text>
<text x="52.5" y="454" text-anchor="end" textLength="19.0" lengthAdjust="spacingAndGlyphs">300</text>
<text x="52.5" y="534" text-anchor="end" textLength="19.0" lengthAdjust="spacingAndGlyphs">400</text>
<text x="52.5" y="591" text-anchor="end" textLength="19.0" lengthAdjust="spacingAndGlyphs">500</text>
<text x="52.5" y="635" text-anchor="end" textLength="19.0" lengthAdjust="spacingAndGlyphs">600</text>
<text x="52.5" y="670" text-anchor="end" textLength="19.0" lengthAdjust="spacingAndGlyphs">700</text>
<text x="52.5" y="699" text-anchor="end" textLength="19.0" lengthAdjust="spacingAndGlyphs">800</text>
<text x="52.5" y="724" text-anchor="end" textLength="19.0" lengthAdjust="spacingAndGlyphs">900</text>
<text x="52.5" y="745" text-anchor="end" textLength="25.5" lengthAdjust="spacingAndGlyphs">1000</text>
<text x="670.5" y="55" textLength="44.5" lengthAdjust="spacingAndGlyphs">16548m</text>
<text x="670.5" y="326" textLength="44.5" lengthAdjust="spacingAndGlyphs">12147m</text>
<text x="670.5" y="454" textLength="38.0" lengthAdjust="spacingAndGlyphs">9483m</text>
<text x="670.5" y="534" textLength="38.0" lengthAdjust="spacingAndGlyphs">7442m</text>
<text x="670.5" y="591" textLength="38.0" lengthAdjust="spacingAndGlyphs">5769m</text>
<text x="670.5" y="635" textLength="38.0" lengthAdjust="spacingAndGlyphs">4343m</text>
<text x="670.5" y="670" textLength="38.0" lengthAdjust="spacingAndGlyphs">3104m</text>
<text x="670.5" y="699" textLength="38.0" lengthAdjust="spacingAndGlyphs">2000m</text>
<text x="670.5" y="724" textLength="38.0" lengthAdjust="spacingAndGlyphs">1004m</text>
</g><g fill="#fff" font-size="14">
<text x="59.0" y="768" text-anchor="middle" textLength="17.0" lengthAdjust="spacingAndGlyphs">-50</text>
<text x="61.5" y="805.5" text-anchor="middle" textLength="6.0" lengthAdjust="spacingAndGlyphs">0</text>
<text x="61.5" y="843.5" text-anchor="middle" textLength="6.0" lengthAdjust="spacingAndGlyphs">0</text>
<text x="119.0" y="768" text-anchor="middle" textLength="17.0" lengthAdjust="spacingAndGlyphs">-40</text>
<text x="121.5" y="805.5" text-anchor="middle" textLength="12.5" lengthAdjust="spacingAndGlyphs">10</text>
<text x="121.5" y="843.5" text-anchor="middle" textLength="19.0" lengthAdjust="spacingAndGlyphs">300</text>
<text x="179.0" y="768" text-anchor="middle" textLength="17.0" lengthAdjust="spacingAndGlyphs">-30</text>
<text x="181.5" y="805.5" text-anchor="middle" textLength="12.5" lengthAdjust="spacingAndGlyphs">20</text>
<text x="181.5" y="843.5" text-anchor="middle" textLength="19.0" lengthAdjust="spacingAndGlyphs">600</text>
<text x="239.0" y="768" text-anchor="middle" textLength="17.0" lengthAdjust="spacingAndGlyphs">-20</text>
<text x="241.5" y="805.5" text-anchor="middle" textLength="12.5" lengthAdjust="spacingAndGlyphs">30</text>
<text x="241.5" y="843.5" text-anchor="middle" textLength="19.0" lengthAdjust="spacingAndGlyphs">900</text>
<text x="299.0" y="768" text-anchor="middle" textLength="17.0" lengthAdjust="spacingAndGlyphs">-10</text>
<text x="301.5" y="805.5" text-anchor="middle" textLength="12.5" lengthAdjust="spacingAndGlyphs">40</text>
<text x="301.5" y="843.5" text-anchor="middle" textLength="25.5" lengthAdjust="spacingAndGlyphs">1200</text>
<text x="361.5" y="768" text-anchor="middle" textLength="6.0" lengthAdjust="spacingAndGlyphs">0</text>
<text x="361.5" y="805.5" text-anchor="middle" textLength="12.5" lengthAdjust="spacingAndGlyphs">50</text>
<text x="361.5" y="843.5" text-anchor="middle" textLength="25.5" lengthAdjust="spacingAndGlyphs">1500</text>
<text x="421.5" y="768" text-anchor="middle" textLength="12.5" lengthAdjust="spacingAndGlyphs">10</text>
<text x="421.5" y="805.5" text-anchor="middle" textLength="12.5" lengthAdjust="spacingAndGlyphs">60</text>
<text x="421.5" y="843.5" text-anchor="middle" textLength="25.5" lengthAdjust="spacingAndGlyphs">1800</text>
<text x="481.5" y="768" text-anchor="middle" textLength="12.5" lengthAdjust="spacingAndGlyphs">20</text>
<text x="481.5" y="805.5" text-anchor="middle" textLength="12.5" lengthAdjust="spacingAndGlyphs">70</text>
<text x="481.5" y="843.5" text-anchor="middle" textLength="25.5" lengthAdjust="spacingAndGlyphs">2100</text>
<text x="541.5" y="768" text-anchor="middle" textLength="12.5" lengthAdjust="spacingAndGlyphs">30</text>
<text x="541.5" y="805.5" text-anchor="middle" textLength="12.5" lengthAdjust="spacingAndGlyphs">80</text>
<text x="541.5" y="843.5" text-anchor="middle" textLength="25.5" lengthAdjust="spacingAndGlyphs">2400</text>
<text x="601.5" y="768" text-anchor="middle" textLength="12.5" lengthAdjust="spacingAndGlyphs">40</text>
<text x="601.5" y="805.5" text-anchor="middle" textLength="12.5" lengthAdjust="spacingAndGlyphs">90</text>
<text x="601.5" y="843.5" text-anchor="middle" textLength="25.5" lengthAdjust="spacingAndGlyphs">2700</text>
<text x="661.5" y="768" text-anchor="middle" textLength="12.5" lengthAdjust="spacingAndGlyphs">50</text>
<text x="661.5" y="805.5" text-anchor="middle" textLength="19.0" lengthAdjust="spacingAndGlyphs">100</text>
<text x="661.5" y="843.5" text-anchor="middle" textLength="25.5" lengthAdjust="spacingAndGlyphs">3000</text>
<text x="59.0" y="879.5" text-anchor="middle" textLength="23.5" lengthAdjust="spacingAndGlyphs">-100</text>
<text x="134.0" y="879.5" text-anchor="middle" textLength="17.0" lengthAdjust="spacingAndGlyphs">-50</text>
<text x="211.5" y="879.5" text-anchor="middle" textLength="6.0" lengthAdjust="spacingAndGlyphs">0</text>
<text x="286.5" y="879.5" text-anchor="middle" textLength="12.5" lengthAdjust="spacingAndGlyphs">50</text>
<text x="361.5" y="879.5" text-anchor="middle" textLength="19.0" lengthAdjust="spacingAndGlyphs">100</text>
<text x="436.5" y="879.5" text-anchor="middle" textLength="19.0" lengthAdjust="spacingAndGlyphs">150</text>
<text x="511.5" y="879.5" text-anchor="middle" textLength="19.0" lengthAdjust="spacingAndGlyphs">200</text>
<text x="586.5" y="879.5" text-anchor="middle" textLength="19.0" lengthAdjust="spacingAndGlyphs">250</text>
<text x="661.5" y="879.5" text-anchor="middle" textLength="19.0" lengthAdjust="spacingAndGlyphs">300</text>
<text x="275.7" y="781" style="white-space:pre" textLength="171.9" lengthAdjust="spacingAndGlyphs">Temperature, Dewpoint  [ °C]</text>
<text x="306.7" y="819" style="white-space:pre" textLength="107.0" lengthAdjust="spacingAndGlyphs">Windspeed  [ knt]</text>
<text x="292.2" y="856.5" style="white-space:pre" textLength="137.3" lengthAdjust="spacingAndGlyphs">CAPE, CINH * 5  [ J/kg]</text>
<text x="259.9" y="893" style="white-space:pre" textLength="203.5" lengthAdjust="spacingAndGlyphs">Storm Relative Helicity  [ m^2/s^2]</text>
</g>
<g fill="#fff" font-size="16" font-weight="bold">
<text x="62.5" y="29" textLength="241" lengthAdjust="spacingAndGlyphs">Station: 06610 Payerne (LSMP)</text>
<text x="329.5" y="29" textLength="128" lengthAdjust="spacingAndGlyphs">Date: 22.06.2022</text>
<text x="481" y="29" textLength="90" lengthAdjust="spacingAndGlyphs">Time: 1200Z</text>
</g>
<g font-size="13">
<g fill="#fff" font-size="14">
<g text-decoration="underline">
<text transform="translate(894,40) scale(0.9286,1)" >Parameter</text>
<text transform="translate(894,104) scale(0.9286,1)" >Parcels: Using 50mB mean layer LCL + CCL</text>
<text transform="translate(894,355) scale(0.9286,1)" >Convective Indices</text>
<text transform="translate(894,605) scale(0.9286,1)" >Wind Parameters</text>
<text transform="translate(1124,40) scale(0.9286,1)" text-anchor="end">Value LCL</text>
<text transform="translate(1214,40) scale(0.9286,1)" text-anchor="end">Value CCL</text>
<text transform="translate(1230.5,40) scale(0.9286,1)" >Unit</text>
</g>
<text transform="translate(894,63) scale(0.9286,1)" >Convective Temperature:</text>
<text transform="translate(1124,63) scale(0.9286,1)" fill="#ffff00" text-anchor="end">21.44</text>
<text transform="translate(1230.5,63) scale(0.9286,1)" >[°C]</text>
<text transform="translate(894,80) scale(0.9286,1)" >Snowfall Height:</text>
<text transform="translate(1124,80) scale(0.9286,1)" fill="#ffffff" text-anchor="end">3466.75</text>
<text transform="translate(1230.5,80) scale(0.9286,1)" >[m]</text>
<text transform="translate(894,125) scale(0.9286,1)" >Lifted Index:</text>
<text transform="translate(1124,125) scale(0.9286,1)" fill="#ff0000" text-anchor="end">-3.44</text>
<text transform="translate(1214,125) scale(0.9286,1)" fill="#ff0000" text-anchor="end">-3.73</text>
<text transform="translate(1230.5,125) scale(0.9286,1)" >[°C]</text>
<text transform="translate(894,142) scale(0.9286,1)" >CAPE ML:</text>
<text transform="translate(1124,142) scale(0.9286,1)" fill="#ff0000" text-anchor="end">692.14</text>
<text transform="translate(1214,142) scale(0.9286,1)" fill="#ff0000" text-anchor="end">813.10</text>
<text transform="translate(1230.5,142) scale(0.9286,1)" >[J/kg]</text>
<text transform="translate(894,159) scale(0.9286,1)" >CINH | LSI (Inversion: 822mB):</text>
<text transform="translate(1124,159) scale(0.9286,1)" fill="#ff0000" text-anchor="end">12.18</text>
<text transform="translate(1124,159) scale(0.9286,1)" >,</text>
<text transform="translate(1136,159) scale(0.9286,1)" style="white-space:pre"><tspan fill="#ff0000">-0.59</tspan></text>
<text transform="translate(1230.5,159) scale(0.9286,1)" >[J/kg], [°C]</text>
<text transform="translate(894,176) scale(0.9286,1)" >CAPE SFC:</text>
<text transform="translate(1124,176) scale(0.9286,1)" fill="#ff0000" text-anchor="end">1735.06</text>
<text transform="translate(1214,176) scale(0.9286,1)" fill="#ff0000" text-anchor="end">1269.74</text>
<text transform="translate(1230.5,176) scale(0.9286,1)" >[J/kg]</text>
<text transform="translate(894,193) scale(0.9286,1)" >CAPE MU | CINH MU:</text>
<text transform="translate(1124,193) scale(0.9286,1)" fill="#ff0000" text-anchor="end">1735.06</text>
<text transform="translate(1124,193) scale(0.9286,1)" >,</text>
<text transform="translate(1136,193) scale(0.9286,1)" style="white-space:pre"><tspan fill="#ff0000">0.00</tspan></text>
<text transform="translate(1230.5,193) scale(0.9286,1)" >[J/kg]</text>
<text transform="translate(894,210) scale(0.9286,1)" >3km SFC CAPE | IL CAPE:</text>
<text transform="translate(1124,210) scale(0.9286,1)" fill="#ff0000" text-anchor="end">180.62</text>
<text transform="translate(1124,210) scale(0.9286,1)" >,</text>
<text transform="translate(1136,210) scale(0.9286,1)" style="white-space:pre"><tspan fill="#ffff00">468.26</tspan></text>
<text transform="translate(1230.5,210) scale(0.9286,1)" >[J/kg]</text>
<text transform="translate(894,227) scale(0.9286,1)" >DCAPE (LFS = 500mB):</text>
<text transform="translate(1124,227) scale(0.9286,1)" fill="#ffff00" text-anchor="end">338.95</text>
<text transform="translate(1230.5,227) scale(0.9286,1)" >[J/kg]</text>
<text transform="translate(894,244) scale(0.9286,1)" >850-600 Lapse Rate:</text>
<text transform="translate(1124,244) scale(0.9286,1)" fill="#ffff00" text-anchor="end">16.48</text>
<text transform="translate(1230.5,244) scale(0.9286,1)" >[°C]</text>
<text transform="translate(894,261) scale(0.9286,1)" >FM Hail Size | SHIP | LHP:</text>
<text transform="translate(1124,261) scale(0.9286,1)" fill="#ffff00" text-anchor="end">1.3 - 1.9</text>
<text transform="translate(1124,261) scale(0.9286,1)" >,</text>
<text transform="translate(1136,261) scale(0.9286,1)" style="white-space:pre"><tspan fill="#ff0000">1.48</tspan><tspan fill="#fff">,  </tspan><tspan fill="#ffff00">5.75</tspan></text>
<text transform="translate(1230.5,261) scale(0.9286,1)" >[cm], [1], [1]</text>
<text transform="translate(894,278) scale(0.9286,1)" >Estofex Exp. Hail Param:</text>
<text transform="translate(1124,278) scale(0.9286,1)" fill="#ff0000" text-anchor="end">3.15</text>
<text transform="translate(1230.5,278) scale(0.9286,1)" >[cm]</text>
<text transform="translate(894,295) scale(0.9286,1)" >Max. Hail Size (OLD, MU, IL):</text>
<text transform="translate(1124,295) scale(0.9286,1)" fill="#ffff00" text-anchor="end">2.49</text>
<text transform="translate(1124,295) scale(0.9286,1)" >,</text>
<text transform="translate(1136,295) scale(0.9286,1)" style="white-space:pre"><tspan fill="#ff0000">4.00</tspan><tspan fill="#fff">,  </tspan><tspan fill="#ff0000">3.31</tspan></text>
<text transform="translate(1230.5,295) scale(0.9286,1)" >[cm]</text>
<text transform="translate(894,315) scale(0.9286,1)" >LCL / CCL (AGL):</text>
<text transform="translate(1124,315) scale(0.9286,1)" fill="#ff0000" text-anchor="end">466.49</text>
<text transform="translate(1214,315) scale(0.9286,1)" fill="#ff0000" text-anchor="end">540.61</text>
<text transform="translate(1230.5,315) scale(0.9286,1)" >[m]</text>
<text transform="translate(894,332) scale(0.9286,1)" >Convective Height:</text>
<text transform="translate(1124,332) scale(0.9286,1)" fill="#ff0000" text-anchor="end">10.09</text>
<text transform="translate(1214,332) scale(0.9286,1)" fill="#ff0000" text-anchor="end">10.14</text>
<text transform="translate(1230.5,332) scale(0.9286,1)" >[km]</text>
<text transform="translate(894,376) scale(0.9286,1)" >Showalter Index:</text>
<text transform="translate(1124,376) scale(0.9286,1)" fill="#ff0000" text-anchor="end">0.14</text>
<text transform="translate(1230.5,376) scale(0.9286,1)" >[°C]</text>
<text transform="translate(894,393) scale(0.9286,1)" >Modified Thompson Index:</text>
<text transform="translate(1124,393) scale(0.9286,1)" fill="#ff0000" text-anchor="end">43.65</text>
<text transform="translate(1230.5,393) scale(0.9286,1)" >[°C]</text>
<text transform="translate(894,410) scale(0.9286,1)" >Total Totals Index:</text>
<text transform="translate(1124,410) scale(0.9286,1)" fill="#ff0000" text-anchor="end">48.50</text>
<text transform="translate(1230.5,410) scale(0.9286,1)" >[°C]</text>
<text transform="translate(894,427) scale(0.9286,1)" >KO Index:</text>
<text transform="translate(1124,427) scale(0.9286,1)" fill="#ff0000" text-anchor="end">-12.31</text>
<text transform="translate(1230.5,427) scale(0.9286,1)" >[1]</text>
<text transform="translate(894,444) scale(0.9286,1)" >Craven SigSvr / 1000:</text>
<text transform="translate(1124,444) scale(0.9286,1)" fill="#ff0000" text-anchor="end">12.34</text>
<text transform="translate(1230.5,444) scale(0.9286,1)" >[m^3/s^3]</text>
<text transform="translate(894,461) scale(0.9286,1)" >SCP RM (new, old):</text>
<text transform="translate(1124,461) scale(0.9286,1)" fill="#ff0000" text-anchor="end">1.34</text>
<text transform="translate(1124,461) scale(0.9286,1)" >,</text>
<text transform="translate(1136,461) scale(0.9286,1)" style="white-space:pre"><tspan fill="#ff0000">8.68</tspan></text>
<text transform="translate(1230.5,461) scale(0.9286,1)" >[1]</text>
<text transform="translate(894,478) scale(0.9286,1)" >STP (new, old):</text>
<text transform="translate(1124,478) scale(0.9286,1)" fill="#ff0000" text-anchor="end">0.18</text>
<text transform="translate(1124,478) scale(0.9286,1)" >,</text>
<text transform="translate(1136,478) scale(0.9286,1)" style="white-space:pre"><tspan fill="#ff0000">0.53</tspan></text>
<text transform="translate(1230.5,478) scale(0.9286,1)" >[1]</text>
<text transform="translate(894,495) scale(0.9286,1)" >SB STP (fix) | CWASP:</text>
<text transform="translate(1124,495) scale(0.9286,1)" fill="#ff0000" text-anchor="end">1.45</text>
<text transform="translate(1124,495) scale(0.9286,1)" >,</text>
<text transform="translate(1136,495) scale(0.9286,1)" style="white-space:pre"><tspan fill="#ffff00">64.65</tspan></text>
<text transform="translate(1230.5,495) scale(0.9286,1)" >[1], [%]</text>
<text transform="translate(894,512) scale(0.9286,1)" >DCP | MMP | MSP:</text>
<text transform="translate(1124,512) scale(0.9286,1)" fill="#ff0000" text-anchor="end">0.76</text>
<text transform="translate(1124,512) scale(0.9286,1)" >,</text>
<text transform="translate(1136,512) scale(0.9286,1)" style="white-space:pre"><tspan fill="#ff0000">88.20</tspan><tspan fill="#fff">,  </tspan><tspan fill="#00ff00">47.03</tspan></text>
<text transform="translate(1230.5,512) scale(0.9286,1)" >[1], [%], [%]</text>
<text transform="translate(894,529) scale(0.9286,1)" >MB Comp | SHERBE:</text>
<text transform="translate(1124,529) scale(0.9286,1)" fill="#00ff00" text-anchor="end">0.00</text>
<text transform="translate(1124,529) scale(0.9286,1)" >,</text>
<text transform="translate(1136,529) scale(0.9286,1)" style="white-space:pre"><tspan fill="#ffff00">0.99</tspan></text>
<text transform="translate(1230.5,529) scale(0.9286,1)" >[1], [1]</text>
<text transform="translate(894,546) scale(0.9286,1)" >Exp. Supercell Index CH:</text>
<text transform="translate(1124,546) scale(0.9286,1)" fill="#ff0000" text-anchor="end">2.48</text>
<text transform="translate(1230.5,546) scale(0.9286,1)" >[1]</text>
<text transform="translate(894,563) scale(0.9286,1)" >SWISS 12 Index:</text>
<text transform="translate(1124,563) scale(0.9286,1)" fill="#ff0000" text-anchor="end">-15.06</text>
<text transform="translate(1230.5,563) scale(0.9286,1)" >[1]</text>
<text transform="translate(894,580) scale(0.9286,1)" >Precipitable Water:</text>
<text transform="translate(1124,580) scale(0.9286,1)" fill="#ff0000" text-anchor="end">32.30</text>
<text transform="translate(1230.5,580) scale(0.9286,1)" >[mm]</text>
<text transform="translate(894,625) scale(0.9286,1)" >Storm Direction | Motion:</text>
<text transform="translate(1124,625) scale(0.9286,1)" fill="#ffffff" text-anchor="end">257.07</text>
<text transform="translate(1124,625) scale(0.9286,1)" >,</text>
<text transform="translate(1136,625) scale(0.9286,1)" style="white-space:pre"><tspan fill="#ffff00">22.44</tspan></text>
<text transform="translate(1230.5,625) scale(0.9286,1)" >[°], [knt]</text>
<text transform="translate(894,642) scale(0.9286,1)" >500m Critical Angle:</text>
<text transform="translate(1124,642) scale(0.9286,1)" fill="#ffff00" text-anchor="end">104.03</text>
<text transform="translate(1230.5,642) scale(0.9286,1)" >[°]</text>
<text transform="translate(894,662) scale(0.9286,1)" >SR Wind Sfc-2km:</text>
<text transform="translate(1124,662) scale(0.9286,1)" fill="#ff0000" text-anchor="end">16.10</text>
<text transform="translate(1230.5,662) scale(0.9286,1)" >[knt]</text>
<text transform="translate(894,679) scale(0.9286,1)" >SR Wind 4km-6km:</text>
<text transform="translate(1124,679) scale(0.9286,1)" fill="#00ff00" text-anchor="end">11.24</text>
<text transform="translate(1230.5,679) scale(0.9286,1)" >[knt]</text>
<text transform="translate(894,696) scale(0.9286,1)" >SR Wind 9km-11km:</text>
<text transform="translate(1124,696) scale(0.9286,1)" fill="#ff0000" text-anchor="end">34.92</text>
<text transform="translate(1230.5,696) scale(0.9286,1)" >[knt] HP</text>
<text transform="translate(894,716) scale(0.9286,1)" >Effective Shear 6000:</text>
<text transform="translate(1124,716) scale(0.9286,1)" fill="#ff0000" text-anchor="end">34.66</text>
<text transform="translate(1230.5,716) scale(0.9286,1)" >[knt]</text>
<text transform="translate(894,736) scale(0.9286,1)" >Bulk Richardson Number:</text>
<text transform="translate(1124,736) scale(0.9286,1)" fill="#ffff00" text-anchor="end">9.07</text>
<text transform="translate(1214,736) scale(0.9286,1)" fill="#ff0000" text-anchor="end">10.66</text>
<text transform="translate(1230.5,736) scale(0.9286,1)" >[1]</text>
<text transform="translate(894,756) scale(0.9286,1)" >3km Effective SRH:</text>
<text transform="translate(1124,756) scale(0.9286,1)" fill="#ff0000" text-anchor="end">262.40</text>
<text transform="translate(1230.5,756) scale(0.9286,1)" >[m^2/s^2]</text>
<text transform="translate(894,773) scale(0.9286,1)" >Max 3km SRH (0-2km) | AGL:</text>
<text transform="translate(1124,773) scale(0.9286,1)" fill="#ff0000" text-anchor="end">308.64</text>
<text transform="translate(1124,773) scale(0.9286,1)" >,</text>
<text transform="translate(1136,773) scale(0.9286,1)" style="white-space:pre"><tspan fill="#ff0000">279.00</tspan></text>
<text transform="translate(1230.5,773) scale(0.9286,1)" >[m^2/s^2], [m]</text>
<text transform="translate(894,793) scale(0.9286,1)" >3km Energy Helicity Index:</text>
<text transform="translate(1124,793) scale(0.9286,1)" fill="#ff0000" text-anchor="end">1.14</text>
<text transform="translate(1214,793) scale(0.9286,1)" fill="#ff0000" text-anchor="end">1.33</text>
<text transform="translate(1230.5,793) scale(0.9286,1)" >[1]</text>
<text transform="translate(894,810) scale(0.9286,1)" >3km Vorticity Gen. Pot.:</text>
<text transform="translate(1124,810) scale(0.9286,1)" fill="#00ff00" text-anchor="end">0.15</text>
<text transform="translate(1214,810) scale(0.9286,1)" fill="#ff0000" text-anchor="end">0.16</text>
<text transform="translate(1230.5,810) scale(0.9286,1)" >[m/s^2]</text>
</g>
</g>
<g font-size="13" shape-rendering="crispEdges">
<rect x="729" y="827" width="15" height="8" fill="#ff0000"/>
<text transform="translate(753,835.5) scale(0.9286,1)" font-size="14" fill="#ff0000">Temperature Profile</text>
<rect x="729" y="847" width="15" height="8" fill="#00ffff"/>
<text transform="translate(753,855.5) scale(0.9286,1)" font-size="14" fill="#00ffff">Dewpoint Profile</text>
<rect x="729" y="867" width="15" height="8" fill="#00ff00"/>
<text transform="translate(753,875.5) scale(0.9286,1)" font-size="14" fill="#00ff00">OBS Windspeed Profile</text>
<rect x="729" y="887" width="15" height="8" fill="#ff0080"/>
<text transform="translate(753,895.5) scale(0.9286,1)" font-size="14" fill="#ff0080">SR Windspeed Profile</text>
<rect x="729" y="907" width="15" height="8" fill="#c0c000"/>
<text transform="translate(753,915.5) scale(0.9286,1)" font-size="14" fill="#c0c000">Sfc-3km Storm Relative Helicity Profile</text>
<rect x="729" y="927" width="15" height="8" fill="#403e00"/>
<text transform="translate(753,935.5) scale(0.9286,1)" font-size="14" fill="#403e00">Effective Layer (CAPE &gt;= 100 J/kg)</text>
<rect x="1079" y="827" width="15" height="8" fill="#00ff00"/>
<text transform="translate(1103.5,835.5) scale(0.9286,1)" font-size="14" fill="#00ff00">No / Non Severe Thunderstorms</text>
<rect x="1079" y="847" width="15" height="8" fill="#ffff00"/>
<text transform="translate(1103.5,855.5) scale(0.9286,1)" font-size="14" fill="#ffff00">Scattered / Moderate Thunderstorms</text>
<rect x="1079" y="867" width="15" height="8" fill="#ff0000"/>
<text transform="translate(1103.5,875.5) scale(0.9286,1)" font-size="14" fill="#ff0000">Widespread / Severe Thunderstorms</text>
</g>
<g shape-rendering="crispEdges">
<line x1="761.5" y1="40" x2="761.5" y2="770" stroke="#00ff00"/>
<line x1="826.5" y1="40" x2="826.5" y2="770" stroke="#ff0080"/>
</g>
<text x="747" y="32" fill="#00ff00" font-size="13" font-weight="bold" textLength="28" lengthAdjust="spacingAndGlyphs">OBS</text>
<text x="818.5" y="32" fill="#ff0080" font-size="13" font-weight="bold" textLength="17" lengthAdjust="spacingAndGlyphs">SR</text>
<g stroke="#ffffff" stroke-width="1" shape-rendering="crispEdges">
<line x1="761.5" y1="58.5" x2="739.5" y2="78.5"/>
<line x1="761.5" y1="90.5" x2="735.5" y2="103.5"/>
<line x1="761.5" y1="124.5" x2="735.5" y2="137.5"/>
<line x1="761.5" y1="176.5" x2="738.5" y2="193.5"/>
<line x1="761.5" y1="187.5" x2="742.5" y2="209.5"/>
<line x1="761.5" y1="206.5" x2="735.5" y2="219.5"/>
<line x1="761.5" y1="208.5" x2="735.5" y2="221.5"/>
<line x1="761.5" y1="218.5" x2="737.5" y2="233.5"/>
<line x1="761.5" y1="250.5" x2="744.5" y2="273.5"/>
<line x1="761.5" y1="277.5" x2="739.5" y2="295.5"/>
<line x1="761.5" y1="288.5" x2="737.5" y2="303.5"/>
<line x1="761.5" y1="321.5" x2="740.5" y2="340.5"/>
<line x1="761.5" y1="341.5" x2="743.5" y2="363.5"/>
<line x1="761.5" y1="351.5" x2="745.5" y2="375.5"/>
<line x1="761.5" y1="359.5" x2="746.5" y2="383.5"/>
<line x1="761.5" y1="390.5" x2="744.5" y2="418.5"/>
<line x1="761.5" y1="394.5" x2="744.5" y2="418.5"/>
<line x1="761.5" y1="439.5" x2="747.5" y2="464.5"/>
<line x1="761.5" y1="449.5" x2="745.5" y2="473.5"/>
<line x1="761.5" y1="482.5" x2="744.5" y2="505.5"/>
<line x1="761.5" y1="500.5" x2="744.5" y2="522.5"/>
<line x1="761.5" y1="504.5" x2="745.5" y2="528.5"/>
<line x1="761.5" y1="529.5" x2="738.5" y2="550.5"/>
<line x1="761.5" y1="534.5" x2="736.5" y2="550.5"/>
<line x1="761.5" y1="541.5" x2="735.5" y2="555.5"/>
<line x1="761.5" y1="546.5" x2="734.5" y2="556.5"/>
<line x1="761.5" y1="567.5" x2="737.5" y2="583.5"/>
<line x1="761.5" y1="572.5" x2="737.5" y2="587.5"/>
<line x1="761.5" y1="576.5" x2="737.5" y2="591.5"/>
<line x1="761.5" y1="584.5" x2="740.5" y2="603.5"/>
<line x1="761.5" y1="589.5" x2="741.5" y2="609.5"/>
<line x1="761.5" y1="600.5" x2="737.5" y2="616.5"/>
<line x1="761.5" y1="604.5" x2="736.5" y2="619.5"/>
<line x1="761.5" y1="607.5" x2="735.5" y2="620.5"/>
<line x1="761.5" y1="641.5" x2="736.5" y2="654.5"/>
<line x1="761.5" y1="646.5" x2="735.5" y2="661.5"/>
<line x1="761.5" y1="647.5" x2="735.5" y2="661.5"/>
<line x1="761.5" y1="655.5" x2="739.5" y2="678.5"/>
<line x1="761.5" y1="659.5" x2="741.5" y2="677.5"/>
<line x1="761.5" y1="664.5" x2="733.5" y2="673.5"/>
<line x1="761.5" y1="672.5" x2="733.5" y2="679.5"/>
<line x1="761.5" y1="677.5" x2="738.5" y2="693.5"/>
<line x1="761.5" y1="684.5" x2="739.5" y2="701.5"/>
<line x1="761.5" y1="689.5" x2="745.5" y2="709.5"/>
<line x1="761.5" y1="701.5" x2="748.5" y2="729.5"/>
<line x1="761.5" y1="704.5" x2="787.5" y2="707.5"/>
<line x1="761.5" y1="731.5" x2="756.5" y2="695.5"/>
<line x1="761.5" y1="731.5" x2="741.5" y2="707.5"/>
<line x1="761.5" y1="731.5" x2="739.5" y2="712.5"/>
<line x1="761.5" y1="731.5" x2="732.5" y2="729.5"/>
<line x1="761.5" y1="704.5" x2="766.5" y2="735.5"/>
<line x1="761.5" y1="704.5" x2="773.5" y2="735.5"/>
<line x1="826.5" y1="58.5" x2="856.5" y2="56.5"/>
<line x1="826.5" y1="90.5" x2="855.5" y2="84.5"/>
<line x1="826.5" y1="124.5" x2="856.5" y2="123.5"/>
<line x1="826.5" y1="176.5" x2="834.5" y2="204.5"/>
<line x1="826.5" y1="187.5" x2="841.5" y2="211.5"/>
<line x1="826.5" y1="206.5" x2="816.5" y2="245.5"/>
<line x1="826.5" y1="208.5" x2="820.5" y2="238.5"/>
<line x1="826.5" y1="218.5" x2="827.5" y2="236.5"/>
<line x1="826.5" y1="250.5" x2="825.5" y2="280.5"/>
<line x1="826.5" y1="277.5" x2="817.5" y2="304.5"/>
<line x1="826.5" y1="288.5" x2="809.5" y2="310.5"/>
<line x1="826.5" y1="321.5" x2="813.5" y2="346.5"/>
<line x1="826.5" y1="341.5" x2="815.5" y2="368.5"/>
<line x1="826.5" y1="351.5" x2="820.5" y2="379.5"/>
<line x1="826.5" y1="359.5" x2="821.5" y2="388.5"/>
<line x1="826.5" y1="390.5" x2="822.5" y2="424.5"/>
<line x1="826.5" y1="439.5" x2="821.5" y2="478.5"/>
<line x1="826.5" y1="449.5" x2="822.5" y2="478.5"/>
<line x1="826.5" y1="482.5" x2="817.5" y2="510.5"/>
<line x1="826.5" y1="500.5" x2="819.5" y2="527.5"/>
<line x1="826.5" y1="504.5" x2="820.5" y2="532.5"/>
<line x1="826.5" y1="529.5" x2="816.5" y2="561.5"/>
<line x1="826.5" y1="546.5" x2="802.5" y2="561.5"/>
<line x1="826.5" y1="541.5" x2="805.5" y2="561.5"/>
<line x1="826.5" y1="567.5" x2="814.5" y2="593.5"/>
<line x1="826.5" y1="572.5" x2="816.5" y2="603.5"/>
<line x1="826.5" y1="584.5" x2="831.5" y2="630.5"/>
<line x1="826.5" y1="600.5" x2="848.5" y2="619.5"/>
<line x1="826.5" y1="600.5" x2="830.5" y2="636.5"/>
<line x1="826.5" y1="598.5" x2="833.5" y2="634.5"/>
<line x1="826.5" y1="641.5" x2="807.5" y2="661.5"/>
<line x1="826.5" y1="646.5" x2="806.5" y2="668.5"/>
<line x1="826.5" y1="655.5" x2="806.5" y2="669.5"/>
<line x1="826.5" y1="664.5" x2="800.5" y2="678.5"/>
<line x1="826.5" y1="672.5" x2="799.5" y2="683.5"/>
<line x1="826.5" y1="684.5" x2="813.5" y2="709.5"/>
<line x1="826.5" y1="665.5" x2="833.5" y2="686.5"/>
<line x1="826.5" y1="700.5" x2="835.5" y2="706.5"/>
<line x1="826.5" y1="709.5" x2="855.5" y2="708.5"/>
<line x1="826.5" y1="709.5" x2="855.5" y2="714.5"/>
<line x1="826.5" y1="720.5" x2="855.5" y2="712.5"/>
<line x1="826.5" y1="723.5" x2="855.5" y2="722.5"/>
<line x1="826.5" y1="730.5" x2="855.5" y2="722.5"/>
<line x1="826.5" y1="709.5" x2="848.5" y2="719.5"/>
</g>
<g clip-path="url(#pc)" shape-rendering="crispEdges">
<path d="M95.0 58.5h5M97.5 56.0v5 M77.0 90.5h5M79.5 88.0v5 M119.0 124.5h5M121.5 122.0v5 M203.0 176.5h5M205.5 174.0v5 M191.0 187.5h5M193.5 185.0v5 M202.0 206.5h5M204.5 204.0v5 M209.0 208.5h5M211.5 206.0v5 M245.0 218.5h5M247.5 216.0v5 M299.0 250.5h5M301.5 248.0v5 M275.0 277.5h5M277.5 275.0v5 M305.0 288.5h5M307.5 286.0v5 M365.0 321.5h5M367.5 319.0v5 M407.0 341.5h5M409.5 339.0v5 M382.0 351.5h5M384.5 349.0v5 M377.0 359.5h5M379.5 357.0v5 M317.0 390.5h5M319.5 388.0v5 M322.0 394.5h5M324.5 392.0v5 M329.0 395.5h5M331.5 393.0v5 M347.0 439.5h5M349.5 437.0v5 M353.0 449.5h5M355.5 447.0v5 M413.0 482.5h5M415.5 480.0v5 M395.0 500.5h5M397.5 498.0v5 M395.0 504.5h5M397.5 502.0v5 M282.0 529.5h5M284.5 527.0v5 M251.0 534.5h5M253.5 532.0v5 M278.0 540.5h5M280.5 538.0v5 M281.0 540.5h5M283.5 538.0v5 M263.0 546.5h5M265.5 544.0v5 M263.0 567.5h5M265.5 565.0v5 M251.0 572.5h5M253.5 570.0v5 M257.0 575.5h5M259.5 573.0v5 M227.0 583.5h5M229.5 581.0v5 M233.0 585.5h5M235.5 583.0v5 M257.0 590.5h5M259.5 588.0v5 M172.0 600.5h5M174.5 598.0v5 M203.0 604.5h5M205.5 602.0v5 M197.0 607.5h5M199.5 605.0v5 M311.0 640.5h5M313.5 638.0v5 M299.0 645.5h5M301.5 643.0v5 M281.0 647.5h5M283.5 645.0v5 M269.0 648.5h5M271.5 646.0v5 M251.0 654.5h5M253.5 652.0v5 M208.0 658.5h5M210.5 656.0v5 M221.0 660.5h5M223.5 658.0v5 M227.0 665.5h5M229.5 663.0v5 M233.0 665.5h5M235.5 663.0v5 M251.0 670.5h5M253.5 668.0v5 M215.0 676.5h5M217.5 674.0v5 M305.0 683.5h5M307.5 681.0v5 M275.0 688.5h5M277.5 686.0v5 M134.0 706.5h5M136.5 704.0v5 M112.0 707.5h5M114.5 705.0v5 M96.0 708.5h5M98.5 706.0v5 M86.0 709.5h5M88.5 707.0v5 M67.0 719.5h5M69.5 717.0v5 M66.0 721.5h5M68.5 719.0v5 M72.0 722.5h5M74.5 720.0v5 M83.0 725.5h5M85.5 723.0v5 M71.0 726.5h5M73.5 724.0v5 M64.0 729.5h5M66.5 727.0v5 M163.0 58.5h5M165.5 56.0v5 M176.0 90.5h5M178.5 88.0v5 M136.0 124.5h5M138.5 122.0v5 M115.0 176.5h5M117.5 174.0v5 M142.0 187.5h5M144.5 185.0v5 M91.0 206.5h5M93.5 204.0v5 M92.0 208.5h5M94.5 206.0v5 M134.0 218.5h5M136.5 216.0v5 M221.0 250.5h5M223.5 248.0v5 M171.0 277.5h5M173.5 275.0v5 M187.0 288.5h5M189.5 286.0v5 M258.0 321.5h5M260.5 319.0v5 M313.0 341.5h5M315.5 339.0v5 M303.0 351.5h5M305.5 349.0v5 M301.0 359.5h5M303.5 357.0v5 M243.0 390.5h5M245.5 388.0v5 M246.0 394.5h5M248.5 392.0v5 M249.0 395.5h5M251.5 393.0v5 M279.0 439.5h5M281.5 437.0v5 M275.0 449.5h5M277.5 447.0v5 M324.0 482.5h5M326.5 480.0v5 M310.0 500.5h5M312.5 498.0v5 M312.0 504.5h5M314.5 502.0v5 M180.0 529.5h5M182.5 527.0v5 M141.0 534.5h5M143.5 532.0v5 M156.0 540.5h5M158.5 538.0v5 M131.0 546.5h5M133.5 544.0v5 M151.0 567.5h5M153.5 565.0v5 M143.0 572.5h5M145.5 570.0v5 M148.0 574.5h5M150.5 572.0v5 M146.0 583.5h5M148.5 581.0v5 M156.0 585.5h5M158.5 583.0v5 M170.0 590.5h5M172.5 588.0v5 M109.0 599.5h5M111.5 597.0v5 M113.0 604.5h5M115.5 602.0v5 M99.0 604.5h5M101.5 602.0v5 M90.0 606.5h5M92.5 604.0v5 M188.0 640.5h5M190.5 638.0v5 M180.0 645.5h5M182.5 643.0v5 M143.0 648.5h5M145.5 646.0v5 M172.0 654.5h5M174.5 652.0v5 M125.0 658.5h5M127.5 656.0v5 M131.0 660.5h5M133.5 658.0v5 M99.0 665.5h5M101.5 663.0v5 M93.0 665.5h5M95.5 663.0v5 M118.0 671.5h5M120.5 669.0v5 M124.0 676.5h5M126.5 674.0v5 M198.0 683.5h5M200.5 681.0v5 M199.0 688.5h5M201.5 686.0v5 M186.0 694.5h5M188.5 692.0v5 M175.0 700.5h5M177.5 698.0v5 M165.0 703.5h5M167.5 701.0v5 M169.0 704.5h5M171.5 702.0v5 M190.0 706.5h5M192.5 704.0v5 M202.0 708.5h5M204.5 706.0v5 M200.0 719.5h5M202.5 717.0v5 M198.0 722.5h5M200.5 720.0v5 M189.0 731.5h5M191.5 729.0v5 M182.0 731.5h5M184.5 729.0v5 M524.0 58.5h5M526.5 56.0v5 M497.0 90.5h5M499.5 88.0v5 M464.0 124.5h5M466.5 122.0v5 M416.0 176.5h5M418.5 174.0v5 M406.0 187.5h5M408.5 185.0v5 M391.0 206.5h5M393.5 204.0v5 M387.0 208.5h5M389.5 206.0v5 M380.0 218.5h5M382.5 216.0v5 M383.0 250.5h5M385.5 248.0v5 M369.0 277.5h5M371.5 275.0v5 M366.0 288.5h5M368.5 286.0v5 M356.0 321.5h5M358.5 319.0v5 M350.0 341.5h5M352.5 339.0v5 M345.0 351.5h5M347.5 349.0v5 M351.0 359.5h5M353.5 357.0v5 M349.0 390.5h5M351.5 388.0v5 M355.0 394.5h5M357.5 392.0v5 M311.0 439.5h5M313.5 437.0v5 M319.0 482.5h5M321.5 480.0v5 M307.0 499.5h5M309.5 497.0v5 M296.0 503.5h5M298.5 501.0v5 M284.0 528.5h5M286.5 526.0v5 M285.0 534.5h5M287.5 532.0v5 M280.0 540.5h5M282.5 538.0v5 M276.0 546.5h5M278.5 544.0v5 M290.0 567.5h5M292.5 565.0v5 M355.0 572.5h5M357.5 570.0v5 M282.0 575.5h5M284.5 573.0v5 M382.0 583.5h5M384.5 581.0v5 M418.0 585.5h5M420.5 583.0v5 M430.0 590.5h5M432.5 588.0v5 M383.0 600.5h5M385.5 598.0v5 M368.0 604.5h5M370.5 602.0v5 M334.0 606.5h5M336.5 604.0v5 M434.0 640.5h5M436.5 638.0v5 M435.0 645.5h5M437.5 643.0v5 M441.0 647.5h5M443.5 645.0v5 M437.0 654.5h5M439.5 652.0v5 M439.0 660.5h5M441.5 658.0v5 M439.0 665.5h5M441.5 663.0v5 M445.0 671.5h5M447.5 669.0v5 M449.0 676.5h5M451.5 674.0v5 M449.0 683.5h5M451.5 681.0v5 M459.0 688.5h5M461.5 686.0v5 M452.0 698.5h5M454.5 696.0v5 M452.0 703.5h5M454.5 701.0v5 M451.0 706.5h5M453.5 704.0v5 M455.0 710.5h5M457.5 708.0v5 M476.0 719.5h5M478.5 717.0v5 M472.0 730.5h5M474.5 728.0v5 M478.0 730.5h5M480.5 728.0v5 M639.0 124.5h5M641.5 122.0v5 M587.0 176.5h5M589.5 174.0v5 M576.0 187.5h5M578.5 185.0v5 M570.0 206.5h5M572.5 204.0v5 M563.0 208.5h5M565.5 206.0v5 M556.0 218.5h5M558.5 216.0v5 M505.0 250.5h5M507.5 248.0v5 M475.0 277.5h5M477.5 275.0v5 M468.0 288.5h5M470.5 286.0v5 M447.0 321.5h5M449.5 319.0v5 M434.0 341.5h5M436.5 339.0v5 M429.0 351.5h5M431.5 349.0v5 M421.0 359.5h5M423.5 357.0v5 M411.0 390.5h5M413.5 388.0v5 M409.0 394.5h5M411.5 392.0v5 M418.0 439.5h5M420.5 437.0v5 M419.0 449.5h5M421.5 447.0v5 M422.0 482.5h5M424.5 480.0v5 M431.0 500.5h5M433.5 498.0v5 M431.0 503.5h5M433.5 501.0v5 M431.0 531.5h5M433.5 529.0v5 M433.0 534.5h5M435.5 532.0v5 M435.0 540.5h5M437.5 538.0v5 M435.0 546.5h5M437.5 544.0v5 M442.0 567.5h5M444.5 565.0v5 M440.0 572.5h5M442.5 570.0v5 M440.0 575.5h5M442.5 573.0v5 M439.0 583.5h5M441.5 581.0v5 M440.0 586.5h5M442.5 584.0v5 M441.0 590.5h5M443.5 588.0v5 M449.0 600.5h5M451.5 598.0v5 M451.0 604.5h5M453.5 602.0v5 M452.0 607.5h5M454.5 605.0v5 M457.0 631.5h5M459.5 629.0v5 M460.0 639.5h5M462.5 637.0v5 M461.0 645.5h5M463.5 643.0v5 M456.0 647.5h5M458.5 645.0v5 M459.0 654.5h5M461.5 652.0v5 M461.0 660.5h5M463.5 658.0v5 M462.0 665.5h5M464.5 663.0v5 M463.0 671.5h5M465.5 669.0v5 M467.0 676.5h5M469.5 674.0v5 M467.0 682.5h5M469.5 680.0v5 M466.0 688.5h5M468.5 686.0v5 M474.0 694.5h5M476.5 692.0v5 M478.0 700.5h5M480.5 698.0v5 M478.0 708.5h5M480.5 706.0v5 M476.0 718.5h5M478.5 716.0v5 M490.0 730.5h5M492.5 728.0v5 M63.0 688.5h5M65.5 686.0v5 M60.0 700.5h5M62.5 698.0v5 M59.0 709.5h5M61.5 707.0v5 M229.0 719.5h5M231.5 717.0v5 M274.0 709.5h5M276.5 707.0v5 M324.0 706.5h5M326.5 704.0v5 M396.0 703.5h5M398.5 701.0v5 M466.0 694.5h5M468.5 692.0v5 M544.0 688.5h5M546.5 686.0v5 M635.0 683.5h5M637.5 681.0v5 M580.0 676.5h5M582.5 674.0v5 M621.0 671.5h5M623.5 669.0v5 M620.0 664.5h5M622.5 662.0v5 M593.0 661.5h5M595.5 659.0v5 M587.0 658.5h5M589.5 656.0v5 M407.0 730.5h5M409.5 728.0v5 M181.0 730.5h5M183.5 728.0v5 M190.0 730.5h5M192.5 728.0v5 M196.0 730.5h5M198.5 728.0v5 M208.0 730.5h5M210.5 728.0v5 M220.0 730.5h5M222.5 728.0v5 M228.0 730.5h5M230.5 728.0v5 M269.0 710.5h5M271.5 708.0v5 M358.0 705.5h5M360.5 703.0v5" stroke="#fff" stroke-width="1" fill="none"/>
<polyline points="120.5,50.5 97.5,58.5 79.5,90.5 121.5,124.5 205.5,176.5 193.5,187.5 204.5,206.5 211.5,208.5 247.5,218.5 301.5,250.5 277.5,277.5 307.5,288.5 367.5,321.5 409.5,341.5 384.5,351.5 379.5,359.5 319.5,390.5 325.5,394.5 331.5,395.5 349.5,439.5 355.5,449.5 415.5,482.5 397.5,500.5 397.5,504.5 284.5,529.5 253.5,534.5 280.5,540.5 283.5,540.5 265.5,546.5 265.5,567.5 253.5,572.5 259.5,575.5 229.5,583.5 235.5,585.5 259.5,590.5 175.5,600.5 205.5,604.5 199.5,607.5 313.5,640.5 301.5,645.5 283.5,647.5 271.5,648.5 253.5,654.5 210.5,658.5 223.5,661.5 229.5,665.5 235.5,665.5 253.5,671.5 217.5,676.5 307.5,683.5 277.5,688.5 136.5,706.5 114.5,707.5 98.5,708.5 88.5,709.5 69.5,719.5 68.5,721.5 74.5,722.5 85.5,725.5 73.5,727.5 67.5,729.5" fill="none" stroke="#00ff00" stroke-width="1" />
<polyline points="156.5,48.5 165.5,58.5 178.5,90.5 138.5,124.5 117.5,176.5 144.5,187.5 93.5,206.5 94.5,208.5 136.5,218.5 223.5,250.5 173.5,277.5 189.5,288.5 260.5,321.5 315.5,341.5 305.5,351.5 303.5,359.5 245.5,390.5 248.5,394.5 251.5,395.5 281.5,439.5 277.5,449.5 326.5,482.5 312.5,500.5 314.5,504.5 182.5,529.5 143.5,534.5 158.5,540.5 133.5,546.5 153.5,567.5 145.5,572.5 150.5,574.5 148.5,583.5 158.5,585.5 173.5,590.5 111.5,599.5 115.5,604.5 101.5,604.5 92.5,606.5 190.5,640.5 182.5,645.5 145.5,648.5 174.5,654.5 127.5,658.5 133.5,661.5 101.5,665.5 95.5,665.5 120.5,671.5 126.5,676.5 200.5,683.5 201.5,688.5 188.5,694.5 177.5,700.5 167.5,703.5 171.5,704.5 192.5,706.5 204.5,708.5 202.5,719.5 200.5,722.5 191.5,731.5 184.5,731.5" fill="none" stroke="#ff0080" stroke-width="1" />
<polyline points="534.5,48.5 526.5,58.5 499.5,90.5 466.5,124.5 418.5,176.5 408.5,187.5 393.5,206.5 389.5,208.5 382.5,218.5 385.5,250.5 371.5,277.5 368.5,288.5 358.5,321.5 353.5,341.5 347.5,351.5 353.5,359.5 351.5,390.5 357.5,394.5 313.5,439.5 321.5,482.5 309.5,499.5 298.5,503.5 286.5,528.5 287.5,534.5 282.5,540.5 278.5,546.5 292.5,567.5 357.5,572.5 284.5,575.5 384.5,583.5 420.5,585.5 432.5,590.5 385.5,600.5 370.5,604.5 336.5,606.5 436.5,640.5 437.5,645.5 443.5,647.5 439.5,654.5 441.5,660.5 441.5,665.5 447.5,671.5 451.5,676.5 451.5,683.5 461.5,688.5 455.5,698.5 454.5,703.5 453.5,706.5 457.5,710.5 478.5,719.5 474.5,731.5 480.5,731.5" fill="none" stroke="#00ffff" stroke-width="1" />
<polyline points="661.5,106.5 641.5,124.5 589.5,176.5 578.5,187.5 572.5,206.5 565.5,208.5 558.5,218.5 507.5,250.5 477.5,277.5 470.5,288.5 449.5,321.5 436.5,341.5 431.5,351.5 423.5,359.5 413.5,390.5 411.5,394.5 420.5,439.5 421.5,449.5 424.5,482.5 433.5,500.5 433.5,503.5 433.5,531.5 435.5,534.5 437.5,540.5 437.5,546.5 444.5,567.5 442.5,572.5 443.5,575.5 441.5,583.5 442.5,586.5 443.5,590.5 451.5,600.5 453.5,604.5 455.5,607.5 459.5,631.5 462.5,639.5 463.5,645.5 458.5,647.5 461.5,654.5 463.5,660.5 464.5,665.5 465.5,671.5 469.5,676.5 469.5,683.5 468.5,688.5 476.5,694.5 480.5,700.5 480.5,708.5 478.5,719.5 492.5,731.5 509.5,731.5" fill="none" stroke="#ff0000" stroke-width="1" />
<polyline points="61.5,683.5 80.5,685.5 106.5,687.5 125.5,688.5 168.5,699.5 244.5,707.5 195.5,710.5 97.5,719.5 78.5,721.5 71.5,728.5 62.5,731.5" fill="none" stroke="#ff8000" stroke-width="1" />
<polyline points="61.5,683.5 65.5,688.5 64.5,691.5 62.5,701.5 61.5,709.5 78.5,710.5 122.5,714.5 167.5,718.5 195.5,721.5 230.5,719.5 271.5,710.5 313.5,707.5 326.5,707.5 337.5,707.5 360.5,705.5 399.5,702.5 417.5,700.5 468.5,695.5 477.5,694.5 546.5,688.5 591.5,685.5 628.5,682.5 637.5,683.5 611.5,680.5 582.5,676.5 623.5,671.5 622.5,664.5 595.5,661.5 589.5,658.5 605.5,654.5" fill="none" stroke="#d2d200" stroke-width="1" />
<polyline points="182.5,720.5 209.5,728.5 246.5,731.5 409.5,731.5" fill="none" stroke="#ffff00" stroke-width="1" />
<polyline points="199.5,723.5 229.5,721.5 246.5,720.5" fill="none" stroke="#d2d200" stroke-width="1" />
<polyline points="454.24,50.5 453.6,52.5 452.96,54.5 452.33,56.5 451.7,58.5 451.07,60.5 450.45,62.5 449.83,64.5 449.22,66.5 448.6,68.5 448,70.5 447.39,72.5 446.79,74.5 446.2,76.5 445.61,78.5 445.02,80.5 444.44,82.5 443.86,84.5 443.29,86.5 442.71,88.5 442.15,90.5 441.59,92.5 441.03,94.5 440.47,96.5 439.92,98.5 439.38,100.5 438.84,102.5 438.3,104.5 437.77,106.5 437.24,108.5 436.72,110.5 436.2,112.5 435.68,114.5 435.17,116.5 434.66,118.5 434.16,120.5 433.66,122.5 433.17,124.5 432.68,126.5 432.2,128.5 431.72,130.5 431.24,132.5 430.77,134.5 430.31,136.5 429.85,138.5 429.39,140.5 428.94,142.5 428.49,144.5 428.05,146.5 427.61,148.5 427.18,150.5 426.75,152.5 426.33,154.5 425.91,156.5 425.5,158.5 425.09,160.5 424.69,162.5 424.29,164.5 423.89,166.5 423.51,168.5 423.12,170.5 422.74,172.5 422.37,174.5 422,176.5 421.64,178.5 421.28,180.5 420.93,182.5 420.58,184.5 420.24,186.5 419.9,188.5 419.57,190.5 419.24,192.5 418.92,194.5 418.6,196.5 418.29,198.5 417.99,200.5 417.69,202.5 417.39,204.5 417.1,206.5 416.82,208.5 416.54,210.5 416.27,212.5 416,214.5 415.74,216.5 415.48,218.5 415.23,220.5 414.99,222.5 414.75,224.5 414.51,226.5 414.29,228.5 414.06,230.5 413.85,232.5 413.64,234.5 413.43,236.5 413.23,238.5 413.04,240.5 412.85,242.5 412.67,244.5 412.5,246.5 412.33,248.5 412.17,250.5 412.01,252.5 411.86,254.5 411.71,256.5 411.57,258.5 411.44,260.5 411.32,262.5 411.2,264.5 411.08,266.5 410.97,268.5 410.87,270.5 410.78,272.5 410.69,274.5 410.6,276.5 410.53,278.5 410.46,280.5 410.39,282.5 410.34,284.5 410.28,286.5 410.24,288.5 410.2,290.5 410.17,292.5 410.15,294.5 410.13,296.5 410.11,298.5 410.11,300.5 410.11,302.5 410.12,304.5 410.13,306.5 410.15,308.5 410.18,310.5 410.21,312.5 410.25,314.5 410.3,316.5 410.36,318.5 410.42,320.5 410.48,322.5 410.56,324.5 410.65,326.5 410.74,328.5 410.85,330.5 410.96,332.5 411.08,334.5 411.21,336.5 411.35,338.5 411.5,340.5 411.66,342.5 411.83,344.5 412.01,346.5 412.19,348.5 412.39,350.5 412.59,352.5 412.81,354.5 413.03,356.5 413.26,358.5 413.5,360.5 413.74,362.5 414,364.5 414.26,366.5 414.54,368.5 414.82,370.5 415.11,372.5 415.4,374.5 415.71,376.5 416.02,378.5 416.34,380.5 416.67,382.5 417.01,384.5 417.35,386.5 417.7,388.5 418.06,390.5 418.42,392.5 418.79,394.5 419.17,396.5 419.56,398.5 419.95,400.5 420.34,402.5 420.75,404.5 421.16,406.5 421.57,408.5 421.99,410.5 422.42,412.5 422.84,414.5 423.28,416.5 423.72,418.5 424.16,420.5 424.61,422.5 425.06,424.5 425.52,426.5 425.97,428.5 426.44,430.5 426.9,432.5 427.37,434.5 427.84,436.5 428.31,438.5 428.78,440.5 429.26,442.5 429.73,444.5 430.21,446.5 430.69,448.5 431.17,450.5 431.65,452.5 432.14,454.5 432.63,456.5 433.13,458.5 433.63,460.5 434.14,462.5 434.64,464.5 435.16,466.5 435.67,468.5 436.19,470.5 436.71,472.5 437.24,474.5 437.76,476.5 438.29,478.5 438.82,480.5 439.35,482.5 439.88,484.5 440.41,486.5 440.94,488.5 441.48,490.5 442.01,492.5 442.54,494.5 443.07,496.5 443.6,498.5 444.13,500.5 444.66,502.5 445.18,504.5 445.7,506.5 446.22,508.5 446.74,510.5 447.25,512.5 447.76,514.5 448.27,516.5 448.77,518.5 449.27,520.5 449.76,522.5 450.25,524.5 450.73,526.5 451.21,528.5 451.69,530.5 452.16,532.5 452.63,534.5 453.1,536.5 453.56,538.5 454.02,540.5 454.49,542.5 454.94,544.5 455.4,546.5 455.85,548.5 456.3,550.5 456.74,552.5 457.18,554.5 457.62,556.5 458.05,558.5 458.47,560.5 458.89,562.5 459.31,564.5 459.72,566.5 460.13,568.5 460.53,570.5 460.92,572.5 461.31,574.5 461.69,576.5 462.06,578.5 462.43,580.5 462.79,582.5 463.14,584.5 463.49,586.5 463.83,588.5 464.16,590.5 464.49,592.5 464.81,594.5 465.13,596.5 465.44,598.5 465.75,600.5 466.06,602.5 466.35,604.5 466.65,606.5 466.94,608.5 467.22,610.5 467.5,612.5 467.78,614.5 468.06,616.5 468.33,618.5 468.6,620.5 468.86,622.5 469.13,624.5 469.39,626.5 469.64,628.5 469.9,630.5 470.15,632.5 470.41,634.5 470.66,636.5 470.91,638.5 471.16,640.5 471.41,642.5 471.66,644.5 471.9,646.5 472.15,648.5 472.39,650.5 472.63,652.5 472.86,654.5 473.09,656.5 473.32,658.5 473.55,660.5 473.77,662.5 473.99,664.5 474.21,666.5 474.42,668.5 474.64,670.5 474.86,672.5 475.07,674.5 475.29,676.5 475.5,678.5 475.71,680.5 475.92,682.5 476.12,684.5 476.33,686.5 476.52,688.5 476.71,690.5 476.9,692.5 477.08,694.5 477.26,696.5 477.42,698.5 477.58,700.5 477.73,702.5 477.88,704.5 478.03,706.5 478.18,708.5 478.33,710.5 478.49,712.5 478.65,714.5 478.82,716.5 479,718.5 479.5,721.5 494,731.5" fill="none" stroke="#ff00ff" stroke-width="1" />
<polyline points="457.24,50.5 456.6,52.5 455.96,54.5 455.33,56.5 454.7,58.5 454.07,60.5 453.45,62.5 452.83,64.5 452.22,66.5 451.6,68.5 451,70.5 450.39,72.5 449.79,74.5 449.2,76.5 448.61,78.5 448.02,80.5 447.44,82.5 446.86,84.5 446.29,86.5 445.71,88.5 445.15,90.5 444.59,92.5 444.03,94.5 443.47,96.5 442.92,98.5 442.38,100.5 441.84,102.5 441.3,104.5 440.77,106.5 440.24,108.5 439.72,110.5 439.2,112.5 438.68,114.5 438.17,116.5 437.66,118.5 437.16,120.5 436.66,122.5 436.17,124.5 435.68,126.5 435.2,128.5 434.72,130.5 434.24,132.5 433.77,134.5 433.31,136.5 432.85,138.5 432.39,140.5 431.94,142.5 431.49,144.5 431.05,146.5 430.61,148.5 430.18,150.5 429.75,152.5 429.33,154.5 428.91,156.5 428.5,158.5 428.09,160.5 427.69,162.5 427.29,164.5 426.89,166.5 426.51,168.5 426.12,170.5 425.74,172.5 425.37,174.5 425,176.5 424.64,178.5 424.28,180.5 423.93,182.5 423.58,184.5 423.24,186.5 422.9,188.5 422.57,190.5 422.24,192.5 421.92,194.5 421.6,196.5 421.29,198.5 420.99,200.5 420.69,202.5 420.39,204.5 420.1,206.5 419.82,208.5 419.54,210.5 419.27,212.5 419,214.5 418.74,216.5 418.48,218.5 418.23,220.5 417.99,222.5 417.75,224.5 417.51,226.5 417.29,228.5 417.06,230.5 416.85,232.5 416.64,234.5 416.43,236.5 416.23,238.5 416.04,240.5 415.85,242.5 415.67,244.5 415.5,246.5 415.33,248.5 415.17,250.5 415.01,252.5 414.86,254.5 414.71,256.5 414.57,258.5 414.44,260.5 414.32,262.5 414.2,264.5 414.08,266.5 413.97,268.5 413.87,270.5 413.78,272.5 413.69,274.5 413.6,276.5 413.53,278.5 413.46,280.5 413.39,282.5 413.34,284.5 413.28,286.5 413.24,288.5 413.2,290.5 413.17,292.5 413.15,294.5 413.13,296.5 413.11,298.5 413.11,300.5 413.11,302.5 413.12,304.5 413.13,306.5 413.15,308.5 413.18,310.5 413.21,312.5 413.25,314.5 413.3,316.5 413.36,318.5 413.42,320.5 413.48,322.5 413.56,324.5 413.65,326.5 413.74,328.5 413.85,330.5 413.96,332.5 414.08,334.5 414.21,336.5 414.35,338.5 414.5,340.5 414.66,342.5 414.83,344.5 415.01,346.5 415.19,348.5 415.39,350.5 415.59,352.5 415.81,354.5 416.03,356.5 416.26,358.5 416.5,360.5 416.74,362.5 417,364.5 417.26,366.5 417.54,368.5 417.82,370.5 418.11,372.5 418.4,374.5 418.71,376.5 419.02,378.5 419.34,380.5 419.67,382.5 420.01,384.5 420.35,386.5 420.7,388.5 421.06,390.5 421.42,392.5 421.79,394.5 422.17,396.5 422.56,398.5 422.95,400.5 423.34,402.5 423.75,404.5 424.16,406.5 424.57,408.5 424.99,410.5 425.42,412.5 425.84,414.5 426.28,416.5 426.72,418.5 427.16,420.5 427.61,422.5 428.06,424.5 428.52,426.5 428.97,428.5 429.44,430.5 429.9,432.5 430.37,434.5 430.84,436.5 431.31,438.5 431.78,440.5 432.26,442.5 432.73,444.5 433.21,446.5 433.69,448.5 434.17,450.5 434.65,452.5 435.14,454.5 435.63,456.5 436.13,458.5 436.63,460.5 437.14,462.5 437.64,464.5 438.16,466.5 438.67,468.5 439.19,470.5 439.71,472.5 440.24,474.5 440.76,476.5 441.29,478.5 441.82,480.5 442.35,482.5 442.88,484.5 443.41,486.5 443.94,488.5 444.48,490.5 445.01,492.5 445.54,494.5 446.07,496.5 446.6,498.5 447.13,500.5 447.66,502.5 448.18,504.5 448.7,506.5 449.22,508.5 449.74,510.5 450.25,512.5 450.76,514.5 451.27,516.5 451.77,518.5 452.27,520.5 452.76,522.5 453.25,524.5 453.73,526.5 454.21,528.5 454.69,530.5 455.16,532.5 455.63,534.5 456.1,536.5 456.56,538.5 457.02,540.5 457.49,542.5 457.94,544.5 458.4,546.5 458.85,548.5 459.3,550.5 459.74,552.5 460.18,554.5 460.62,556.5 461.05,558.5 461.47,560.5 461.89,562.5 462.31,564.5 462.72,566.5 463.13,568.5 463.53,570.5 463.92,572.5 464.31,574.5 464.69,576.5 465.06,578.5 465.43,580.5 465.79,582.5 466.14,584.5 466.49,586.5 466.83,588.5 467.16,590.5 467.49,592.5 467.81,594.5 468.13,596.5 468.44,598.5 468.75,600.5 469.06,602.5 469.35,604.5 469.65,606.5 469.94,608.5 470.22,610.5 470.5,612.5 470.78,614.5 471.06,616.5 471.33,618.5 471.6,620.5 471.86,622.5 472.13,624.5 472.39,626.5 472.64,628.5 472.9,630.5 473.15,632.5 473.41,634.5 473.66,636.5 473.91,638.5 474.16,640.5 474.41,642.5 474.66,644.5 474.9,646.5 475.15,648.5 475.39,650.5 475.63,652.5 475.86,654.5 476.09,656.5 476.32,658.5 476.55,660.5 476.77,662.5 476.99,664.5 477.21,666.5 477.42,668.5 477.64,670.5 477.86,672.5 478.07,674.5 478.29,676.5 478.5,678.5 478.71,680.5 478.92,682.5 479.12,684.5 479.33,686.5 479.52,688.5 479.71,690.5 479.9,692.5 480.08,694.5 480.26,696.5 480.42,698.5 480.58,700.5 480.73,702.5 480.88,704.5 481.03,706.5 481.18,708.5 481.33,710.5 481.49,712.5 481.65,714.5 481.82,716.5 482,718.5 482.5,721.5 497,731.5" fill="none" stroke="#ffc0ff" stroke-width="1" />
<line x1="61" y1="720.5" x2="626" y2="720.5" stroke="#ff00ff" stroke-width="1"/>
</g>
<g shape-rendering="crispEdges" font-size="13">
<rect x="67.5" y="607.5" width="43" height="17" fill="#000" stroke="#ffff00" stroke-width="1.5"/>
<text transform="translate(71,621) scale(0.9286,1)" font-size="14" fill="#ffff00">CAPE</text>
<rect x="67.5" y="636.5" width="57" height="17" fill="#000" stroke="#e07000" stroke-width="1.5"/>
<text transform="translate(71,650) scale(0.9286,1)" font-size="14" fill="#e07000" style="white-space:pre">CINH * 5</text>
<rect x="625.5" y="711.5" width="30" height="17" fill="#000" stroke="#ff00ff" stroke-width="1.5"/>
<text x="628" y="725" fill="#ff00ff" textLength="24" lengthAdjust="spacingAndGlyphs">LCL</text>
<rect x="334" y="704" width="7" height="7" fill="#d0c800"/>
<rect x="626" y="679" width="7" height="7" fill="#d0c800"/>
<rect x="602" y="651" width="7" height="7" fill="#d0c800"/>
<g font-size="8" font-weight="bold" fill="#000" text-anchor="middle">
<text x="337.5" y="710.5">1</text><text x="629.5" y="685.5">2</text><text x="605.5" y="657.5">3</text>
</g>
</g>
</svg></body></html>
